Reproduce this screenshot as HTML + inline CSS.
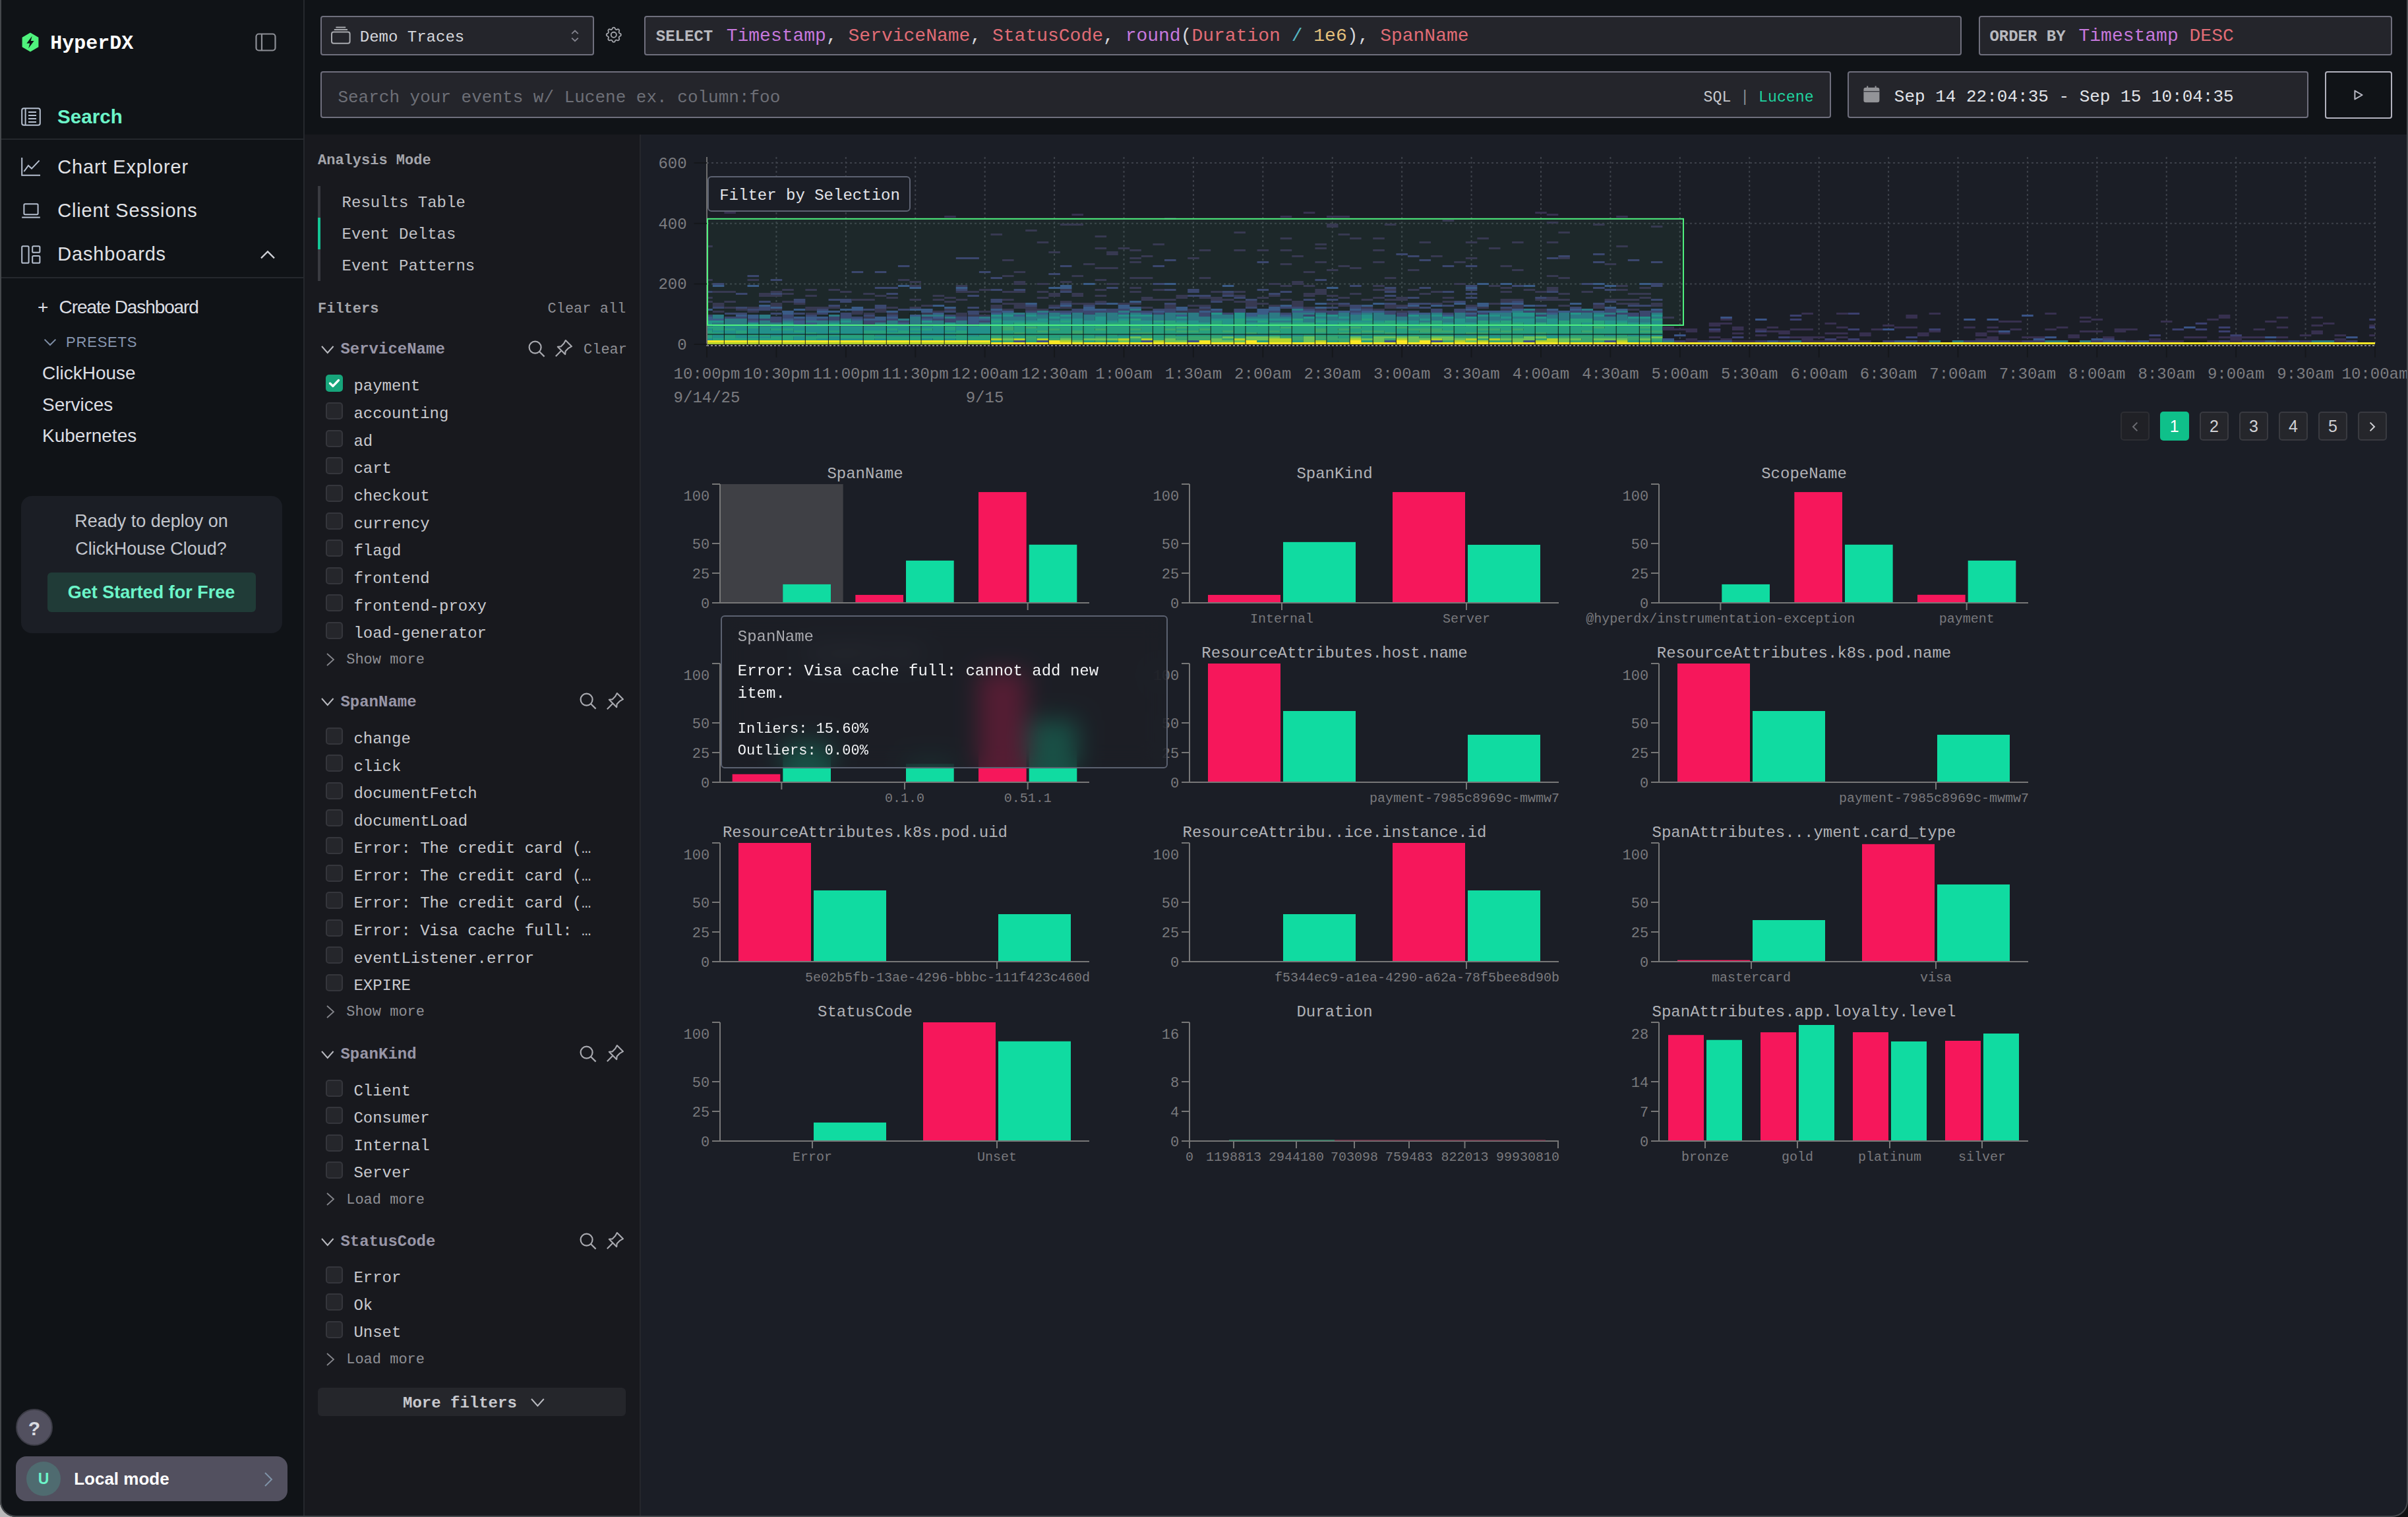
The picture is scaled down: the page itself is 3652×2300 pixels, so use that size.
<!DOCTYPE html><html><head><meta charset="utf-8"><style>
html{background:#2b2c2f}
@media (min-width:2400px){html{zoom:2}}
html,body{margin:0;padding:0;overflow:hidden}
body{width:1826px;height:1150px;position:relative;background:#101317;font-family:"Liberation Sans",sans-serif}
.t{position:absolute;white-space:pre}
.b{position:absolute;box-sizing:border-box}
svg{position:absolute;overflow:visible}
</style></head><body>

<div class="b" style="left:231.00px;top:102.00px;width:254.00px;height:1048.00px;background:#18191e"></div>
<div class="b" style="left:485.00px;top:102.00px;width:1.00px;height:1048.00px;background:#25262c"></div>
<div class="b" style="left:486.00px;top:102.00px;width:1340.00px;height:1048.00px;background:#1b1e26"></div>
<div class="b" style="left:230.00px;top:0.00px;width:1.00px;height:1150.00px;background:#25282d"></div>
<svg style="left:16px;top:24.5px" width="14" height="15" viewBox="0 0 14 15">
<path d="M7 0.3 L13.2 3.9 L13.2 11.1 L7 14.7 L0.8 11.1 L0.8 3.9 Z" fill="#4ff27d"/>
<path d="M8.3 2.9 L4.2 8.4 L6.6 8.4 L5.6 12.1 L9.8 6.5 L7.4 6.5 Z" fill="#0f1216"/>
</svg>
<div class="t" style="top:22.51px;font-size:15px;line-height:21.00px;color:#ffffff;font-family:'Liberation Mono', monospace;font-weight:700;left:38.10px;">HyperDX</div>
<svg style="left:193.5px;top:25px" width="16" height="14" viewBox="0 0 16 14">
<rect x="0.75" y="0.75" width="14.5" height="12.5" rx="2" fill="none" stroke="#8d8f96" stroke-width="1.1"/>
<line x1="5" y1="0.8" x2="5" y2="13.2" stroke="#8d8f96" stroke-width="1.1"/>
</svg>
<div class="b" style="left:1.00px;top:105.00px;width:229.00px;height:1.00px;background:#25282d"></div>
<div class="b" style="left:1.00px;top:210.00px;width:229.00px;height:1.00px;background:#25282d"></div>
<svg style="left:16px;top:81.5px" width="15" height="14" viewBox="0 0 15 14" fill="none" stroke="#b5bfcf" stroke-width="1">
<rect x="0.6" y="0.6" width="13.8" height="12.8" rx="1.5"/>
<line x1="3.3" y1="0.6" x2="3.3" y2="13.4"/>
<line x1="5.5" y1="3.5" x2="11.5" y2="3.5"/><line x1="5.5" y1="6" x2="11.5" y2="6"/><line x1="5.5" y1="8.5" x2="11.5" y2="8.5"/><line x1="5.5" y1="11" x2="11.5" y2="11"/>
</svg>
<div class="t" style="top:77.92px;font-size:14.8px;line-height:21.00px;color:#6cf5c9;font-family:'Liberation Sans', sans-serif;font-weight:700;left:43.50px;">Search</div>
<svg style="left:16px;top:119.5px" width="15" height="14" viewBox="0 0 15 14" fill="none" stroke="#b5bfcf" stroke-width="1">
<path d="M0.6 0 V13.4 H14.5"/><path d="M2.2 10.5 L5.5 6 L8 8.3 L13.8 2.2"/>
</svg>
<div class="t" style="top:116.32px;font-size:14.5px;line-height:20.00px;color:#e1e2e6;font-family:'Liberation Sans', sans-serif;font-weight:400;letter-spacing:0.42px;left:43.60px;">Chart Explorer</div>
<svg style="left:16px;top:154px" width="15" height="12" viewBox="0 0 15 12" fill="none" stroke="#b5bfcf" stroke-width="1">
<rect x="2.2" y="0.6" width="10.6" height="8" rx="0.8"/><path d="M0.6 10.8 H14.4"/>
</svg>
<div class="t" style="top:149.47px;font-size:14.5px;line-height:20.00px;color:#e1e2e6;font-family:'Liberation Sans', sans-serif;font-weight:400;letter-spacing:0.42px;left:43.60px;">Client Sessions</div>
<svg style="left:16px;top:186px" width="15" height="14" viewBox="0 0 15 14" fill="none" stroke="#b5bfcf" stroke-width="1">
<rect x="0.6" y="0.6" width="5.2" height="12.8" rx="0.8"/><rect x="8.6" y="0.6" width="5.6" height="4.8" rx="0.8"/><rect x="8.6" y="8" width="5.6" height="5.4" rx="0.8"/>
</svg>
<div class="t" style="top:182.62px;font-size:14.5px;line-height:20.00px;color:#e1e2e6;font-family:'Liberation Sans', sans-serif;font-weight:400;letter-spacing:0.42px;left:43.60px;">Dashboards</div>
<svg style="left:197px;top:189.5px" width="12" height="7" viewBox="0 0 12 7" fill="none" stroke="#d0d2d8" stroke-width="1.1">
<path d="M1 6.2 L6 1.2 L11 6.2"/></svg>
<div class="t" style="top:223.15px;font-size:14px;line-height:20.00px;color:#dcdee3;font-family:'Liberation Sans', sans-serif;font-weight:400;left:28.50px;">+</div>
<div class="t" style="top:223.15px;font-size:14px;line-height:20.00px;color:#dcdee3;font-family:'Liberation Sans', sans-serif;font-weight:400;letter-spacing:-0.55px;left:44.80px;">Create Dashboard</div>
<svg style="left:33px;top:256.5px" width="10" height="6" viewBox="0 0 10 6" fill="none" stroke="#7f8ea6" stroke-width="1">
<path d="M0.8 0.8 L5 5 L9.2 0.8"/></svg>
<div class="t" style="top:251.99px;font-size:11px;line-height:15.00px;color:#8796b0;font-family:'Liberation Sans', sans-serif;font-weight:400;letter-spacing:0.4px;left:50.00px;">PRESETS</div>
<div class="t" style="top:273.15px;font-size:14px;line-height:20.00px;color:#dcdee3;font-family:'Liberation Sans', sans-serif;font-weight:400;left:32.00px;">ClickHouse</div>
<div class="t" style="top:296.95px;font-size:14px;line-height:20.00px;color:#dcdee3;font-family:'Liberation Sans', sans-serif;font-weight:400;left:32.00px;">Services</div>
<div class="t" style="top:320.65px;font-size:14px;line-height:20.00px;color:#dcdee3;font-family:'Liberation Sans', sans-serif;font-weight:400;left:32.00px;">Kubernetes</div>
<div class="b" style="left:16.00px;top:376.00px;width:198.00px;height:104.00px;background:#1b1e25;border-radius:8px"></div>
<div class="t" style="top:385.62px;font-size:13.5px;line-height:19.00px;color:#c3c6cd;font-family:'Liberation Sans', sans-serif;font-weight:400;left:-285.25px;width:800px;text-align:center;">Ready to deploy on</div>
<div class="t" style="top:406.42px;font-size:13.5px;line-height:19.00px;color:#c3c6cd;font-family:'Liberation Sans', sans-serif;font-weight:400;left:-285.50px;width:800px;text-align:center;">ClickHouse Cloud?</div>
<div class="b" style="left:36.00px;top:434.00px;width:158.00px;height:30.00px;background:#203b37;border-radius:3px"></div>
<div class="t" style="top:439.52px;font-size:13.5px;line-height:19.00px;color:#6cf5c9;font-family:'Liberation Sans', sans-serif;font-weight:700;left:-285.25px;width:800px;text-align:center;">Get Started for Free</div>
<div class="b" style="left:12.00px;top:1068.00px;width:28.00px;height:28.00px;background:#52505f;border-radius:50%;border:1px solid #3c3c46"></div>
<div class="t" style="top:1072.70px;font-size:15px;line-height:21.00px;color:#d9dbe0;font-family:'Liberation Sans', sans-serif;font-weight:700;left:-374.00px;width:800px;text-align:center;">?</div>
<div class="b" style="left:12.00px;top:1104.00px;width:206.00px;height:34.00px;background:#52505f;border-radius:8px"></div>
<div class="b" style="left:20.00px;top:1108.00px;width:26.00px;height:26.00px;background:#4f6b70;border-radius:50%"></div>
<div class="t" style="top:1112.81px;font-size:11.5px;line-height:16.00px;color:#6cf5c9;font-family:'Liberation Sans', sans-serif;font-weight:700;left:-367.00px;width:800px;text-align:center;">U</div>
<div class="t" style="top:1111.99px;font-size:13px;line-height:18.00px;color:#ffffff;font-family:'Liberation Sans', sans-serif;font-weight:700;left:56.10px;">Local mode</div>
<svg style="left:200px;top:1115.5px" width="7" height="12" viewBox="0 0 7 12" fill="none" stroke="#7f93a8" stroke-width="1">
<path d="M1 1 L6 6 L1 11"/></svg>
<div class="b" style="left:243.00px;top:12.00px;width:207.30px;height:30.00px;background:#24252b;border:1px solid #6f6f7d;border-radius:2px"></div>
<svg style="left:250.5px;top:20px" width="16" height="14" viewBox="0 0 16 14" fill="none" stroke="#a7a9ae" stroke-width="1">
<rect x="1" y="4.3" width="13.8" height="8.6" rx="1.5"/><path d="M2.9 2.5 H13 M4.2 0.8 H11.6"/></svg>
<div class="t" style="top:19.86px;font-size:12px;line-height:17.00px;color:#d5d7dc;font-family:'Liberation Mono', monospace;font-weight:400;left:272.90px;">Demo Traces</div>
<svg style="left:432.5px;top:22.3px" width="7" height="10" viewBox="0 0 7 10" fill="none" stroke="#85858f" stroke-width="0.9">
<path d="M1.1 3.1 L3.5 0.8 L5.9 3.1 M1.1 6.3 L3.5 8.6 L5.9 6.3"/></svg>
<svg style="left:458.1px;top:19.1px" width="14.8" height="14.8" viewBox="0 0 24 24" fill="none" stroke="#a2a4aa" stroke-width="1.5" stroke-linecap="round" stroke-linejoin="round">
<path d="M10.325 4.317c.426 -1.756 2.924 -1.756 3.35 0a1.724 1.724 0 0 0 2.573 1.066c1.543 -.94 3.31 .826 2.37 2.37a1.724 1.724 0 0 0 1.065 2.572c1.756 .426 1.756 2.924 0 3.35a1.724 1.724 0 0 0 -1.066 2.573c.94 1.543 -.826 3.31 -2.37 2.37a1.724 1.724 0 0 0 -2.572 1.065c-.426 1.756 -2.924 1.756 -3.35 0a1.724 1.724 0 0 0 -2.573 -1.066c-1.543 .94 -3.31 -.826 -2.37 -2.37a1.724 1.724 0 0 0 -1.065 -2.572c-1.756 -.426 -1.756 -2.924 0 -3.35a1.724 1.724 0 0 0 1.066 -2.573c-.94 -1.543 .826 -3.31 2.37 -2.37c1 .608 2.296 .07 2.572 -1.065z"/><circle cx="12" cy="12" r="3.3"/></svg>
<div class="b" style="left:488.60px;top:12.00px;width:999.00px;height:30.00px;background:#24252b;border:1px solid #6f6f7d;border-radius:2px"></div>
<div class="t" style="top:19.71px;font-size:12px;line-height:17.00px;color:#b8b9bf;font-family:'Liberation Mono', monospace;font-weight:700;left:497.40px;">SELECT</div>
<div class="t" style="top:17.67px;font-size:14px;line-height:20.00px;color:#d5d7dc;font-family:'Liberation Mono', monospace;font-weight:400;left:550.85px;"><span style="color:#c678dd">Timestamp</span><span style="color:#d5d7dc">, </span><span style="color:#e06c75">ServiceName</span><span style="color:#d5d7dc">, </span><span style="color:#e06c75">StatusCode</span><span style="color:#d5d7dc">, </span><span style="color:#c678dd">round</span><span style="color:#d5d7dc">(</span><span style="color:#e06c75">Duration</span><span style="color:#d5d7dc"> </span><span style="color:#56b6c2">/</span><span style="color:#d5d7dc"> </span><span style="color:#e5c07b">1e6</span><span style="color:#d5d7dc">), </span><span style="color:#e06c75">SpanName</span></div>
<div class="b" style="left:1500.25px;top:12.00px;width:313.90px;height:30.00px;background:#24252b;border:1px solid #6f6f7d;border-radius:2px"></div>
<div class="t" style="top:19.71px;font-size:12px;line-height:17.00px;color:#b8b9bf;font-family:'Liberation Mono', monospace;font-weight:700;left:1508.70px;">ORDER BY</div>
<div class="t" style="top:17.67px;font-size:14px;line-height:20.00px;color:#d5d7dc;font-family:'Liberation Mono', monospace;font-weight:400;left:1576.25px;"><span style="color:#c678dd">Timestamp</span> <span style="color:#e06c75">DESC</span></div>
<div class="b" style="left:243.20px;top:54.20px;width:1145.50px;height:35.50px;background:#24252b;border:1px solid #6f6f7d;border-radius:2px"></div>
<div class="t" style="top:64.84px;font-size:13px;line-height:18.00px;color:#6d6f77;font-family:'Liberation Mono', monospace;font-weight:400;left:256.20px;">Search your events w/ Lucene ex. column:foo</div>
<div class="t" style="top:65.81px;font-size:11.6px;line-height:16.00px;color:#c6c8cd;font-family:'Liberation Mono', monospace;font-weight:400;left:1291.80px;">SQL <span style="color:#8c8e96">|</span> <span style="color:#20d39f">Lucene</span></div>
<div class="b" style="left:1401.00px;top:54.20px;width:349.50px;height:35.50px;background:#24252b;border:1px solid #6f6f7d;border-radius:2px"></div>
<svg style="left:1413px;top:65px" width="12.5" height="13" viewBox="0 0 12.5 13">
<rect x="0.2" y="1.4" width="12" height="11.2" rx="1.6" fill="#939498"/><rect x="0.2" y="4.1" width="12" height="0.55" fill="#24252b"/><rect x="2.6" y="0.2" width="1" height="2" fill="#939498"/><rect x="8.8" y="0.2" width="1" height="2" fill="#939498"/></svg>
<div class="t" style="top:64.64px;font-size:13px;line-height:18.00px;color:#e2e4e9;font-family:'Liberation Mono', monospace;font-weight:400;left:1436.40px;">Sep 14 22:04:35 - Sep 15 10:04:35</div>
<div class="b" style="left:1763.00px;top:54.00px;width:50.90px;height:36.00px;background:#101317;border:1px solid #b2b2be;border-radius:2px"></div>
<svg style="left:1784.6px;top:67.6px" width="8" height="9" viewBox="0 0 8 9" fill="none" stroke="#b9b9c4" stroke-width="1" stroke-linejoin="round">
<path d="M1.2 1.3 L6.8 4.5 L1.2 7.7 Z"/></svg>
<div class="t" style="top:114.27px;font-size:11px;line-height:15.00px;color:#a4a5ab;font-family:'Liberation Mono', monospace;font-weight:700;left:241.00px;">Analysis Mode</div>
<div class="b" style="left:241.00px;top:140.85px;width:2.00px;height:72.15px;background:#3a3b41"></div>
<div class="b" style="left:241.00px;top:164.75px;width:2.00px;height:24.20px;background:#14c595"></div>
<div class="t" style="top:145.51px;font-size:12px;line-height:17.00px;color:#c1c2c7;font-family:'Liberation Mono', monospace;font-weight:400;left:259.30px;">Results Table</div>
<div class="t" style="top:169.51px;font-size:12px;line-height:17.00px;color:#c1c2c7;font-family:'Liberation Mono', monospace;font-weight:400;left:259.30px;">Event Deltas</div>
<div class="t" style="top:193.41px;font-size:12px;line-height:17.00px;color:#c1c2c7;font-family:'Liberation Mono', monospace;font-weight:400;left:259.30px;">Event Patterns</div>
<div class="t" style="top:227.17px;font-size:11px;line-height:15.00px;color:#a4a5ab;font-family:'Liberation Mono', monospace;font-weight:700;left:241.00px;">Filters</div>
<div class="t" style="top:227.17px;font-size:11px;line-height:15.00px;color:#8e8f95;font-family:'Liberation Mono', monospace;font-weight:400;left:-325.35px;width:800px;text-align:right;">Clear all</div>
<svg style="left:243.20px;top:261.40px" width="10.80" height="7.00" viewBox="0 0 10.80 7.00" fill="none" stroke="#b9bac0" stroke-width="1.0"><path d="M1 1 L5.40 6.00 L9.80 1"/></svg>
<div class="t" style="top:256.71px;font-size:12px;line-height:17.00px;color:#9896a7;font-family:'Liberation Mono', monospace;font-weight:700;left:258.20px;">ServiceName</div>
<svg style="left:400.60px;top:258.00px" width="13" height="13" viewBox="0 0 13 13" fill="none" stroke="#a9aab0" stroke-width="1.1"><circle cx="5.3" cy="5.3" r="4.5"/><path d="M8.6 8.6 L12.3 12.3"/></svg>
<svg style="left:420.60px;top:257.10px" width="14" height="14" viewBox="0 0 14 14" fill="none" stroke="#a9aab0" stroke-width="1.05" stroke-linejoin="round"><path d="M8.4 1 L13 5.6 L10.6 6.9 L8.3 9.2 L8.1 11.6 L2.4 5.9 L4.8 5.7 L7.1 3.4 Z"/><path d="M5.2 8.8 L0.9 13.1"/></svg>
<div class="t" style="top:257.97px;font-size:11px;line-height:15.00px;color:#8e8f95;font-family:'Liberation Mono', monospace;font-weight:400;left:442.50px;">Clear</div>
<div class="b" style="left:247.20px;top:284.10px;width:13.00px;height:13.00px;background:#17a57b;border-radius:2.5px"></div>
<svg style="left:247.20px;top:284.10px" width="13" height="13" viewBox="0 0 13 13" fill="none" stroke="#ffffff" stroke-width="1.7" stroke-linecap="round" stroke-linejoin="round"><path d="M3.3 6.6 L5.5 8.7 L9.7 4.3"/></svg>
<div class="t" style="top:284.71px;font-size:12px;line-height:17.00px;color:#c8c9ce;font-family:'Liberation Mono', monospace;font-weight:400;left:268.20px;">payment</div>
<div class="b" style="left:247.20px;top:304.93px;width:13.00px;height:13.00px;background:#25262b;border:1px solid #35363c;border-radius:2.5px"></div>
<div class="t" style="top:305.54px;font-size:12px;line-height:17.00px;color:#c8c9ce;font-family:'Liberation Mono', monospace;font-weight:400;left:268.20px;">accounting</div>
<div class="b" style="left:247.20px;top:325.76px;width:13.00px;height:13.00px;background:#25262b;border:1px solid #35363c;border-radius:2.5px"></div>
<div class="t" style="top:326.37px;font-size:12px;line-height:17.00px;color:#c8c9ce;font-family:'Liberation Mono', monospace;font-weight:400;left:268.20px;">ad</div>
<div class="b" style="left:247.20px;top:346.59px;width:13.00px;height:13.00px;background:#25262b;border:1px solid #35363c;border-radius:2.5px"></div>
<div class="t" style="top:347.20px;font-size:12px;line-height:17.00px;color:#c8c9ce;font-family:'Liberation Mono', monospace;font-weight:400;left:268.20px;">cart</div>
<div class="b" style="left:247.20px;top:367.42px;width:13.00px;height:13.00px;background:#25262b;border:1px solid #35363c;border-radius:2.5px"></div>
<div class="t" style="top:368.03px;font-size:12px;line-height:17.00px;color:#c8c9ce;font-family:'Liberation Mono', monospace;font-weight:400;left:268.20px;">checkout</div>
<div class="b" style="left:247.20px;top:388.25px;width:13.00px;height:13.00px;background:#25262b;border:1px solid #35363c;border-radius:2.5px"></div>
<div class="t" style="top:388.86px;font-size:12px;line-height:17.00px;color:#c8c9ce;font-family:'Liberation Mono', monospace;font-weight:400;left:268.20px;">currency</div>
<div class="b" style="left:247.20px;top:409.08px;width:13.00px;height:13.00px;background:#25262b;border:1px solid #35363c;border-radius:2.5px"></div>
<div class="t" style="top:409.69px;font-size:12px;line-height:17.00px;color:#c8c9ce;font-family:'Liberation Mono', monospace;font-weight:400;left:268.20px;">flagd</div>
<div class="b" style="left:247.20px;top:429.91px;width:13.00px;height:13.00px;background:#25262b;border:1px solid #35363c;border-radius:2.5px"></div>
<div class="t" style="top:430.52px;font-size:12px;line-height:17.00px;color:#c8c9ce;font-family:'Liberation Mono', monospace;font-weight:400;left:268.20px;">frontend</div>
<div class="b" style="left:247.20px;top:450.74px;width:13.00px;height:13.00px;background:#25262b;border:1px solid #35363c;border-radius:2.5px"></div>
<div class="t" style="top:451.35px;font-size:12px;line-height:17.00px;color:#c8c9ce;font-family:'Liberation Mono', monospace;font-weight:400;left:268.20px;">frontend-proxy</div>
<div class="b" style="left:247.20px;top:471.57px;width:13.00px;height:13.00px;background:#25262b;border:1px solid #35363c;border-radius:2.5px"></div>
<div class="t" style="top:472.18px;font-size:12px;line-height:17.00px;color:#c8c9ce;font-family:'Liberation Mono', monospace;font-weight:400;left:268.20px;">load-generator</div>
<svg style="left:246.80px;top:494.40px" width="7.00" height="11.00" viewBox="0 0 7.00 11.00" fill="none" stroke="#85868c" stroke-width="0.9"><path d="M1 1 L6.00 5.50 L1 10.00"/></svg>
<div class="t" style="top:493.17px;font-size:11px;line-height:15.00px;color:#8e8f95;font-family:'Liberation Mono', monospace;font-weight:400;left:262.60px;">Show more</div>
<svg style="left:243.20px;top:528.60px" width="10.80" height="7.00" viewBox="0 0 10.80 7.00" fill="none" stroke="#b9bac0" stroke-width="1.0"><path d="M1 1 L5.40 6.00 L9.80 1"/></svg>
<div class="t" style="top:523.91px;font-size:12px;line-height:17.00px;color:#9896a7;font-family:'Liberation Mono', monospace;font-weight:700;left:258.20px;">SpanName</div>
<svg style="left:439.60px;top:525.20px" width="13" height="13" viewBox="0 0 13 13" fill="none" stroke="#a9aab0" stroke-width="1.1"><circle cx="5.3" cy="5.3" r="4.5"/><path d="M8.6 8.6 L12.3 12.3"/></svg>
<svg style="left:459.60px;top:524.30px" width="14" height="14" viewBox="0 0 14 14" fill="none" stroke="#a9aab0" stroke-width="1.05" stroke-linejoin="round"><path d="M8.4 1 L13 5.6 L10.6 6.9 L8.3 9.2 L8.1 11.6 L2.4 5.9 L4.8 5.7 L7.1 3.4 Z"/><path d="M5.2 8.8 L0.9 13.1"/></svg>
<div class="b" style="left:247.20px;top:551.40px;width:13.00px;height:13.00px;background:#25262b;border:1px solid #35363c;border-radius:2.5px"></div>
<div class="t" style="top:552.01px;font-size:12px;line-height:17.00px;color:#c8c9ce;font-family:'Liberation Mono', monospace;font-weight:400;left:268.20px;">change</div>
<div class="b" style="left:247.20px;top:572.18px;width:13.00px;height:13.00px;background:#25262b;border:1px solid #35363c;border-radius:2.5px"></div>
<div class="t" style="top:572.79px;font-size:12px;line-height:17.00px;color:#c8c9ce;font-family:'Liberation Mono', monospace;font-weight:400;left:268.20px;">click</div>
<div class="b" style="left:247.20px;top:592.96px;width:13.00px;height:13.00px;background:#25262b;border:1px solid #35363c;border-radius:2.5px"></div>
<div class="t" style="top:593.57px;font-size:12px;line-height:17.00px;color:#c8c9ce;font-family:'Liberation Mono', monospace;font-weight:400;left:268.20px;">documentFetch</div>
<div class="b" style="left:247.20px;top:613.74px;width:13.00px;height:13.00px;background:#25262b;border:1px solid #35363c;border-radius:2.5px"></div>
<div class="t" style="top:614.35px;font-size:12px;line-height:17.00px;color:#c8c9ce;font-family:'Liberation Mono', monospace;font-weight:400;left:268.20px;">documentLoad</div>
<div class="b" style="left:247.20px;top:634.52px;width:13.00px;height:13.00px;background:#25262b;border:1px solid #35363c;border-radius:2.5px"></div>
<div class="t" style="top:635.13px;font-size:12px;line-height:17.00px;color:#c8c9ce;font-family:'Liberation Mono', monospace;font-weight:400;left:268.20px;">Error: The credit card (…</div>
<div class="b" style="left:247.20px;top:655.30px;width:13.00px;height:13.00px;background:#25262b;border:1px solid #35363c;border-radius:2.5px"></div>
<div class="t" style="top:655.91px;font-size:12px;line-height:17.00px;color:#c8c9ce;font-family:'Liberation Mono', monospace;font-weight:400;left:268.20px;">Error: The credit card (…</div>
<div class="b" style="left:247.20px;top:676.08px;width:13.00px;height:13.00px;background:#25262b;border:1px solid #35363c;border-radius:2.5px"></div>
<div class="t" style="top:676.69px;font-size:12px;line-height:17.00px;color:#c8c9ce;font-family:'Liberation Mono', monospace;font-weight:400;left:268.20px;">Error: The credit card (…</div>
<div class="b" style="left:247.20px;top:696.86px;width:13.00px;height:13.00px;background:#25262b;border:1px solid #35363c;border-radius:2.5px"></div>
<div class="t" style="top:697.47px;font-size:12px;line-height:17.00px;color:#c8c9ce;font-family:'Liberation Mono', monospace;font-weight:400;left:268.20px;">Error: Visa cache full: …</div>
<div class="b" style="left:247.20px;top:717.64px;width:13.00px;height:13.00px;background:#25262b;border:1px solid #35363c;border-radius:2.5px"></div>
<div class="t" style="top:718.25px;font-size:12px;line-height:17.00px;color:#c8c9ce;font-family:'Liberation Mono', monospace;font-weight:400;left:268.20px;">eventListener.error</div>
<div class="b" style="left:247.20px;top:738.42px;width:13.00px;height:13.00px;background:#25262b;border:1px solid #35363c;border-radius:2.5px"></div>
<div class="t" style="top:739.03px;font-size:12px;line-height:17.00px;color:#c8c9ce;font-family:'Liberation Mono', monospace;font-weight:400;left:268.20px;">EXPIRE</div>
<svg style="left:246.80px;top:761.30px" width="7.00" height="11.00" viewBox="0 0 7.00 11.00" fill="none" stroke="#85868c" stroke-width="0.9"><path d="M1 1 L6.00 5.50 L1 10.00"/></svg>
<div class="t" style="top:760.07px;font-size:11px;line-height:15.00px;color:#8e8f95;font-family:'Liberation Mono', monospace;font-weight:400;left:262.60px;">Show more</div>
<svg style="left:243.20px;top:795.80px" width="10.80" height="7.00" viewBox="0 0 10.80 7.00" fill="none" stroke="#b9bac0" stroke-width="1.0"><path d="M1 1 L5.40 6.00 L9.80 1"/></svg>
<div class="t" style="top:791.11px;font-size:12px;line-height:17.00px;color:#9896a7;font-family:'Liberation Mono', monospace;font-weight:700;left:258.20px;">SpanKind</div>
<svg style="left:439.60px;top:792.40px" width="13" height="13" viewBox="0 0 13 13" fill="none" stroke="#a9aab0" stroke-width="1.1"><circle cx="5.3" cy="5.3" r="4.5"/><path d="M8.6 8.6 L12.3 12.3"/></svg>
<svg style="left:459.60px;top:791.50px" width="14" height="14" viewBox="0 0 14 14" fill="none" stroke="#a9aab0" stroke-width="1.05" stroke-linejoin="round"><path d="M8.4 1 L13 5.6 L10.6 6.9 L8.3 9.2 L8.1 11.6 L2.4 5.9 L4.8 5.7 L7.1 3.4 Z"/><path d="M5.2 8.8 L0.9 13.1"/></svg>
<div class="b" style="left:247.20px;top:818.30px;width:13.00px;height:13.00px;background:#25262b;border:1px solid #35363c;border-radius:2.5px"></div>
<div class="t" style="top:818.91px;font-size:12px;line-height:17.00px;color:#c8c9ce;font-family:'Liberation Mono', monospace;font-weight:400;left:268.20px;">Client</div>
<div class="b" style="left:247.20px;top:839.03px;width:13.00px;height:13.00px;background:#25262b;border:1px solid #35363c;border-radius:2.5px"></div>
<div class="t" style="top:839.64px;font-size:12px;line-height:17.00px;color:#c8c9ce;font-family:'Liberation Mono', monospace;font-weight:400;left:268.20px;">Consumer</div>
<div class="b" style="left:247.20px;top:859.76px;width:13.00px;height:13.00px;background:#25262b;border:1px solid #35363c;border-radius:2.5px"></div>
<div class="t" style="top:860.37px;font-size:12px;line-height:17.00px;color:#c8c9ce;font-family:'Liberation Mono', monospace;font-weight:400;left:268.20px;">Internal</div>
<div class="b" style="left:247.20px;top:880.49px;width:13.00px;height:13.00px;background:#25262b;border:1px solid #35363c;border-radius:2.5px"></div>
<div class="t" style="top:881.10px;font-size:12px;line-height:17.00px;color:#c8c9ce;font-family:'Liberation Mono', monospace;font-weight:400;left:268.20px;">Server</div>
<svg style="left:246.80px;top:903.70px" width="7.00" height="11.00" viewBox="0 0 7.00 11.00" fill="none" stroke="#85868c" stroke-width="0.9"><path d="M1 1 L6.00 5.50 L1 10.00"/></svg>
<div class="t" style="top:902.47px;font-size:11px;line-height:15.00px;color:#8e8f95;font-family:'Liberation Mono', monospace;font-weight:400;left:262.60px;">Load more</div>
<svg style="left:243.20px;top:937.90px" width="10.80" height="7.00" viewBox="0 0 10.80 7.00" fill="none" stroke="#b9bac0" stroke-width="1.0"><path d="M1 1 L5.40 6.00 L9.80 1"/></svg>
<div class="t" style="top:933.21px;font-size:12px;line-height:17.00px;color:#9896a7;font-family:'Liberation Mono', monospace;font-weight:700;left:258.20px;">StatusCode</div>
<svg style="left:439.60px;top:934.50px" width="13" height="13" viewBox="0 0 13 13" fill="none" stroke="#a9aab0" stroke-width="1.1"><circle cx="5.3" cy="5.3" r="4.5"/><path d="M8.6 8.6 L12.3 12.3"/></svg>
<svg style="left:459.60px;top:933.60px" width="14" height="14" viewBox="0 0 14 14" fill="none" stroke="#a9aab0" stroke-width="1.05" stroke-linejoin="round"><path d="M8.4 1 L13 5.6 L10.6 6.9 L8.3 9.2 L8.1 11.6 L2.4 5.9 L4.8 5.7 L7.1 3.4 Z"/><path d="M5.2 8.8 L0.9 13.1"/></svg>
<div class="b" style="left:247.20px;top:960.00px;width:13.00px;height:13.00px;background:#25262b;border:1px solid #35363c;border-radius:2.5px"></div>
<div class="t" style="top:960.61px;font-size:12px;line-height:17.00px;color:#c8c9ce;font-family:'Liberation Mono', monospace;font-weight:400;left:268.20px;">Error</div>
<div class="b" style="left:247.20px;top:980.70px;width:13.00px;height:13.00px;background:#25262b;border:1px solid #35363c;border-radius:2.5px"></div>
<div class="t" style="top:981.31px;font-size:12px;line-height:17.00px;color:#c8c9ce;font-family:'Liberation Mono', monospace;font-weight:400;left:268.20px;">Ok</div>
<div class="b" style="left:247.20px;top:1001.40px;width:13.00px;height:13.00px;background:#25262b;border:1px solid #35363c;border-radius:2.5px"></div>
<div class="t" style="top:1002.01px;font-size:12px;line-height:17.00px;color:#c8c9ce;font-family:'Liberation Mono', monospace;font-weight:400;left:268.20px;">Unset</div>
<svg style="left:246.80px;top:1024.90px" width="7.00" height="11.00" viewBox="0 0 7.00 11.00" fill="none" stroke="#85868c" stroke-width="0.9"><path d="M1 1 L6.00 5.50 L1 10.00"/></svg>
<div class="t" style="top:1023.67px;font-size:11px;line-height:15.00px;color:#8e8f95;font-family:'Liberation Mono', monospace;font-weight:400;left:262.60px;">Load more</div>
<div class="b" style="left:241.00px;top:1052.00px;width:233.60px;height:21.60px;background:#25262b;border-radius:3px"></div>
<div class="t" style="top:1055.51px;font-size:12px;line-height:17.00px;color:#c8c9ce;font-family:'Liberation Mono', monospace;font-weight:700;left:305.50px;">More filters</div>
<svg style="left:402.00px;top:1059.50px" width="11.40" height="7.20" viewBox="0 0 11.40 7.20" fill="none" stroke="#b9bac0" stroke-width="1.0"><path d="M1 1 L5.70 6.20 L10.40 1"/></svg>
<svg style="left:0;top:0" width="1826" height="400" viewBox="0 0 1826 400">
<line x1="536.0" y1="123.5" x2="1801.0" y2="123.5" stroke="#3d414a" stroke-width="1" stroke-dasharray="1.5 2"/>
<line x1="536.0" y1="169.4" x2="1801.0" y2="169.4" stroke="#3d414a" stroke-width="1" stroke-dasharray="1.5 2"/>
<line x1="536.0" y1="215.25" x2="1801.0" y2="215.25" stroke="#3d414a" stroke-width="1" stroke-dasharray="1.5 2"/>
<line x1="588.71" y1="119.0" x2="588.71" y2="261.0" stroke="#3d414a" stroke-width="1" stroke-dasharray="1.5 2"/>
<line x1="641.42" y1="119.0" x2="641.42" y2="261.0" stroke="#3d414a" stroke-width="1" stroke-dasharray="1.5 2"/>
<line x1="694.12" y1="119.0" x2="694.12" y2="261.0" stroke="#3d414a" stroke-width="1" stroke-dasharray="1.5 2"/>
<line x1="746.83" y1="119.0" x2="746.83" y2="261.0" stroke="#3d414a" stroke-width="1" stroke-dasharray="1.5 2"/>
<line x1="799.54" y1="119.0" x2="799.54" y2="261.0" stroke="#3d414a" stroke-width="1" stroke-dasharray="1.5 2"/>
<line x1="852.25" y1="119.0" x2="852.25" y2="261.0" stroke="#3d414a" stroke-width="1" stroke-dasharray="1.5 2"/>
<line x1="904.96" y1="119.0" x2="904.96" y2="261.0" stroke="#3d414a" stroke-width="1" stroke-dasharray="1.5 2"/>
<line x1="957.66" y1="119.0" x2="957.66" y2="261.0" stroke="#3d414a" stroke-width="1" stroke-dasharray="1.5 2"/>
<line x1="1010.37" y1="119.0" x2="1010.37" y2="261.0" stroke="#3d414a" stroke-width="1" stroke-dasharray="1.5 2"/>
<line x1="1063.08" y1="119.0" x2="1063.08" y2="261.0" stroke="#3d414a" stroke-width="1" stroke-dasharray="1.5 2"/>
<line x1="1115.79" y1="119.0" x2="1115.79" y2="261.0" stroke="#3d414a" stroke-width="1" stroke-dasharray="1.5 2"/>
<line x1="1168.50" y1="119.0" x2="1168.50" y2="261.0" stroke="#3d414a" stroke-width="1" stroke-dasharray="1.5 2"/>
<line x1="1221.20" y1="119.0" x2="1221.20" y2="261.0" stroke="#3d414a" stroke-width="1" stroke-dasharray="1.5 2"/>
<line x1="1273.91" y1="119.0" x2="1273.91" y2="261.0" stroke="#3d414a" stroke-width="1" stroke-dasharray="1.5 2"/>
<line x1="1326.62" y1="119.0" x2="1326.62" y2="261.0" stroke="#3d414a" stroke-width="1" stroke-dasharray="1.5 2"/>
<line x1="1379.33" y1="119.0" x2="1379.33" y2="261.0" stroke="#3d414a" stroke-width="1" stroke-dasharray="1.5 2"/>
<line x1="1432.04" y1="119.0" x2="1432.04" y2="261.0" stroke="#3d414a" stroke-width="1" stroke-dasharray="1.5 2"/>
<line x1="1484.74" y1="119.0" x2="1484.74" y2="261.0" stroke="#3d414a" stroke-width="1" stroke-dasharray="1.5 2"/>
<line x1="1537.45" y1="119.0" x2="1537.45" y2="261.0" stroke="#3d414a" stroke-width="1" stroke-dasharray="1.5 2"/>
<line x1="1590.16" y1="119.0" x2="1590.16" y2="261.0" stroke="#3d414a" stroke-width="1" stroke-dasharray="1.5 2"/>
<line x1="1642.87" y1="119.0" x2="1642.87" y2="261.0" stroke="#3d414a" stroke-width="1" stroke-dasharray="1.5 2"/>
<line x1="1695.58" y1="119.0" x2="1695.58" y2="261.0" stroke="#3d414a" stroke-width="1" stroke-dasharray="1.5 2"/>
<line x1="1748.28" y1="119.0" x2="1748.28" y2="261.0" stroke="#3d414a" stroke-width="1" stroke-dasharray="1.5 2"/>
<line x1="1800.99" y1="119.0" x2="1800.99" y2="261.0" stroke="#3d414a" stroke-width="1" stroke-dasharray="1.5 2"/>
<rect x="536.00" y="259.50" width="215.23" height="1.5" fill="#b4d22c"/>
<rect x="751.23" y="259.50" width="1049.77" height="1.5" fill="#fde725"/>
<rect x="536.00" y="258.00" width="215.23" height="1.5" fill="#fde725"/>
<rect x="751.23" y="258.00" width="8.78" height="1.5" fill="#279f7d"/>
<rect x="760.01" y="258.00" width="8.78" height="1.5" fill="#3aa76e"/>
<rect x="768.80" y="258.00" width="8.78" height="1.5" fill="#3a5487"/>
<rect x="777.58" y="258.00" width="8.78" height="1.5" fill="#279f7d"/>
<rect x="786.36" y="258.00" width="8.78" height="1.5" fill="#3a5487"/>
<rect x="795.15" y="258.00" width="8.78" height="1.5" fill="#fde725"/>
<rect x="803.93" y="258.00" width="8.78" height="1.5" fill="#b4d22c"/>
<rect x="812.72" y="258.00" width="8.78" height="1.5" fill="#6cc35a"/>
<rect x="821.50" y="258.00" width="8.78" height="1.5" fill="#279f7d"/>
<rect x="830.29" y="258.00" width="8.78" height="1.5" fill="#3aa76e"/>
<rect x="839.07" y="258.00" width="8.78" height="1.5" fill="#279f7d"/>
<rect x="847.86" y="258.00" width="8.78" height="1.5" fill="#6cc35a"/>
<rect x="856.64" y="258.00" width="8.78" height="1.5" fill="#279f7d"/>
<rect x="865.43" y="258.00" width="8.78" height="1.5" fill="#3a5487"/>
<rect x="874.21" y="258.00" width="8.78" height="1.5" fill="#b4d22c"/>
<rect x="883.00" y="258.00" width="17.57" height="1.5" fill="#6cc35a"/>
<rect x="900.57" y="258.00" width="8.78" height="1.5" fill="#3a5487"/>
<rect x="909.35" y="258.00" width="8.78" height="1.5" fill="#fde725"/>
<rect x="918.14" y="258.00" width="26.35" height="1.5" fill="#6cc35a"/>
<rect x="944.49" y="258.00" width="8.78" height="1.5" fill="#fde725"/>
<rect x="953.27" y="258.00" width="8.78" height="1.5" fill="#279f7d"/>
<rect x="962.06" y="258.00" width="17.57" height="1.5" fill="#b4d22c"/>
<rect x="979.63" y="258.00" width="8.78" height="1.5" fill="#279f7d"/>
<rect x="988.41" y="258.00" width="8.78" height="1.5" fill="#6cc35a"/>
<rect x="997.20" y="258.00" width="8.78" height="1.5" fill="#b4d22c"/>
<rect x="1005.98" y="258.00" width="8.78" height="1.5" fill="#279f7d"/>
<rect x="1014.77" y="258.00" width="8.78" height="1.5" fill="#3aa76e"/>
<rect x="1023.55" y="258.00" width="8.78" height="1.5" fill="#fde725"/>
<rect x="1032.34" y="258.00" width="8.78" height="1.5" fill="#279f7d"/>
<rect x="1041.12" y="258.00" width="8.78" height="1.5" fill="#6cc35a"/>
<rect x="1049.91" y="258.00" width="8.78" height="1.5" fill="#3a5487"/>
<rect x="1058.69" y="258.00" width="8.78" height="1.5" fill="#fde725"/>
<rect x="1067.48" y="258.00" width="8.78" height="1.5" fill="#6cc35a"/>
<rect x="1076.26" y="258.00" width="8.78" height="1.5" fill="#fde725"/>
<rect x="1085.05" y="258.00" width="8.78" height="1.5" fill="#3a5487"/>
<rect x="1093.83" y="258.00" width="8.78" height="1.5" fill="#3aa76e"/>
<rect x="1102.61" y="258.00" width="8.78" height="1.5" fill="#b4d22c"/>
<rect x="1111.40" y="258.00" width="8.78" height="1.5" fill="#6cc35a"/>
<rect x="1120.18" y="258.00" width="8.78" height="1.5" fill="#b4d22c"/>
<rect x="1128.97" y="258.00" width="17.57" height="1.5" fill="#3aa76e"/>
<rect x="1146.54" y="258.00" width="8.78" height="1.5" fill="#6cc35a"/>
<rect x="1155.32" y="258.00" width="8.78" height="1.5" fill="#3a5487"/>
<rect x="1164.11" y="258.00" width="17.57" height="1.5" fill="#b4d22c"/>
<rect x="1181.68" y="258.00" width="8.78" height="1.5" fill="#6cc35a"/>
<rect x="1190.46" y="258.00" width="26.35" height="1.5" fill="#3aa76e"/>
<rect x="1216.82" y="258.00" width="8.78" height="1.5" fill="#3a5487"/>
<rect x="1225.60" y="258.00" width="8.78" height="1.5" fill="#b4d22c"/>
<rect x="1234.39" y="258.00" width="8.78" height="1.5" fill="#279f7d"/>
<rect x="1243.17" y="258.00" width="8.78" height="1.5" fill="#3aa76e"/>
<rect x="1251.95" y="258.00" width="8.78" height="1.5" fill="#279f7d"/>
<rect x="1260.74" y="258.00" width="8.78" height="1.5" fill="#2b7585"/>
<rect x="1269.52" y="258.00" width="8.78" height="1.5" fill="#3b3f6e"/>
<rect x="1278.31" y="258.00" width="8.78" height="1.5" fill="#37304f"/>
<rect x="1287.09" y="258.00" width="8.78" height="1.5" fill="#3b3f6e"/>
<rect x="1295.88" y="258.00" width="17.57" height="1.5" fill="#3a5487"/>
<rect x="1313.45" y="258.00" width="17.57" height="1.5" fill="#37304f"/>
<rect x="1331.02" y="258.00" width="8.78" height="1.5" fill="#3b3f6e"/>
<rect x="1339.80" y="258.00" width="8.78" height="1.5" fill="#3a5487"/>
<rect x="1348.59" y="258.00" width="8.78" height="1.5" fill="#3b3f6e"/>
<rect x="1357.37" y="258.00" width="8.78" height="1.5" fill="#2b7585"/>
<rect x="1366.16" y="258.00" width="52.71" height="1.5" fill="#37304f"/>
<rect x="1427.65" y="258.00" width="8.78" height="1.5" fill="#3b3f6e"/>
<rect x="1436.43" y="258.00" width="17.57" height="1.5" fill="#3a5487"/>
<rect x="1454.00" y="258.00" width="8.78" height="1.5" fill="#37304f"/>
<rect x="1462.79" y="258.00" width="8.78" height="1.5" fill="#2b7585"/>
<rect x="1480.36" y="258.00" width="8.78" height="1.5" fill="#2b7585"/>
<rect x="1489.14" y="258.00" width="35.14" height="1.5" fill="#3b3f6e"/>
<rect x="1524.28" y="258.00" width="8.78" height="1.5" fill="#37304f"/>
<rect x="1533.07" y="258.00" width="17.57" height="1.5" fill="#3b3f6e"/>
<rect x="1550.64" y="258.00" width="17.57" height="1.5" fill="#2b7585"/>
<rect x="1576.99" y="258.00" width="8.78" height="1.5" fill="#2b7585"/>
<rect x="1585.77" y="258.00" width="8.78" height="1.5" fill="#3b3f6e"/>
<rect x="1594.56" y="258.00" width="17.57" height="1.5" fill="#3a5487"/>
<rect x="1612.13" y="258.00" width="8.78" height="1.5" fill="#3b3f6e"/>
<rect x="1620.91" y="258.00" width="8.78" height="1.5" fill="#3a5487"/>
<rect x="1629.70" y="258.00" width="26.35" height="1.5" fill="#37304f"/>
<rect x="1673.62" y="258.00" width="8.78" height="1.5" fill="#37304f"/>
<rect x="1682.41" y="258.00" width="8.78" height="1.5" fill="#3b3f6e"/>
<rect x="1691.19" y="258.00" width="8.78" height="1.5" fill="#37304f"/>
<rect x="1699.98" y="258.00" width="17.57" height="1.5" fill="#3b3f6e"/>
<rect x="1717.55" y="258.00" width="8.78" height="1.5" fill="#3a5487"/>
<rect x="1726.33" y="258.00" width="8.78" height="1.5" fill="#3b3f6e"/>
<rect x="1735.11" y="258.00" width="8.78" height="1.5" fill="#3a5487"/>
<rect x="1743.90" y="258.00" width="8.78" height="1.5" fill="#3b3f6e"/>
<rect x="1752.68" y="258.00" width="17.57" height="1.5" fill="#2b7585"/>
<rect x="1770.25" y="258.00" width="8.78" height="1.5" fill="#37304f"/>
<rect x="1779.04" y="258.00" width="8.78" height="1.5" fill="#3b3f6e"/>
<rect x="536.00" y="256.50" width="4.39" height="1.5" fill="#22908a"/>
<rect x="540.39" y="256.50" width="61.49" height="1.5" fill="#279f7d"/>
<rect x="601.89" y="256.50" width="8.78" height="1.5" fill="#22908a"/>
<rect x="610.67" y="256.50" width="8.78" height="1.5" fill="#279f7d"/>
<rect x="619.45" y="256.50" width="35.14" height="1.5" fill="#22908a"/>
<rect x="654.59" y="256.50" width="8.78" height="1.5" fill="#279f7d"/>
<rect x="663.38" y="256.50" width="8.78" height="1.5" fill="#22908a"/>
<rect x="672.16" y="256.50" width="26.35" height="1.5" fill="#279f7d"/>
<rect x="698.52" y="256.50" width="8.78" height="1.5" fill="#22908a"/>
<rect x="707.30" y="256.50" width="8.78" height="1.5" fill="#279f7d"/>
<rect x="716.09" y="256.50" width="8.78" height="1.5" fill="#22908a"/>
<rect x="724.87" y="256.50" width="26.35" height="1.5" fill="#279f7d"/>
<rect x="751.23" y="256.50" width="8.78" height="1.5" fill="#b4d22c"/>
<rect x="760.01" y="256.50" width="8.78" height="1.5" fill="#6cc35a"/>
<rect x="768.80" y="256.50" width="8.78" height="1.5" fill="#b4d22c"/>
<rect x="777.58" y="256.50" width="8.78" height="1.5" fill="#3aa76e"/>
<rect x="786.36" y="256.50" width="8.78" height="1.5" fill="#b4d22c"/>
<rect x="795.15" y="256.50" width="8.78" height="1.5" fill="#3aa76e"/>
<rect x="803.93" y="256.50" width="8.78" height="1.5" fill="#6cc35a"/>
<rect x="812.72" y="256.50" width="8.78" height="1.5" fill="#3aa76e"/>
<rect x="821.50" y="256.50" width="26.35" height="1.5" fill="#6cc35a"/>
<rect x="847.86" y="256.50" width="8.78" height="1.5" fill="#b4d22c"/>
<rect x="856.64" y="256.50" width="8.78" height="1.5" fill="#3aa76e"/>
<rect x="865.43" y="256.50" width="8.78" height="1.5" fill="#b4d22c"/>
<rect x="874.21" y="256.50" width="8.78" height="1.5" fill="#3aa76e"/>
<rect x="883.00" y="256.50" width="8.78" height="1.5" fill="#6cc35a"/>
<rect x="891.78" y="256.50" width="26.35" height="1.5" fill="#3aa76e"/>
<rect x="918.14" y="256.50" width="8.78" height="1.5" fill="#6cc35a"/>
<rect x="926.92" y="256.50" width="8.78" height="1.5" fill="#3aa76e"/>
<rect x="935.70" y="256.50" width="8.78" height="1.5" fill="#b4d22c"/>
<rect x="944.49" y="256.50" width="17.57" height="1.5" fill="#6cc35a"/>
<rect x="962.06" y="256.50" width="17.57" height="1.5" fill="#b4d22c"/>
<rect x="979.63" y="256.50" width="8.78" height="1.5" fill="#3aa76e"/>
<rect x="988.41" y="256.50" width="8.78" height="1.5" fill="#6cc35a"/>
<rect x="997.20" y="256.50" width="26.35" height="1.5" fill="#3aa76e"/>
<rect x="1023.55" y="256.50" width="8.78" height="1.5" fill="#b4d22c"/>
<rect x="1032.34" y="256.50" width="17.57" height="1.5" fill="#6cc35a"/>
<rect x="1049.91" y="256.50" width="8.78" height="1.5" fill="#3aa76e"/>
<rect x="1058.69" y="256.50" width="8.78" height="1.5" fill="#b4d22c"/>
<rect x="1067.48" y="256.50" width="17.57" height="1.5" fill="#6cc35a"/>
<rect x="1085.05" y="256.50" width="8.78" height="1.5" fill="#b4d22c"/>
<rect x="1093.83" y="256.50" width="17.57" height="1.5" fill="#6cc35a"/>
<rect x="1111.40" y="256.50" width="8.78" height="1.5" fill="#b4d22c"/>
<rect x="1120.18" y="256.50" width="8.78" height="1.5" fill="#3aa76e"/>
<rect x="1128.97" y="256.50" width="8.78" height="1.5" fill="#b4d22c"/>
<rect x="1137.75" y="256.50" width="26.35" height="1.5" fill="#6cc35a"/>
<rect x="1164.11" y="256.50" width="8.78" height="1.5" fill="#3aa76e"/>
<rect x="1172.89" y="256.50" width="8.78" height="1.5" fill="#b4d22c"/>
<rect x="1181.68" y="256.50" width="17.57" height="1.5" fill="#6cc35a"/>
<rect x="1199.25" y="256.50" width="8.78" height="1.5" fill="#3aa76e"/>
<rect x="1208.03" y="256.50" width="26.35" height="1.5" fill="#6cc35a"/>
<rect x="1234.39" y="256.50" width="8.78" height="1.5" fill="#3aa76e"/>
<rect x="1243.17" y="256.50" width="8.78" height="1.5" fill="#6cc35a"/>
<rect x="1251.95" y="256.50" width="8.78" height="1.5" fill="#3aa76e"/>
<rect x="1260.74" y="256.50" width="8.78" height="1.5" fill="#3a5487"/>
<rect x="1278.31" y="256.50" width="8.78" height="1.5" fill="#37304f"/>
<rect x="1304.66" y="256.50" width="8.78" height="1.5" fill="#37304f"/>
<rect x="1366.16" y="256.50" width="8.78" height="1.5" fill="#37304f"/>
<rect x="1383.73" y="256.50" width="8.78" height="1.5" fill="#3b3f6e"/>
<rect x="1401.30" y="256.50" width="8.78" height="1.5" fill="#3b3f6e"/>
<rect x="1497.93" y="256.50" width="17.57" height="1.5" fill="#37304f"/>
<rect x="1541.85" y="256.50" width="8.78" height="1.5" fill="#3a5487"/>
<rect x="1585.77" y="256.50" width="8.78" height="1.5" fill="#3a5487"/>
<rect x="1594.56" y="256.50" width="8.78" height="1.5" fill="#3b3f6e"/>
<rect x="1629.70" y="256.50" width="8.78" height="1.5" fill="#37304f"/>
<rect x="1691.19" y="256.50" width="8.78" height="1.5" fill="#37304f"/>
<rect x="1770.25" y="256.50" width="8.78" height="1.5" fill="#37304f"/>
<rect x="536.00" y="255.00" width="4.39" height="1.5" fill="#279f7d"/>
<rect x="540.39" y="255.00" width="8.78" height="1.5" fill="#22908a"/>
<rect x="549.18" y="255.00" width="8.78" height="1.5" fill="#279f7d"/>
<rect x="557.96" y="255.00" width="26.35" height="1.5" fill="#22908a"/>
<rect x="584.32" y="255.00" width="17.57" height="1.5" fill="#279f7d"/>
<rect x="601.89" y="255.00" width="8.78" height="1.5" fill="#22908a"/>
<rect x="610.67" y="255.00" width="17.57" height="1.5" fill="#279f7d"/>
<rect x="628.24" y="255.00" width="8.78" height="1.5" fill="#22908a"/>
<rect x="637.02" y="255.00" width="114.20" height="1.5" fill="#279f7d"/>
<rect x="751.23" y="255.00" width="17.57" height="1.5" fill="#3aa76e"/>
<rect x="768.80" y="255.00" width="8.78" height="1.5" fill="#279f7d"/>
<rect x="777.58" y="255.00" width="8.78" height="1.5" fill="#3aa76e"/>
<rect x="786.36" y="255.00" width="17.57" height="1.5" fill="#279f7d"/>
<rect x="803.93" y="255.00" width="8.78" height="1.5" fill="#3aa76e"/>
<rect x="812.72" y="255.00" width="17.57" height="1.5" fill="#279f7d"/>
<rect x="830.29" y="255.00" width="8.78" height="1.5" fill="#3aa76e"/>
<rect x="839.07" y="255.00" width="17.57" height="1.5" fill="#279f7d"/>
<rect x="856.64" y="255.00" width="8.78" height="1.5" fill="#6cc35a"/>
<rect x="865.43" y="255.00" width="8.78" height="1.5" fill="#3aa76e"/>
<rect x="874.21" y="255.00" width="8.78" height="1.5" fill="#279f7d"/>
<rect x="883.00" y="255.00" width="43.92" height="1.5" fill="#3aa76e"/>
<rect x="926.92" y="255.00" width="8.78" height="1.5" fill="#6cc35a"/>
<rect x="935.70" y="255.00" width="8.78" height="1.5" fill="#3aa76e"/>
<rect x="944.49" y="255.00" width="26.35" height="1.5" fill="#6cc35a"/>
<rect x="970.84" y="255.00" width="17.57" height="1.5" fill="#3aa76e"/>
<rect x="988.41" y="255.00" width="8.78" height="1.5" fill="#6cc35a"/>
<rect x="997.20" y="255.00" width="17.57" height="1.5" fill="#3aa76e"/>
<rect x="1014.77" y="255.00" width="8.78" height="1.5" fill="#279f7d"/>
<rect x="1023.55" y="255.00" width="8.78" height="1.5" fill="#6cc35a"/>
<rect x="1032.34" y="255.00" width="8.78" height="1.5" fill="#279f7d"/>
<rect x="1041.12" y="255.00" width="35.14" height="1.5" fill="#6cc35a"/>
<rect x="1076.26" y="255.00" width="8.78" height="1.5" fill="#3aa76e"/>
<rect x="1085.05" y="255.00" width="17.57" height="1.5" fill="#6cc35a"/>
<rect x="1102.61" y="255.00" width="17.57" height="1.5" fill="#3aa76e"/>
<rect x="1120.18" y="255.00" width="8.78" height="1.5" fill="#6cc35a"/>
<rect x="1128.97" y="255.00" width="8.78" height="1.5" fill="#279f7d"/>
<rect x="1137.75" y="255.00" width="17.57" height="1.5" fill="#3aa76e"/>
<rect x="1155.32" y="255.00" width="17.57" height="1.5" fill="#6cc35a"/>
<rect x="1172.89" y="255.00" width="8.78" height="1.5" fill="#279f7d"/>
<rect x="1181.68" y="255.00" width="70.28" height="1.5" fill="#3aa76e"/>
<rect x="1251.95" y="255.00" width="8.78" height="1.5" fill="#6cc35a"/>
<rect x="1295.88" y="255.00" width="8.78" height="1.5" fill="#37304f"/>
<rect x="1313.45" y="255.00" width="8.78" height="1.5" fill="#3b3f6e"/>
<rect x="1348.59" y="255.00" width="8.78" height="1.5" fill="#3b3f6e"/>
<rect x="1357.37" y="255.00" width="26.35" height="1.5" fill="#37304f"/>
<rect x="1392.51" y="255.00" width="8.78" height="1.5" fill="#37304f"/>
<rect x="1445.22" y="255.00" width="8.78" height="1.5" fill="#3b3f6e"/>
<rect x="1506.71" y="255.00" width="8.78" height="1.5" fill="#37304f"/>
<rect x="1533.07" y="255.00" width="17.57" height="1.5" fill="#37304f"/>
<rect x="1550.64" y="255.00" width="8.78" height="1.5" fill="#3a5487"/>
<rect x="1568.20" y="255.00" width="8.78" height="1.5" fill="#37304f"/>
<rect x="1594.56" y="255.00" width="8.78" height="1.5" fill="#37304f"/>
<rect x="1656.05" y="255.00" width="17.57" height="1.5" fill="#37304f"/>
<rect x="1682.41" y="255.00" width="35.14" height="1.5" fill="#37304f"/>
<rect x="1717.55" y="255.00" width="8.78" height="1.5" fill="#3a5487"/>
<rect x="1726.33" y="255.00" width="8.78" height="1.5" fill="#37304f"/>
<rect x="1779.04" y="255.00" width="8.78" height="1.5" fill="#3a5487"/>
<rect x="536.00" y="253.50" width="4.39" height="1.5" fill="#279f7d"/>
<rect x="540.39" y="253.50" width="8.78" height="1.5" fill="#22908a"/>
<rect x="549.18" y="253.50" width="8.78" height="1.5" fill="#279f7d"/>
<rect x="557.96" y="253.50" width="8.78" height="1.5" fill="#22908a"/>
<rect x="566.75" y="253.50" width="17.57" height="1.5" fill="#279f7d"/>
<rect x="584.32" y="253.50" width="8.78" height="1.5" fill="#22908a"/>
<rect x="593.10" y="253.50" width="17.57" height="1.5" fill="#279f7d"/>
<rect x="610.67" y="253.50" width="8.78" height="1.5" fill="#22908a"/>
<rect x="619.45" y="253.50" width="43.92" height="1.5" fill="#279f7d"/>
<rect x="663.38" y="253.50" width="61.49" height="1.5" fill="#22908a"/>
<rect x="724.87" y="253.50" width="8.78" height="1.5" fill="#279f7d"/>
<rect x="733.66" y="253.50" width="8.78" height="1.5" fill="#22908a"/>
<rect x="742.44" y="253.50" width="87.85" height="1.5" fill="#279f7d"/>
<rect x="830.29" y="253.50" width="8.78" height="1.5" fill="#22908a"/>
<rect x="839.07" y="253.50" width="8.78" height="1.5" fill="#279f7d"/>
<rect x="847.86" y="253.50" width="17.57" height="1.5" fill="#22908a"/>
<rect x="865.43" y="253.50" width="26.35" height="1.5" fill="#279f7d"/>
<rect x="891.78" y="253.50" width="8.78" height="1.5" fill="#22908a"/>
<rect x="900.57" y="253.50" width="26.35" height="1.5" fill="#279f7d"/>
<rect x="926.92" y="253.50" width="35.14" height="1.5" fill="#22908a"/>
<rect x="962.06" y="253.50" width="8.78" height="1.5" fill="#279f7d"/>
<rect x="970.84" y="253.50" width="17.57" height="1.5" fill="#22908a"/>
<rect x="988.41" y="253.50" width="35.14" height="1.5" fill="#279f7d"/>
<rect x="1023.55" y="253.50" width="8.78" height="1.5" fill="#22908a"/>
<rect x="1032.34" y="253.50" width="26.35" height="1.5" fill="#279f7d"/>
<rect x="1058.69" y="253.50" width="8.78" height="1.5" fill="#22908a"/>
<rect x="1067.48" y="253.50" width="35.14" height="1.5" fill="#279f7d"/>
<rect x="1102.61" y="253.50" width="17.57" height="1.5" fill="#22908a"/>
<rect x="1120.18" y="253.50" width="8.78" height="1.5" fill="#279f7d"/>
<rect x="1128.97" y="253.50" width="8.78" height="1.5" fill="#22908a"/>
<rect x="1137.75" y="253.50" width="17.57" height="1.5" fill="#279f7d"/>
<rect x="1155.32" y="253.50" width="8.78" height="1.5" fill="#22908a"/>
<rect x="1164.11" y="253.50" width="8.78" height="1.5" fill="#279f7d"/>
<rect x="1172.89" y="253.50" width="17.57" height="1.5" fill="#22908a"/>
<rect x="1190.46" y="253.50" width="26.35" height="1.5" fill="#279f7d"/>
<rect x="1216.82" y="253.50" width="8.78" height="1.5" fill="#22908a"/>
<rect x="1225.60" y="253.50" width="8.78" height="1.5" fill="#279f7d"/>
<rect x="1234.39" y="253.50" width="26.35" height="1.5" fill="#22908a"/>
<rect x="1269.52" y="253.50" width="8.78" height="1.5" fill="#3a5487"/>
<rect x="1331.02" y="253.50" width="8.78" height="1.5" fill="#37304f"/>
<rect x="1410.08" y="253.50" width="8.78" height="1.5" fill="#37304f"/>
<rect x="1454.00" y="253.50" width="8.78" height="1.5" fill="#37304f"/>
<rect x="1497.93" y="253.50" width="8.78" height="1.5" fill="#37304f"/>
<rect x="1568.20" y="253.50" width="8.78" height="1.5" fill="#37304f"/>
<rect x="1629.70" y="253.50" width="8.78" height="1.5" fill="#3b3f6e"/>
<rect x="1691.19" y="253.50" width="8.78" height="1.5" fill="#3b3f6e"/>
<rect x="1743.90" y="253.50" width="8.78" height="1.5" fill="#37304f"/>
<rect x="1770.25" y="253.50" width="8.78" height="1.5" fill="#37304f"/>
<rect x="1796.61" y="253.50" width="4.39" height="1.5" fill="#37304f"/>
<rect x="536.00" y="252.00" width="13.18" height="1.5" fill="#279f7d"/>
<rect x="549.18" y="252.00" width="8.78" height="1.5" fill="#22908a"/>
<rect x="557.96" y="252.00" width="8.78" height="1.5" fill="#279f7d"/>
<rect x="566.75" y="252.00" width="43.92" height="1.5" fill="#22908a"/>
<rect x="610.67" y="252.00" width="8.78" height="1.5" fill="#279f7d"/>
<rect x="619.45" y="252.00" width="35.14" height="1.5" fill="#22908a"/>
<rect x="654.59" y="252.00" width="43.92" height="1.5" fill="#279f7d"/>
<rect x="698.52" y="252.00" width="17.57" height="1.5" fill="#22908a"/>
<rect x="716.09" y="252.00" width="17.57" height="1.5" fill="#279f7d"/>
<rect x="733.66" y="252.00" width="17.57" height="1.5" fill="#22908a"/>
<rect x="751.23" y="252.00" width="17.57" height="1.5" fill="#279f7d"/>
<rect x="768.80" y="252.00" width="8.78" height="1.5" fill="#3aa76e"/>
<rect x="777.58" y="252.00" width="35.14" height="1.5" fill="#279f7d"/>
<rect x="812.72" y="252.00" width="8.78" height="1.5" fill="#3aa76e"/>
<rect x="821.50" y="252.00" width="35.14" height="1.5" fill="#279f7d"/>
<rect x="856.64" y="252.00" width="17.57" height="1.5" fill="#3aa76e"/>
<rect x="874.21" y="252.00" width="70.28" height="1.5" fill="#279f7d"/>
<rect x="944.49" y="252.00" width="8.78" height="1.5" fill="#3aa76e"/>
<rect x="953.27" y="252.00" width="61.49" height="1.5" fill="#279f7d"/>
<rect x="1014.77" y="252.00" width="17.57" height="1.5" fill="#3aa76e"/>
<rect x="1032.34" y="252.00" width="17.57" height="1.5" fill="#279f7d"/>
<rect x="1049.91" y="252.00" width="8.78" height="1.5" fill="#3aa76e"/>
<rect x="1058.69" y="252.00" width="52.71" height="1.5" fill="#279f7d"/>
<rect x="1111.40" y="252.00" width="17.57" height="1.5" fill="#3aa76e"/>
<rect x="1128.97" y="252.00" width="35.14" height="1.5" fill="#279f7d"/>
<rect x="1164.11" y="252.00" width="8.78" height="1.5" fill="#3aa76e"/>
<rect x="1172.89" y="252.00" width="87.85" height="1.5" fill="#279f7d"/>
<rect x="1313.45" y="252.00" width="8.78" height="1.5" fill="#37304f"/>
<rect x="1348.59" y="252.00" width="8.78" height="1.5" fill="#37304f"/>
<rect x="1383.73" y="252.00" width="17.57" height="1.5" fill="#37304f"/>
<rect x="1410.08" y="252.00" width="8.78" height="1.5" fill="#37304f"/>
<rect x="1454.00" y="252.00" width="8.78" height="1.5" fill="#37304f"/>
<rect x="1497.93" y="252.00" width="8.78" height="1.5" fill="#37304f"/>
<rect x="1515.50" y="252.00" width="8.78" height="1.5" fill="#37304f"/>
<rect x="1752.68" y="252.00" width="8.78" height="1.5" fill="#37304f"/>
<rect x="536.00" y="250.50" width="4.39" height="1.5" fill="#279f7d"/>
<rect x="540.39" y="250.50" width="17.57" height="1.5" fill="#22908a"/>
<rect x="557.96" y="250.50" width="8.78" height="1.5" fill="#279f7d"/>
<rect x="566.75" y="250.50" width="35.14" height="1.5" fill="#22908a"/>
<rect x="601.89" y="250.50" width="8.78" height="1.5" fill="#279f7d"/>
<rect x="610.67" y="250.50" width="17.57" height="1.5" fill="#22908a"/>
<rect x="628.24" y="250.50" width="8.78" height="1.5" fill="#279f7d"/>
<rect x="637.02" y="250.50" width="17.57" height="1.5" fill="#22908a"/>
<rect x="654.59" y="250.50" width="17.57" height="1.5" fill="#279f7d"/>
<rect x="672.16" y="250.50" width="8.78" height="1.5" fill="#22908a"/>
<rect x="680.95" y="250.50" width="8.78" height="1.5" fill="#279f7d"/>
<rect x="689.73" y="250.50" width="35.14" height="1.5" fill="#22908a"/>
<rect x="724.87" y="250.50" width="8.78" height="1.5" fill="#279f7d"/>
<rect x="733.66" y="250.50" width="17.57" height="1.5" fill="#22908a"/>
<rect x="751.23" y="250.50" width="35.14" height="1.5" fill="#279f7d"/>
<rect x="786.36" y="250.50" width="8.78" height="1.5" fill="#3aa76e"/>
<rect x="795.15" y="250.50" width="17.57" height="1.5" fill="#279f7d"/>
<rect x="812.72" y="250.50" width="8.78" height="1.5" fill="#3aa76e"/>
<rect x="821.50" y="250.50" width="70.28" height="1.5" fill="#279f7d"/>
<rect x="891.78" y="250.50" width="17.57" height="1.5" fill="#3aa76e"/>
<rect x="909.35" y="250.50" width="17.57" height="1.5" fill="#279f7d"/>
<rect x="926.92" y="250.50" width="8.78" height="1.5" fill="#3aa76e"/>
<rect x="935.70" y="250.50" width="26.35" height="1.5" fill="#279f7d"/>
<rect x="962.06" y="250.50" width="8.78" height="1.5" fill="#3aa76e"/>
<rect x="970.84" y="250.50" width="26.35" height="1.5" fill="#279f7d"/>
<rect x="997.20" y="250.50" width="8.78" height="1.5" fill="#3aa76e"/>
<rect x="1005.98" y="250.50" width="26.35" height="1.5" fill="#279f7d"/>
<rect x="1032.34" y="250.50" width="17.57" height="1.5" fill="#3aa76e"/>
<rect x="1049.91" y="250.50" width="26.35" height="1.5" fill="#279f7d"/>
<rect x="1076.26" y="250.50" width="26.35" height="1.5" fill="#3aa76e"/>
<rect x="1102.61" y="250.50" width="35.14" height="1.5" fill="#279f7d"/>
<rect x="1137.75" y="250.50" width="8.78" height="1.5" fill="#3aa76e"/>
<rect x="1146.54" y="250.50" width="52.71" height="1.5" fill="#279f7d"/>
<rect x="1199.25" y="250.50" width="8.78" height="1.5" fill="#3aa76e"/>
<rect x="1208.03" y="250.50" width="35.14" height="1.5" fill="#279f7d"/>
<rect x="1243.17" y="250.50" width="17.57" height="1.5" fill="#3aa76e"/>
<rect x="1278.31" y="250.50" width="8.78" height="1.5" fill="#37304f"/>
<rect x="1295.88" y="250.50" width="8.78" height="1.5" fill="#37304f"/>
<rect x="1331.02" y="250.50" width="8.78" height="1.5" fill="#3b3f6e"/>
<rect x="1339.80" y="250.50" width="17.57" height="1.5" fill="#37304f"/>
<rect x="1462.79" y="250.50" width="8.78" height="1.5" fill="#37304f"/>
<rect x="1506.71" y="250.50" width="8.78" height="1.5" fill="#37304f"/>
<rect x="1515.50" y="250.50" width="8.78" height="1.5" fill="#3a5487"/>
<rect x="1576.99" y="250.50" width="17.57" height="1.5" fill="#37304f"/>
<rect x="1603.34" y="250.50" width="8.78" height="1.5" fill="#37304f"/>
<rect x="1682.41" y="250.50" width="8.78" height="1.5" fill="#3b3f6e"/>
<rect x="1752.68" y="250.50" width="8.78" height="1.5" fill="#37304f"/>
<rect x="536.00" y="249.00" width="4.39" height="1.5" fill="#22908a"/>
<rect x="540.39" y="249.00" width="17.57" height="1.5" fill="#279f7d"/>
<rect x="557.96" y="249.00" width="26.35" height="1.5" fill="#22908a"/>
<rect x="584.32" y="249.00" width="17.57" height="1.5" fill="#279f7d"/>
<rect x="601.89" y="249.00" width="70.28" height="1.5" fill="#22908a"/>
<rect x="672.16" y="249.00" width="8.78" height="1.5" fill="#279f7d"/>
<rect x="680.95" y="249.00" width="8.78" height="1.5" fill="#22908a"/>
<rect x="689.73" y="249.00" width="17.57" height="1.5" fill="#279f7d"/>
<rect x="707.30" y="249.00" width="8.78" height="1.5" fill="#22908a"/>
<rect x="716.09" y="249.00" width="8.78" height="1.5" fill="#279f7d"/>
<rect x="724.87" y="249.00" width="26.35" height="1.5" fill="#22908a"/>
<rect x="751.23" y="249.00" width="8.78" height="1.5" fill="#279f7d"/>
<rect x="760.01" y="249.00" width="8.78" height="1.5" fill="#3aa76e"/>
<rect x="768.80" y="249.00" width="26.35" height="1.5" fill="#279f7d"/>
<rect x="795.15" y="249.00" width="8.78" height="1.5" fill="#3aa76e"/>
<rect x="803.93" y="249.00" width="26.35" height="1.5" fill="#279f7d"/>
<rect x="830.29" y="249.00" width="8.78" height="1.5" fill="#3aa76e"/>
<rect x="839.07" y="249.00" width="17.57" height="1.5" fill="#279f7d"/>
<rect x="856.64" y="249.00" width="8.78" height="1.5" fill="#3aa76e"/>
<rect x="865.43" y="249.00" width="17.57" height="1.5" fill="#279f7d"/>
<rect x="883.00" y="249.00" width="8.78" height="1.5" fill="#3aa76e"/>
<rect x="891.78" y="249.00" width="17.57" height="1.5" fill="#279f7d"/>
<rect x="909.35" y="249.00" width="8.78" height="1.5" fill="#3aa76e"/>
<rect x="918.14" y="249.00" width="79.06" height="1.5" fill="#279f7d"/>
<rect x="997.20" y="249.00" width="8.78" height="1.5" fill="#3aa76e"/>
<rect x="1005.98" y="249.00" width="8.78" height="1.5" fill="#279f7d"/>
<rect x="1014.77" y="249.00" width="8.78" height="1.5" fill="#3aa76e"/>
<rect x="1023.55" y="249.00" width="43.92" height="1.5" fill="#279f7d"/>
<rect x="1067.48" y="249.00" width="26.35" height="1.5" fill="#3aa76e"/>
<rect x="1093.83" y="249.00" width="26.35" height="1.5" fill="#279f7d"/>
<rect x="1120.18" y="249.00" width="17.57" height="1.5" fill="#3aa76e"/>
<rect x="1137.75" y="249.00" width="8.78" height="1.5" fill="#279f7d"/>
<rect x="1146.54" y="249.00" width="8.78" height="1.5" fill="#3aa76e"/>
<rect x="1155.32" y="249.00" width="105.42" height="1.5" fill="#279f7d"/>
<rect x="1260.74" y="249.00" width="26.35" height="1.5" fill="#37304f"/>
<rect x="1295.88" y="249.00" width="8.78" height="1.5" fill="#3b3f6e"/>
<rect x="1313.45" y="249.00" width="8.78" height="1.5" fill="#37304f"/>
<rect x="1331.02" y="249.00" width="8.78" height="1.5" fill="#37304f"/>
<rect x="1357.37" y="249.00" width="17.57" height="1.5" fill="#37304f"/>
<rect x="1401.30" y="249.00" width="8.78" height="1.5" fill="#3b3f6e"/>
<rect x="1418.86" y="249.00" width="8.78" height="1.5" fill="#37304f"/>
<rect x="1427.65" y="249.00" width="8.78" height="1.5" fill="#3a5487"/>
<rect x="1462.79" y="249.00" width="8.78" height="1.5" fill="#3b3f6e"/>
<rect x="1524.28" y="249.00" width="8.78" height="1.5" fill="#37304f"/>
<rect x="1550.64" y="249.00" width="8.78" height="1.5" fill="#37304f"/>
<rect x="1603.34" y="249.00" width="17.57" height="1.5" fill="#37304f"/>
<rect x="1647.27" y="249.00" width="8.78" height="1.5" fill="#3b3f6e"/>
<rect x="1664.84" y="249.00" width="8.78" height="1.5" fill="#3b3f6e"/>
<rect x="1708.76" y="249.00" width="8.78" height="1.5" fill="#37304f"/>
<rect x="536.00" y="247.50" width="13.18" height="1.5" fill="#279f7d"/>
<rect x="549.18" y="247.50" width="17.57" height="1.5" fill="#22908a"/>
<rect x="566.75" y="247.50" width="8.78" height="1.5" fill="#279f7d"/>
<rect x="575.53" y="247.50" width="140.56" height="1.5" fill="#22908a"/>
<rect x="716.09" y="247.50" width="8.78" height="1.5" fill="#279f7d"/>
<rect x="724.87" y="247.50" width="26.35" height="1.5" fill="#22908a"/>
<rect x="751.23" y="247.50" width="8.78" height="1.5" fill="#279f7d"/>
<rect x="760.01" y="247.50" width="8.78" height="1.5" fill="#3aa76e"/>
<rect x="768.80" y="247.50" width="8.78" height="1.5" fill="#279f7d"/>
<rect x="777.58" y="247.50" width="8.78" height="1.5" fill="#3aa76e"/>
<rect x="786.36" y="247.50" width="105.42" height="1.5" fill="#279f7d"/>
<rect x="891.78" y="247.50" width="8.78" height="1.5" fill="#3aa76e"/>
<rect x="900.57" y="247.50" width="70.28" height="1.5" fill="#279f7d"/>
<rect x="970.84" y="247.50" width="8.78" height="1.5" fill="#3aa76e"/>
<rect x="979.63" y="247.50" width="43.92" height="1.5" fill="#279f7d"/>
<rect x="1023.55" y="247.50" width="8.78" height="1.5" fill="#3aa76e"/>
<rect x="1032.34" y="247.50" width="26.35" height="1.5" fill="#279f7d"/>
<rect x="1058.69" y="247.50" width="8.78" height="1.5" fill="#3aa76e"/>
<rect x="1067.48" y="247.50" width="140.56" height="1.5" fill="#279f7d"/>
<rect x="1208.03" y="247.50" width="8.78" height="1.5" fill="#3aa76e"/>
<rect x="1216.82" y="247.50" width="26.35" height="1.5" fill="#279f7d"/>
<rect x="1243.17" y="247.50" width="8.78" height="1.5" fill="#3aa76e"/>
<rect x="1251.95" y="247.50" width="8.78" height="1.5" fill="#279f7d"/>
<rect x="1260.74" y="247.50" width="8.78" height="1.5" fill="#37304f"/>
<rect x="1313.45" y="247.50" width="8.78" height="1.5" fill="#37304f"/>
<rect x="1339.80" y="247.50" width="8.78" height="1.5" fill="#37304f"/>
<rect x="1392.51" y="247.50" width="8.78" height="1.5" fill="#37304f"/>
<rect x="1436.43" y="247.50" width="17.57" height="1.5" fill="#37304f"/>
<rect x="1489.14" y="247.50" width="8.78" height="1.5" fill="#37304f"/>
<rect x="1506.71" y="247.50" width="8.78" height="1.5" fill="#37304f"/>
<rect x="1559.42" y="247.50" width="8.78" height="1.5" fill="#37304f"/>
<rect x="1656.05" y="247.50" width="8.78" height="1.5" fill="#3a5487"/>
<rect x="1682.41" y="247.50" width="8.78" height="1.5" fill="#3b3f6e"/>
<rect x="1726.33" y="247.50" width="8.78" height="1.5" fill="#37304f"/>
<rect x="1796.61" y="247.50" width="4.39" height="1.5" fill="#3b3f6e"/>
<rect x="536.00" y="246.00" width="4.39" height="1.5" fill="#2b7585"/>
<rect x="540.39" y="246.00" width="35.14" height="1.5" fill="#22908a"/>
<rect x="575.53" y="246.00" width="8.78" height="1.5" fill="#2b7585"/>
<rect x="584.32" y="246.00" width="8.78" height="1.5" fill="#22908a"/>
<rect x="593.10" y="246.00" width="8.78" height="1.5" fill="#2b7585"/>
<rect x="601.89" y="246.00" width="26.35" height="1.5" fill="#22908a"/>
<rect x="628.24" y="246.00" width="43.92" height="1.5" fill="#2b7585"/>
<rect x="672.16" y="246.00" width="17.57" height="1.5" fill="#22908a"/>
<rect x="689.73" y="246.00" width="17.57" height="1.5" fill="#2b7585"/>
<rect x="707.30" y="246.00" width="8.78" height="1.5" fill="#22908a"/>
<rect x="716.09" y="246.00" width="26.35" height="1.5" fill="#2b7585"/>
<rect x="742.44" y="246.00" width="8.78" height="1.5" fill="#22908a"/>
<rect x="751.23" y="246.00" width="17.57" height="1.5" fill="#279f7d"/>
<rect x="768.80" y="246.00" width="17.57" height="1.5" fill="#22908a"/>
<rect x="786.36" y="246.00" width="17.57" height="1.5" fill="#279f7d"/>
<rect x="803.93" y="246.00" width="26.35" height="1.5" fill="#22908a"/>
<rect x="830.29" y="246.00" width="8.78" height="1.5" fill="#279f7d"/>
<rect x="839.07" y="246.00" width="17.57" height="1.5" fill="#22908a"/>
<rect x="856.64" y="246.00" width="8.78" height="1.5" fill="#279f7d"/>
<rect x="865.43" y="246.00" width="17.57" height="1.5" fill="#22908a"/>
<rect x="883.00" y="246.00" width="8.78" height="1.5" fill="#279f7d"/>
<rect x="891.78" y="246.00" width="8.78" height="1.5" fill="#22908a"/>
<rect x="900.57" y="246.00" width="8.78" height="1.5" fill="#279f7d"/>
<rect x="909.35" y="246.00" width="17.57" height="1.5" fill="#22908a"/>
<rect x="926.92" y="246.00" width="17.57" height="1.5" fill="#279f7d"/>
<rect x="944.49" y="246.00" width="8.78" height="1.5" fill="#22908a"/>
<rect x="953.27" y="246.00" width="17.57" height="1.5" fill="#279f7d"/>
<rect x="970.84" y="246.00" width="8.78" height="1.5" fill="#22908a"/>
<rect x="979.63" y="246.00" width="17.57" height="1.5" fill="#279f7d"/>
<rect x="997.20" y="246.00" width="96.63" height="1.5" fill="#22908a"/>
<rect x="1093.83" y="246.00" width="8.78" height="1.5" fill="#279f7d"/>
<rect x="1102.61" y="246.00" width="8.78" height="1.5" fill="#22908a"/>
<rect x="1111.40" y="246.00" width="17.57" height="1.5" fill="#279f7d"/>
<rect x="1128.97" y="246.00" width="26.35" height="1.5" fill="#22908a"/>
<rect x="1155.32" y="246.00" width="8.78" height="1.5" fill="#279f7d"/>
<rect x="1164.11" y="246.00" width="17.57" height="1.5" fill="#22908a"/>
<rect x="1181.68" y="246.00" width="8.78" height="1.5" fill="#279f7d"/>
<rect x="1190.46" y="246.00" width="8.78" height="1.5" fill="#22908a"/>
<rect x="1199.25" y="246.00" width="26.35" height="1.5" fill="#279f7d"/>
<rect x="1225.60" y="246.00" width="17.57" height="1.5" fill="#22908a"/>
<rect x="1243.17" y="246.00" width="17.57" height="1.5" fill="#279f7d"/>
<rect x="1295.88" y="246.00" width="8.78" height="1.5" fill="#37304f"/>
<rect x="1427.65" y="246.00" width="8.78" height="1.5" fill="#37304f"/>
<rect x="1752.68" y="246.00" width="8.78" height="1.5" fill="#37304f"/>
<rect x="1796.61" y="246.00" width="4.39" height="1.5" fill="#37304f"/>
<rect x="536.00" y="244.50" width="4.39" height="1.5" fill="#22908a"/>
<rect x="540.39" y="244.50" width="26.35" height="1.5" fill="#2b7585"/>
<rect x="566.75" y="244.50" width="8.78" height="1.5" fill="#22908a"/>
<rect x="575.53" y="244.50" width="17.57" height="1.5" fill="#2b7585"/>
<rect x="593.10" y="244.50" width="8.78" height="1.5" fill="#22908a"/>
<rect x="601.89" y="244.50" width="17.57" height="1.5" fill="#3a5487"/>
<rect x="619.45" y="244.50" width="8.78" height="1.5" fill="#2b7585"/>
<rect x="628.24" y="244.50" width="8.78" height="1.5" fill="#22908a"/>
<rect x="637.02" y="244.50" width="17.57" height="1.5" fill="#2b7585"/>
<rect x="654.59" y="244.50" width="8.78" height="1.5" fill="#3b3f6e"/>
<rect x="663.38" y="244.50" width="17.57" height="1.5" fill="#2b7585"/>
<rect x="680.95" y="244.50" width="8.78" height="1.5" fill="#3a5487"/>
<rect x="689.73" y="244.50" width="26.35" height="1.5" fill="#2b7585"/>
<rect x="716.09" y="244.50" width="8.78" height="1.5" fill="#22908a"/>
<rect x="724.87" y="244.50" width="8.78" height="1.5" fill="#2b7585"/>
<rect x="733.66" y="244.50" width="8.78" height="1.5" fill="#3a5487"/>
<rect x="742.44" y="244.50" width="8.78" height="1.5" fill="#2b7585"/>
<rect x="751.23" y="244.50" width="17.57" height="1.5" fill="#22908a"/>
<rect x="768.80" y="244.50" width="26.35" height="1.5" fill="#279f7d"/>
<rect x="795.15" y="244.50" width="43.92" height="1.5" fill="#22908a"/>
<rect x="839.07" y="244.50" width="17.57" height="1.5" fill="#279f7d"/>
<rect x="856.64" y="244.50" width="26.35" height="1.5" fill="#22908a"/>
<rect x="883.00" y="244.50" width="17.57" height="1.5" fill="#279f7d"/>
<rect x="900.57" y="244.50" width="17.57" height="1.5" fill="#22908a"/>
<rect x="918.14" y="244.50" width="8.78" height="1.5" fill="#279f7d"/>
<rect x="926.92" y="244.50" width="8.78" height="1.5" fill="#22908a"/>
<rect x="935.70" y="244.50" width="8.78" height="1.5" fill="#279f7d"/>
<rect x="944.49" y="244.50" width="17.57" height="1.5" fill="#22908a"/>
<rect x="962.06" y="244.50" width="35.14" height="1.5" fill="#279f7d"/>
<rect x="997.20" y="244.50" width="17.57" height="1.5" fill="#22908a"/>
<rect x="1014.77" y="244.50" width="52.71" height="1.5" fill="#279f7d"/>
<rect x="1067.48" y="244.50" width="8.78" height="1.5" fill="#22908a"/>
<rect x="1076.26" y="244.50" width="17.57" height="1.5" fill="#279f7d"/>
<rect x="1093.83" y="244.50" width="26.35" height="1.5" fill="#22908a"/>
<rect x="1120.18" y="244.50" width="35.14" height="1.5" fill="#279f7d"/>
<rect x="1155.32" y="244.50" width="8.78" height="1.5" fill="#22908a"/>
<rect x="1164.11" y="244.50" width="8.78" height="1.5" fill="#279f7d"/>
<rect x="1172.89" y="244.50" width="8.78" height="1.5" fill="#22908a"/>
<rect x="1181.68" y="244.50" width="17.57" height="1.5" fill="#279f7d"/>
<rect x="1199.25" y="244.50" width="8.78" height="1.5" fill="#22908a"/>
<rect x="1208.03" y="244.50" width="8.78" height="1.5" fill="#279f7d"/>
<rect x="1216.82" y="244.50" width="8.78" height="1.5" fill="#22908a"/>
<rect x="1225.60" y="244.50" width="8.78" height="1.5" fill="#279f7d"/>
<rect x="1234.39" y="244.50" width="26.35" height="1.5" fill="#22908a"/>
<rect x="1295.88" y="244.50" width="17.57" height="1.5" fill="#37304f"/>
<rect x="1383.73" y="244.50" width="8.78" height="1.5" fill="#37304f"/>
<rect x="1664.84" y="244.50" width="8.78" height="1.5" fill="#3b3f6e"/>
<rect x="1761.47" y="244.50" width="8.78" height="1.5" fill="#37304f"/>
<rect x="536.00" y="243.00" width="13.18" height="1.5" fill="#22908a"/>
<rect x="549.18" y="243.00" width="17.57" height="1.5" fill="#2b7585"/>
<rect x="566.75" y="243.00" width="8.78" height="1.5" fill="#3a5487"/>
<rect x="575.53" y="243.00" width="8.78" height="1.5" fill="#2b7585"/>
<rect x="584.32" y="243.00" width="8.78" height="1.5" fill="#3b3f6e"/>
<rect x="593.10" y="243.00" width="8.78" height="1.5" fill="#2b7585"/>
<rect x="601.89" y="243.00" width="8.78" height="1.5" fill="#3a5487"/>
<rect x="610.67" y="243.00" width="26.35" height="1.5" fill="#2b7585"/>
<rect x="637.02" y="243.00" width="8.78" height="1.5" fill="#22908a"/>
<rect x="645.81" y="243.00" width="8.78" height="1.5" fill="#2b7585"/>
<rect x="654.59" y="243.00" width="17.57" height="1.5" fill="#3b3f6e"/>
<rect x="672.16" y="243.00" width="8.78" height="1.5" fill="#2b7585"/>
<rect x="680.95" y="243.00" width="8.78" height="1.5" fill="#3b3f6e"/>
<rect x="689.73" y="243.00" width="8.78" height="1.5" fill="#2b7585"/>
<rect x="698.52" y="243.00" width="8.78" height="1.5" fill="#22908a"/>
<rect x="707.30" y="243.00" width="8.78" height="1.5" fill="#2b7585"/>
<rect x="716.09" y="243.00" width="8.78" height="1.5" fill="#3b3f6e"/>
<rect x="724.87" y="243.00" width="8.78" height="1.5" fill="#2b7585"/>
<rect x="733.66" y="243.00" width="8.78" height="1.5" fill="#3a5487"/>
<rect x="742.44" y="243.00" width="8.78" height="1.5" fill="#3b3f6e"/>
<rect x="751.23" y="243.00" width="8.78" height="1.5" fill="#279f7d"/>
<rect x="760.01" y="243.00" width="43.92" height="1.5" fill="#22908a"/>
<rect x="803.93" y="243.00" width="8.78" height="1.5" fill="#279f7d"/>
<rect x="812.72" y="243.00" width="35.14" height="1.5" fill="#22908a"/>
<rect x="847.86" y="243.00" width="8.78" height="1.5" fill="#279f7d"/>
<rect x="856.64" y="243.00" width="17.57" height="1.5" fill="#22908a"/>
<rect x="874.21" y="243.00" width="17.57" height="1.5" fill="#279f7d"/>
<rect x="891.78" y="243.00" width="17.57" height="1.5" fill="#22908a"/>
<rect x="909.35" y="243.00" width="8.78" height="1.5" fill="#2b7585"/>
<rect x="918.14" y="243.00" width="8.78" height="1.5" fill="#279f7d"/>
<rect x="926.92" y="243.00" width="8.78" height="1.5" fill="#22908a"/>
<rect x="935.70" y="243.00" width="8.78" height="1.5" fill="#279f7d"/>
<rect x="944.49" y="243.00" width="8.78" height="1.5" fill="#2b7585"/>
<rect x="953.27" y="243.00" width="8.78" height="1.5" fill="#279f7d"/>
<rect x="962.06" y="243.00" width="17.57" height="1.5" fill="#2b7585"/>
<rect x="979.63" y="243.00" width="8.78" height="1.5" fill="#22908a"/>
<rect x="988.41" y="243.00" width="8.78" height="1.5" fill="#2b7585"/>
<rect x="997.20" y="243.00" width="8.78" height="1.5" fill="#279f7d"/>
<rect x="1005.98" y="243.00" width="43.92" height="1.5" fill="#22908a"/>
<rect x="1049.91" y="243.00" width="8.78" height="1.5" fill="#279f7d"/>
<rect x="1058.69" y="243.00" width="17.57" height="1.5" fill="#22908a"/>
<rect x="1076.26" y="243.00" width="8.78" height="1.5" fill="#2b7585"/>
<rect x="1085.05" y="243.00" width="8.78" height="1.5" fill="#279f7d"/>
<rect x="1093.83" y="243.00" width="8.78" height="1.5" fill="#2b7585"/>
<rect x="1102.61" y="243.00" width="8.78" height="1.5" fill="#22908a"/>
<rect x="1111.40" y="243.00" width="8.78" height="1.5" fill="#2b7585"/>
<rect x="1120.18" y="243.00" width="8.78" height="1.5" fill="#279f7d"/>
<rect x="1128.97" y="243.00" width="8.78" height="1.5" fill="#22908a"/>
<rect x="1137.75" y="243.00" width="8.78" height="1.5" fill="#279f7d"/>
<rect x="1146.54" y="243.00" width="17.57" height="1.5" fill="#22908a"/>
<rect x="1164.11" y="243.00" width="8.78" height="1.5" fill="#2b7585"/>
<rect x="1172.89" y="243.00" width="8.78" height="1.5" fill="#22908a"/>
<rect x="1181.68" y="243.00" width="35.14" height="1.5" fill="#279f7d"/>
<rect x="1216.82" y="243.00" width="17.57" height="1.5" fill="#22908a"/>
<rect x="1234.39" y="243.00" width="17.57" height="1.5" fill="#2b7585"/>
<rect x="1251.95" y="243.00" width="8.78" height="1.5" fill="#22908a"/>
<rect x="1515.50" y="243.00" width="17.57" height="1.5" fill="#37304f"/>
<rect x="1576.99" y="243.00" width="8.78" height="1.5" fill="#37304f"/>
<rect x="1638.48" y="243.00" width="8.78" height="1.5" fill="#37304f"/>
<rect x="1717.55" y="243.00" width="8.78" height="1.5" fill="#37304f"/>
<rect x="536.00" y="241.50" width="13.18" height="1.5" fill="#3a5487"/>
<rect x="549.18" y="241.50" width="17.57" height="1.5" fill="#2b7585"/>
<rect x="566.75" y="241.50" width="26.35" height="1.5" fill="#3b3f6e"/>
<rect x="593.10" y="241.50" width="8.78" height="1.5" fill="#3a5487"/>
<rect x="601.89" y="241.50" width="8.78" height="1.5" fill="#3b3f6e"/>
<rect x="610.67" y="241.50" width="8.78" height="1.5" fill="#3a5487"/>
<rect x="619.45" y="241.50" width="17.57" height="1.5" fill="#3b3f6e"/>
<rect x="637.02" y="241.50" width="8.78" height="1.5" fill="#2b7585"/>
<rect x="645.81" y="241.50" width="26.35" height="1.5" fill="#3a5487"/>
<rect x="672.16" y="241.50" width="8.78" height="1.5" fill="#3b3f6e"/>
<rect x="680.95" y="241.50" width="17.57" height="1.5" fill="#2b7585"/>
<rect x="698.52" y="241.50" width="8.78" height="1.5" fill="#3a5487"/>
<rect x="707.30" y="241.50" width="26.35" height="1.5" fill="#3b3f6e"/>
<rect x="733.66" y="241.50" width="17.57" height="1.5" fill="#3a5487"/>
<rect x="751.23" y="241.50" width="8.78" height="1.5" fill="#22908a"/>
<rect x="760.01" y="241.50" width="26.35" height="1.5" fill="#2b7585"/>
<rect x="786.36" y="241.50" width="8.78" height="1.5" fill="#22908a"/>
<rect x="795.15" y="241.50" width="8.78" height="1.5" fill="#2b7585"/>
<rect x="803.93" y="241.50" width="17.57" height="1.5" fill="#22908a"/>
<rect x="821.50" y="241.50" width="8.78" height="1.5" fill="#2b7585"/>
<rect x="830.29" y="241.50" width="8.78" height="1.5" fill="#22908a"/>
<rect x="839.07" y="241.50" width="8.78" height="1.5" fill="#2b7585"/>
<rect x="847.86" y="241.50" width="8.78" height="1.5" fill="#22908a"/>
<rect x="856.64" y="241.50" width="8.78" height="1.5" fill="#279f7d"/>
<rect x="865.43" y="241.50" width="52.71" height="1.5" fill="#2b7585"/>
<rect x="918.14" y="241.50" width="17.57" height="1.5" fill="#22908a"/>
<rect x="935.70" y="241.50" width="8.78" height="1.5" fill="#279f7d"/>
<rect x="944.49" y="241.50" width="35.14" height="1.5" fill="#22908a"/>
<rect x="979.63" y="241.50" width="8.78" height="1.5" fill="#279f7d"/>
<rect x="988.41" y="241.50" width="8.78" height="1.5" fill="#2b7585"/>
<rect x="997.20" y="241.50" width="8.78" height="1.5" fill="#22908a"/>
<rect x="1005.98" y="241.50" width="26.35" height="1.5" fill="#2b7585"/>
<rect x="1032.34" y="241.50" width="8.78" height="1.5" fill="#279f7d"/>
<rect x="1041.12" y="241.50" width="35.14" height="1.5" fill="#2b7585"/>
<rect x="1076.26" y="241.50" width="8.78" height="1.5" fill="#22908a"/>
<rect x="1085.05" y="241.50" width="17.57" height="1.5" fill="#2b7585"/>
<rect x="1102.61" y="241.50" width="8.78" height="1.5" fill="#22908a"/>
<rect x="1111.40" y="241.50" width="35.14" height="1.5" fill="#2b7585"/>
<rect x="1146.54" y="241.50" width="17.57" height="1.5" fill="#22908a"/>
<rect x="1164.11" y="241.50" width="8.78" height="1.5" fill="#2b7585"/>
<rect x="1172.89" y="241.50" width="8.78" height="1.5" fill="#22908a"/>
<rect x="1181.68" y="241.50" width="8.78" height="1.5" fill="#2b7585"/>
<rect x="1190.46" y="241.50" width="17.57" height="1.5" fill="#279f7d"/>
<rect x="1208.03" y="241.50" width="43.92" height="1.5" fill="#2b7585"/>
<rect x="1251.95" y="241.50" width="8.78" height="1.5" fill="#279f7d"/>
<rect x="1304.66" y="241.50" width="8.78" height="1.5" fill="#37304f"/>
<rect x="1331.02" y="241.50" width="8.78" height="1.5" fill="#3a5487"/>
<rect x="1357.37" y="241.50" width="8.78" height="1.5" fill="#3b3f6e"/>
<rect x="1489.14" y="241.50" width="8.78" height="1.5" fill="#3a5487"/>
<rect x="1506.71" y="241.50" width="8.78" height="1.5" fill="#3a5487"/>
<rect x="1585.77" y="241.50" width="8.78" height="1.5" fill="#37304f"/>
<rect x="1673.62" y="241.50" width="8.78" height="1.5" fill="#37304f"/>
<rect x="1796.61" y="241.50" width="4.39" height="1.5" fill="#3b3f6e"/>
<rect x="536.00" y="240.00" width="4.39" height="1.5" fill="#3a5487"/>
<rect x="540.39" y="240.00" width="8.78" height="1.5" fill="#2b7585"/>
<rect x="549.18" y="240.00" width="17.57" height="1.5" fill="#3b3f6e"/>
<rect x="566.75" y="240.00" width="8.78" height="1.5" fill="#3a5487"/>
<rect x="575.53" y="240.00" width="8.78" height="1.5" fill="#2b7585"/>
<rect x="584.32" y="240.00" width="17.57" height="1.5" fill="#3b3f6e"/>
<rect x="601.89" y="240.00" width="26.35" height="1.5" fill="#3a5487"/>
<rect x="628.24" y="240.00" width="26.35" height="1.5" fill="#3b3f6e"/>
<rect x="654.59" y="240.00" width="8.78" height="1.5" fill="#37304f"/>
<rect x="663.38" y="240.00" width="17.57" height="1.5" fill="#3a5487"/>
<rect x="689.73" y="240.00" width="8.78" height="1.5" fill="#2b7585"/>
<rect x="698.52" y="240.00" width="8.78" height="1.5" fill="#3b3f6e"/>
<rect x="707.30" y="240.00" width="8.78" height="1.5" fill="#3a5487"/>
<rect x="716.09" y="240.00" width="8.78" height="1.5" fill="#2b7585"/>
<rect x="724.87" y="240.00" width="8.78" height="1.5" fill="#3b3f6e"/>
<rect x="733.66" y="240.00" width="8.78" height="1.5" fill="#3a5487"/>
<rect x="742.44" y="240.00" width="52.71" height="1.5" fill="#2b7585"/>
<rect x="795.15" y="240.00" width="8.78" height="1.5" fill="#22908a"/>
<rect x="803.93" y="240.00" width="26.35" height="1.5" fill="#2b7585"/>
<rect x="830.29" y="240.00" width="8.78" height="1.5" fill="#22908a"/>
<rect x="839.07" y="240.00" width="52.71" height="1.5" fill="#2b7585"/>
<rect x="891.78" y="240.00" width="8.78" height="1.5" fill="#22908a"/>
<rect x="900.57" y="240.00" width="35.14" height="1.5" fill="#2b7585"/>
<rect x="935.70" y="240.00" width="8.78" height="1.5" fill="#22908a"/>
<rect x="944.49" y="240.00" width="43.92" height="1.5" fill="#2b7585"/>
<rect x="988.41" y="240.00" width="8.78" height="1.5" fill="#22908a"/>
<rect x="997.20" y="240.00" width="17.57" height="1.5" fill="#2b7585"/>
<rect x="1014.77" y="240.00" width="8.78" height="1.5" fill="#22908a"/>
<rect x="1023.55" y="240.00" width="8.78" height="1.5" fill="#2b7585"/>
<rect x="1032.34" y="240.00" width="8.78" height="1.5" fill="#22908a"/>
<rect x="1041.12" y="240.00" width="52.71" height="1.5" fill="#2b7585"/>
<rect x="1093.83" y="240.00" width="8.78" height="1.5" fill="#22908a"/>
<rect x="1102.61" y="240.00" width="8.78" height="1.5" fill="#2b7585"/>
<rect x="1111.40" y="240.00" width="8.78" height="1.5" fill="#22908a"/>
<rect x="1120.18" y="240.00" width="17.57" height="1.5" fill="#2b7585"/>
<rect x="1137.75" y="240.00" width="8.78" height="1.5" fill="#22908a"/>
<rect x="1146.54" y="240.00" width="17.57" height="1.5" fill="#2b7585"/>
<rect x="1164.11" y="240.00" width="8.78" height="1.5" fill="#22908a"/>
<rect x="1172.89" y="240.00" width="61.49" height="1.5" fill="#2b7585"/>
<rect x="1234.39" y="240.00" width="17.57" height="1.5" fill="#22908a"/>
<rect x="1251.95" y="240.00" width="8.78" height="1.5" fill="#2b7585"/>
<rect x="1260.74" y="240.00" width="8.78" height="1.5" fill="#37304f"/>
<rect x="1304.66" y="240.00" width="8.78" height="1.5" fill="#3a5487"/>
<rect x="1445.22" y="240.00" width="8.78" height="1.5" fill="#37304f"/>
<rect x="1576.99" y="240.00" width="8.78" height="1.5" fill="#37304f"/>
<rect x="1682.41" y="240.00" width="8.78" height="1.5" fill="#37304f"/>
<rect x="1726.33" y="240.00" width="8.78" height="1.5" fill="#37304f"/>
<rect x="1752.68" y="240.00" width="8.78" height="1.5" fill="#37304f"/>
<rect x="536.00" y="238.50" width="4.39" height="1.5" fill="#3b3f6e"/>
<rect x="540.39" y="238.50" width="8.78" height="1.5" fill="#2b7585"/>
<rect x="557.96" y="238.50" width="17.57" height="1.5" fill="#3a5487"/>
<rect x="575.53" y="238.50" width="8.78" height="1.5" fill="#2b7585"/>
<rect x="593.10" y="238.50" width="8.78" height="1.5" fill="#3b3f6e"/>
<rect x="610.67" y="238.50" width="8.78" height="1.5" fill="#3b3f6e"/>
<rect x="628.24" y="238.50" width="8.78" height="1.5" fill="#2b7585"/>
<rect x="637.02" y="238.50" width="8.78" height="1.5" fill="#3b3f6e"/>
<rect x="654.59" y="238.50" width="8.78" height="1.5" fill="#3b3f6e"/>
<rect x="672.16" y="238.50" width="8.78" height="1.5" fill="#3b3f6e"/>
<rect x="689.73" y="238.50" width="8.78" height="1.5" fill="#3a5487"/>
<rect x="698.52" y="238.50" width="17.57" height="1.5" fill="#2b7585"/>
<rect x="716.09" y="238.50" width="8.78" height="1.5" fill="#3b3f6e"/>
<rect x="724.87" y="238.50" width="26.35" height="1.5" fill="#37304f"/>
<rect x="751.23" y="238.50" width="17.57" height="1.5" fill="#22908a"/>
<rect x="768.80" y="238.50" width="8.78" height="1.5" fill="#3a5487"/>
<rect x="777.58" y="238.50" width="8.78" height="1.5" fill="#22908a"/>
<rect x="786.36" y="238.50" width="17.57" height="1.5" fill="#2b7585"/>
<rect x="803.93" y="238.50" width="8.78" height="1.5" fill="#22908a"/>
<rect x="812.72" y="238.50" width="35.14" height="1.5" fill="#2b7585"/>
<rect x="847.86" y="238.50" width="26.35" height="1.5" fill="#22908a"/>
<rect x="874.21" y="238.50" width="17.57" height="1.5" fill="#2b7585"/>
<rect x="891.78" y="238.50" width="8.78" height="1.5" fill="#3a5487"/>
<rect x="900.57" y="238.50" width="8.78" height="1.5" fill="#2b7585"/>
<rect x="909.35" y="238.50" width="8.78" height="1.5" fill="#3b3f6e"/>
<rect x="918.14" y="238.50" width="17.57" height="1.5" fill="#2b7585"/>
<rect x="935.70" y="238.50" width="8.78" height="1.5" fill="#22908a"/>
<rect x="944.49" y="238.50" width="8.78" height="1.5" fill="#3a5487"/>
<rect x="953.27" y="238.50" width="17.57" height="1.5" fill="#2b7585"/>
<rect x="970.84" y="238.50" width="8.78" height="1.5" fill="#3a5487"/>
<rect x="979.63" y="238.50" width="8.78" height="1.5" fill="#2b7585"/>
<rect x="988.41" y="238.50" width="8.78" height="1.5" fill="#3b3f6e"/>
<rect x="997.20" y="238.50" width="17.57" height="1.5" fill="#22908a"/>
<rect x="1014.77" y="238.50" width="17.57" height="1.5" fill="#2b7585"/>
<rect x="1032.34" y="238.50" width="8.78" height="1.5" fill="#22908a"/>
<rect x="1041.12" y="238.50" width="17.57" height="1.5" fill="#2b7585"/>
<rect x="1058.69" y="238.50" width="8.78" height="1.5" fill="#3b3f6e"/>
<rect x="1067.48" y="238.50" width="8.78" height="1.5" fill="#22908a"/>
<rect x="1076.26" y="238.50" width="8.78" height="1.5" fill="#2b7585"/>
<rect x="1085.05" y="238.50" width="8.78" height="1.5" fill="#22908a"/>
<rect x="1093.83" y="238.50" width="8.78" height="1.5" fill="#3a5487"/>
<rect x="1102.61" y="238.50" width="8.78" height="1.5" fill="#2b7585"/>
<rect x="1111.40" y="238.50" width="8.78" height="1.5" fill="#3b3f6e"/>
<rect x="1120.18" y="238.50" width="17.57" height="1.5" fill="#22908a"/>
<rect x="1137.75" y="238.50" width="8.78" height="1.5" fill="#2b7585"/>
<rect x="1146.54" y="238.50" width="17.57" height="1.5" fill="#22908a"/>
<rect x="1164.11" y="238.50" width="8.78" height="1.5" fill="#3b3f6e"/>
<rect x="1172.89" y="238.50" width="35.14" height="1.5" fill="#2b7585"/>
<rect x="1208.03" y="238.50" width="8.78" height="1.5" fill="#22908a"/>
<rect x="1216.82" y="238.50" width="8.78" height="1.5" fill="#3b3f6e"/>
<rect x="1225.60" y="238.50" width="8.78" height="1.5" fill="#2b7585"/>
<rect x="1234.39" y="238.50" width="17.57" height="1.5" fill="#3b3f6e"/>
<rect x="1251.95" y="238.50" width="8.78" height="1.5" fill="#22908a"/>
<rect x="1357.37" y="238.50" width="8.78" height="1.5" fill="#3b3f6e"/>
<rect x="1445.22" y="238.50" width="8.78" height="1.5" fill="#37304f"/>
<rect x="1533.07" y="238.50" width="8.78" height="1.5" fill="#3a5487"/>
<rect x="1682.41" y="238.50" width="8.78" height="1.5" fill="#37304f"/>
<rect x="549.18" y="237.00" width="17.57" height="1.5" fill="#3b3f6e"/>
<rect x="584.32" y="237.00" width="8.78" height="1.5" fill="#3b3f6e"/>
<rect x="593.10" y="237.00" width="8.78" height="1.5" fill="#3a5487"/>
<rect x="601.89" y="237.00" width="8.78" height="1.5" fill="#3b3f6e"/>
<rect x="610.67" y="237.00" width="8.78" height="1.5" fill="#37304f"/>
<rect x="619.45" y="237.00" width="8.78" height="1.5" fill="#3b3f6e"/>
<rect x="637.02" y="237.00" width="8.78" height="1.5" fill="#3b3f6e"/>
<rect x="645.81" y="237.00" width="17.57" height="1.5" fill="#37304f"/>
<rect x="672.16" y="237.00" width="8.78" height="1.5" fill="#37304f"/>
<rect x="698.52" y="237.00" width="8.78" height="1.5" fill="#37304f"/>
<rect x="707.30" y="237.00" width="8.78" height="1.5" fill="#3a5487"/>
<rect x="724.87" y="237.00" width="8.78" height="1.5" fill="#37304f"/>
<rect x="733.66" y="237.00" width="8.78" height="1.5" fill="#3b3f6e"/>
<rect x="751.23" y="237.00" width="8.78" height="1.5" fill="#3a5487"/>
<rect x="760.01" y="237.00" width="26.35" height="1.5" fill="#2b7585"/>
<rect x="786.36" y="237.00" width="8.78" height="1.5" fill="#3a5487"/>
<rect x="795.15" y="237.00" width="8.78" height="1.5" fill="#2b7585"/>
<rect x="803.93" y="237.00" width="8.78" height="1.5" fill="#3a5487"/>
<rect x="812.72" y="237.00" width="8.78" height="1.5" fill="#2b7585"/>
<rect x="821.50" y="237.00" width="8.78" height="1.5" fill="#3b3f6e"/>
<rect x="830.29" y="237.00" width="17.57" height="1.5" fill="#2b7585"/>
<rect x="847.86" y="237.00" width="8.78" height="1.5" fill="#3a5487"/>
<rect x="856.64" y="237.00" width="8.78" height="1.5" fill="#2b7585"/>
<rect x="865.43" y="237.00" width="8.78" height="1.5" fill="#3a5487"/>
<rect x="874.21" y="237.00" width="8.78" height="1.5" fill="#3b3f6e"/>
<rect x="883.00" y="237.00" width="26.35" height="1.5" fill="#2b7585"/>
<rect x="909.35" y="237.00" width="8.78" height="1.5" fill="#3b3f6e"/>
<rect x="918.14" y="237.00" width="8.78" height="1.5" fill="#22908a"/>
<rect x="926.92" y="237.00" width="8.78" height="1.5" fill="#3b3f6e"/>
<rect x="935.70" y="237.00" width="8.78" height="1.5" fill="#22908a"/>
<rect x="944.49" y="237.00" width="17.57" height="1.5" fill="#3a5487"/>
<rect x="962.06" y="237.00" width="8.78" height="1.5" fill="#2b7585"/>
<rect x="970.84" y="237.00" width="8.78" height="1.5" fill="#3b3f6e"/>
<rect x="979.63" y="237.00" width="26.35" height="1.5" fill="#2b7585"/>
<rect x="1005.98" y="237.00" width="8.78" height="1.5" fill="#3b3f6e"/>
<rect x="1014.77" y="237.00" width="8.78" height="1.5" fill="#2b7585"/>
<rect x="1023.55" y="237.00" width="8.78" height="1.5" fill="#3a5487"/>
<rect x="1032.34" y="237.00" width="17.57" height="1.5" fill="#2b7585"/>
<rect x="1049.91" y="237.00" width="17.57" height="1.5" fill="#3b3f6e"/>
<rect x="1067.48" y="237.00" width="17.57" height="1.5" fill="#3a5487"/>
<rect x="1085.05" y="237.00" width="8.78" height="1.5" fill="#2b7585"/>
<rect x="1093.83" y="237.00" width="8.78" height="1.5" fill="#3b3f6e"/>
<rect x="1102.61" y="237.00" width="8.78" height="1.5" fill="#2b7585"/>
<rect x="1111.40" y="237.00" width="8.78" height="1.5" fill="#3a5487"/>
<rect x="1120.18" y="237.00" width="8.78" height="1.5" fill="#3b3f6e"/>
<rect x="1128.97" y="237.00" width="17.57" height="1.5" fill="#2b7585"/>
<rect x="1146.54" y="237.00" width="17.57" height="1.5" fill="#22908a"/>
<rect x="1164.11" y="237.00" width="8.78" height="1.5" fill="#2b7585"/>
<rect x="1172.89" y="237.00" width="8.78" height="1.5" fill="#3a5487"/>
<rect x="1181.68" y="237.00" width="8.78" height="1.5" fill="#2b7585"/>
<rect x="1190.46" y="237.00" width="8.78" height="1.5" fill="#22908a"/>
<rect x="1199.25" y="237.00" width="26.35" height="1.5" fill="#2b7585"/>
<rect x="1225.60" y="237.00" width="26.35" height="1.5" fill="#3b3f6e"/>
<rect x="1251.95" y="237.00" width="8.78" height="1.5" fill="#2b7585"/>
<rect x="1366.16" y="237.00" width="8.78" height="1.5" fill="#37304f"/>
<rect x="1392.51" y="237.00" width="8.78" height="1.5" fill="#37304f"/>
<rect x="1401.30" y="237.00" width="8.78" height="1.5" fill="#3b3f6e"/>
<rect x="1462.79" y="237.00" width="8.78" height="1.5" fill="#37304f"/>
<rect x="1550.64" y="237.00" width="8.78" height="1.5" fill="#37304f"/>
<rect x="540.39" y="235.50" width="8.78" height="1.5" fill="#37304f"/>
<rect x="566.75" y="235.50" width="8.78" height="1.5" fill="#37304f"/>
<rect x="593.10" y="235.50" width="8.78" height="1.5" fill="#3a5487"/>
<rect x="619.45" y="235.50" width="17.57" height="1.5" fill="#3a5487"/>
<rect x="645.81" y="235.50" width="8.78" height="1.5" fill="#37304f"/>
<rect x="663.38" y="235.50" width="8.78" height="1.5" fill="#37304f"/>
<rect x="672.16" y="235.50" width="8.78" height="1.5" fill="#3a5487"/>
<rect x="698.52" y="235.50" width="8.78" height="1.5" fill="#3a5487"/>
<rect x="707.30" y="235.50" width="8.78" height="1.5" fill="#37304f"/>
<rect x="716.09" y="235.50" width="8.78" height="1.5" fill="#3b3f6e"/>
<rect x="733.66" y="235.50" width="8.78" height="1.5" fill="#3b3f6e"/>
<rect x="742.44" y="235.50" width="8.78" height="1.5" fill="#37304f"/>
<rect x="751.23" y="235.50" width="8.78" height="1.5" fill="#3b3f6e"/>
<rect x="760.01" y="235.50" width="8.78" height="1.5" fill="#3a5487"/>
<rect x="777.58" y="235.50" width="8.78" height="1.5" fill="#3b3f6e"/>
<rect x="786.36" y="235.50" width="8.78" height="1.5" fill="#2b7585"/>
<rect x="795.15" y="235.50" width="52.71" height="1.5" fill="#3b3f6e"/>
<rect x="847.86" y="235.50" width="8.78" height="1.5" fill="#2b7585"/>
<rect x="856.64" y="235.50" width="17.57" height="1.5" fill="#3b3f6e"/>
<rect x="874.21" y="235.50" width="8.78" height="1.5" fill="#3a5487"/>
<rect x="883.00" y="235.50" width="8.78" height="1.5" fill="#3b3f6e"/>
<rect x="891.78" y="235.50" width="17.57" height="1.5" fill="#37304f"/>
<rect x="909.35" y="235.50" width="8.78" height="1.5" fill="#3a5487"/>
<rect x="918.14" y="235.50" width="8.78" height="1.5" fill="#3b3f6e"/>
<rect x="935.70" y="235.50" width="8.78" height="1.5" fill="#3b3f6e"/>
<rect x="953.27" y="235.50" width="8.78" height="1.5" fill="#3a5487"/>
<rect x="962.06" y="235.50" width="8.78" height="1.5" fill="#3b3f6e"/>
<rect x="979.63" y="235.50" width="17.57" height="1.5" fill="#3a5487"/>
<rect x="997.20" y="235.50" width="17.57" height="1.5" fill="#3b3f6e"/>
<rect x="1014.77" y="235.50" width="8.78" height="1.5" fill="#3a5487"/>
<rect x="1023.55" y="235.50" width="8.78" height="1.5" fill="#3b3f6e"/>
<rect x="1032.34" y="235.50" width="17.57" height="1.5" fill="#3a5487"/>
<rect x="1049.91" y="235.50" width="8.78" height="1.5" fill="#3b3f6e"/>
<rect x="1058.69" y="235.50" width="8.78" height="1.5" fill="#37304f"/>
<rect x="1067.48" y="235.50" width="8.78" height="1.5" fill="#3b3f6e"/>
<rect x="1085.05" y="235.50" width="8.78" height="1.5" fill="#3b3f6e"/>
<rect x="1102.61" y="235.50" width="8.78" height="1.5" fill="#3b3f6e"/>
<rect x="1111.40" y="235.50" width="8.78" height="1.5" fill="#37304f"/>
<rect x="1120.18" y="235.50" width="26.35" height="1.5" fill="#3a5487"/>
<rect x="1146.54" y="235.50" width="8.78" height="1.5" fill="#2b7585"/>
<rect x="1155.32" y="235.50" width="8.78" height="1.5" fill="#3b3f6e"/>
<rect x="1164.11" y="235.50" width="8.78" height="1.5" fill="#37304f"/>
<rect x="1172.89" y="235.50" width="8.78" height="1.5" fill="#3b3f6e"/>
<rect x="1181.68" y="235.50" width="8.78" height="1.5" fill="#3a5487"/>
<rect x="1190.46" y="235.50" width="17.57" height="1.5" fill="#3b3f6e"/>
<rect x="1208.03" y="235.50" width="8.78" height="1.5" fill="#3a5487"/>
<rect x="1216.82" y="235.50" width="8.78" height="1.5" fill="#3b3f6e"/>
<rect x="1225.60" y="235.50" width="8.78" height="1.5" fill="#2b7585"/>
<rect x="1243.17" y="235.50" width="17.57" height="1.5" fill="#3b3f6e"/>
<rect x="536.00" y="234.00" width="4.39" height="1.5" fill="#3a5487"/>
<rect x="557.96" y="234.00" width="8.78" height="1.5" fill="#37304f"/>
<rect x="566.75" y="234.00" width="17.57" height="1.5" fill="#3b3f6e"/>
<rect x="584.32" y="234.00" width="8.78" height="1.5" fill="#37304f"/>
<rect x="601.89" y="234.00" width="8.78" height="1.5" fill="#3a5487"/>
<rect x="610.67" y="234.00" width="8.78" height="1.5" fill="#37304f"/>
<rect x="619.45" y="234.00" width="8.78" height="1.5" fill="#3b3f6e"/>
<rect x="637.02" y="234.00" width="17.57" height="1.5" fill="#3a5487"/>
<rect x="654.59" y="234.00" width="8.78" height="1.5" fill="#3b3f6e"/>
<rect x="663.38" y="234.00" width="8.78" height="1.5" fill="#37304f"/>
<rect x="680.95" y="234.00" width="8.78" height="1.5" fill="#3b3f6e"/>
<rect x="689.73" y="234.00" width="17.57" height="1.5" fill="#3a5487"/>
<rect x="716.09" y="234.00" width="8.78" height="1.5" fill="#37304f"/>
<rect x="751.23" y="234.00" width="8.78" height="1.5" fill="#3a5487"/>
<rect x="760.01" y="234.00" width="8.78" height="1.5" fill="#37304f"/>
<rect x="777.58" y="234.00" width="17.57" height="1.5" fill="#37304f"/>
<rect x="812.72" y="234.00" width="8.78" height="1.5" fill="#3b3f6e"/>
<rect x="821.50" y="234.00" width="17.57" height="1.5" fill="#3a5487"/>
<rect x="839.07" y="234.00" width="17.57" height="1.5" fill="#3b3f6e"/>
<rect x="856.64" y="234.00" width="8.78" height="1.5" fill="#2b7585"/>
<rect x="874.21" y="234.00" width="17.57" height="1.5" fill="#3b3f6e"/>
<rect x="891.78" y="234.00" width="8.78" height="1.5" fill="#3a5487"/>
<rect x="900.57" y="234.00" width="17.57" height="1.5" fill="#37304f"/>
<rect x="918.14" y="234.00" width="8.78" height="1.5" fill="#3a5487"/>
<rect x="935.70" y="234.00" width="8.78" height="1.5" fill="#3b3f6e"/>
<rect x="953.27" y="234.00" width="17.57" height="1.5" fill="#3a5487"/>
<rect x="979.63" y="234.00" width="8.78" height="1.5" fill="#2b7585"/>
<rect x="988.41" y="234.00" width="8.78" height="1.5" fill="#3b3f6e"/>
<rect x="997.20" y="234.00" width="8.78" height="1.5" fill="#37304f"/>
<rect x="1023.55" y="234.00" width="8.78" height="1.5" fill="#3a5487"/>
<rect x="1032.34" y="234.00" width="8.78" height="1.5" fill="#3b3f6e"/>
<rect x="1041.12" y="234.00" width="8.78" height="1.5" fill="#37304f"/>
<rect x="1085.05" y="234.00" width="8.78" height="1.5" fill="#3b3f6e"/>
<rect x="1102.61" y="234.00" width="8.78" height="1.5" fill="#3b3f6e"/>
<rect x="1111.40" y="234.00" width="8.78" height="1.5" fill="#3a5487"/>
<rect x="1137.75" y="234.00" width="8.78" height="1.5" fill="#37304f"/>
<rect x="1146.54" y="234.00" width="8.78" height="1.5" fill="#3a5487"/>
<rect x="1155.32" y="234.00" width="8.78" height="1.5" fill="#2b7585"/>
<rect x="1164.11" y="234.00" width="8.78" height="1.5" fill="#37304f"/>
<rect x="1172.89" y="234.00" width="8.78" height="1.5" fill="#3a5487"/>
<rect x="1190.46" y="234.00" width="8.78" height="1.5" fill="#3a5487"/>
<rect x="1199.25" y="234.00" width="8.78" height="1.5" fill="#2b7585"/>
<rect x="1216.82" y="234.00" width="8.78" height="1.5" fill="#3b3f6e"/>
<rect x="1225.60" y="234.00" width="8.78" height="1.5" fill="#3a5487"/>
<rect x="1234.39" y="234.00" width="8.78" height="1.5" fill="#37304f"/>
<rect x="1251.95" y="234.00" width="8.78" height="1.5" fill="#3a5487"/>
<rect x="540.39" y="232.50" width="8.78" height="1.5" fill="#3b3f6e"/>
<rect x="549.18" y="232.50" width="8.78" height="1.5" fill="#37304f"/>
<rect x="557.96" y="232.50" width="8.78" height="1.5" fill="#3b3f6e"/>
<rect x="566.75" y="232.50" width="8.78" height="1.5" fill="#37304f"/>
<rect x="575.53" y="232.50" width="8.78" height="1.5" fill="#3b3f6e"/>
<rect x="584.32" y="232.50" width="8.78" height="1.5" fill="#3a5487"/>
<rect x="610.67" y="232.50" width="26.35" height="1.5" fill="#37304f"/>
<rect x="645.81" y="232.50" width="8.78" height="1.5" fill="#3a5487"/>
<rect x="663.38" y="232.50" width="8.78" height="1.5" fill="#3b3f6e"/>
<rect x="672.16" y="232.50" width="8.78" height="1.5" fill="#37304f"/>
<rect x="689.73" y="232.50" width="8.78" height="1.5" fill="#37304f"/>
<rect x="716.09" y="232.50" width="8.78" height="1.5" fill="#3a5487"/>
<rect x="733.66" y="232.50" width="8.78" height="1.5" fill="#3b3f6e"/>
<rect x="751.23" y="232.50" width="8.78" height="1.5" fill="#37304f"/>
<rect x="768.80" y="232.50" width="17.57" height="1.5" fill="#37304f"/>
<rect x="795.15" y="232.50" width="8.78" height="1.5" fill="#3b3f6e"/>
<rect x="803.93" y="232.50" width="8.78" height="1.5" fill="#37304f"/>
<rect x="821.50" y="232.50" width="8.78" height="1.5" fill="#3a5487"/>
<rect x="847.86" y="232.50" width="17.57" height="1.5" fill="#3a5487"/>
<rect x="865.43" y="232.50" width="8.78" height="1.5" fill="#37304f"/>
<rect x="883.00" y="232.50" width="8.78" height="1.5" fill="#37304f"/>
<rect x="891.78" y="232.50" width="8.78" height="1.5" fill="#3a5487"/>
<rect x="909.35" y="232.50" width="8.78" height="1.5" fill="#3b3f6e"/>
<rect x="944.49" y="232.50" width="8.78" height="1.5" fill="#3b3f6e"/>
<rect x="962.06" y="232.50" width="8.78" height="1.5" fill="#3a5487"/>
<rect x="970.84" y="232.50" width="17.57" height="1.5" fill="#3b3f6e"/>
<rect x="988.41" y="232.50" width="8.78" height="1.5" fill="#37304f"/>
<rect x="997.20" y="232.50" width="8.78" height="1.5" fill="#3a5487"/>
<rect x="1005.98" y="232.50" width="8.78" height="1.5" fill="#3b3f6e"/>
<rect x="1023.55" y="232.50" width="8.78" height="1.5" fill="#3b3f6e"/>
<rect x="1032.34" y="232.50" width="8.78" height="1.5" fill="#37304f"/>
<rect x="1049.91" y="232.50" width="8.78" height="1.5" fill="#37304f"/>
<rect x="1058.69" y="232.50" width="8.78" height="1.5" fill="#3b3f6e"/>
<rect x="1067.48" y="232.50" width="8.78" height="1.5" fill="#37304f"/>
<rect x="1076.26" y="232.50" width="8.78" height="1.5" fill="#3b3f6e"/>
<rect x="1111.40" y="232.50" width="8.78" height="1.5" fill="#3b3f6e"/>
<rect x="1120.18" y="232.50" width="8.78" height="1.5" fill="#37304f"/>
<rect x="1137.75" y="232.50" width="8.78" height="1.5" fill="#3b3f6e"/>
<rect x="1146.54" y="232.50" width="8.78" height="1.5" fill="#37304f"/>
<rect x="1190.46" y="232.50" width="8.78" height="1.5" fill="#3b3f6e"/>
<rect x="1208.03" y="232.50" width="8.78" height="1.5" fill="#37304f"/>
<rect x="1216.82" y="232.50" width="8.78" height="1.5" fill="#3a5487"/>
<rect x="540.39" y="231.00" width="8.78" height="1.5" fill="#37304f"/>
<rect x="575.53" y="231.00" width="8.78" height="1.5" fill="#3a5487"/>
<rect x="584.32" y="231.00" width="8.78" height="1.5" fill="#37304f"/>
<rect x="628.24" y="231.00" width="8.78" height="1.5" fill="#3b3f6e"/>
<rect x="663.38" y="231.00" width="8.78" height="1.5" fill="#3b3f6e"/>
<rect x="698.52" y="231.00" width="8.78" height="1.5" fill="#37304f"/>
<rect x="707.30" y="231.00" width="8.78" height="1.5" fill="#3a5487"/>
<rect x="751.23" y="231.00" width="8.78" height="1.5" fill="#37304f"/>
<rect x="768.80" y="231.00" width="8.78" height="1.5" fill="#37304f"/>
<rect x="777.58" y="231.00" width="8.78" height="1.5" fill="#3b3f6e"/>
<rect x="795.15" y="231.00" width="8.78" height="1.5" fill="#37304f"/>
<rect x="803.93" y="231.00" width="8.78" height="1.5" fill="#3a5487"/>
<rect x="821.50" y="231.00" width="8.78" height="1.5" fill="#3b3f6e"/>
<rect x="847.86" y="231.00" width="8.78" height="1.5" fill="#3a5487"/>
<rect x="883.00" y="231.00" width="8.78" height="1.5" fill="#37304f"/>
<rect x="900.57" y="231.00" width="17.57" height="1.5" fill="#37304f"/>
<rect x="944.49" y="231.00" width="8.78" height="1.5" fill="#37304f"/>
<rect x="962.06" y="231.00" width="8.78" height="1.5" fill="#37304f"/>
<rect x="970.84" y="231.00" width="8.78" height="1.5" fill="#3a5487"/>
<rect x="979.63" y="231.00" width="8.78" height="1.5" fill="#37304f"/>
<rect x="1014.77" y="231.00" width="8.78" height="1.5" fill="#37304f"/>
<rect x="1023.55" y="231.00" width="8.78" height="1.5" fill="#3b3f6e"/>
<rect x="1032.34" y="231.00" width="8.78" height="1.5" fill="#3a5487"/>
<rect x="1049.91" y="231.00" width="17.57" height="1.5" fill="#37304f"/>
<rect x="1067.48" y="231.00" width="8.78" height="1.5" fill="#3a5487"/>
<rect x="1085.05" y="231.00" width="8.78" height="1.5" fill="#3a5487"/>
<rect x="1093.83" y="231.00" width="8.78" height="1.5" fill="#3b3f6e"/>
<rect x="1111.40" y="231.00" width="8.78" height="1.5" fill="#37304f"/>
<rect x="1120.18" y="231.00" width="8.78" height="1.5" fill="#3a5487"/>
<rect x="1146.54" y="231.00" width="8.78" height="1.5" fill="#37304f"/>
<rect x="1155.32" y="231.00" width="8.78" height="1.5" fill="#3a5487"/>
<rect x="1164.11" y="231.00" width="8.78" height="1.5" fill="#3b3f6e"/>
<rect x="1181.68" y="231.00" width="8.78" height="1.5" fill="#37304f"/>
<rect x="1208.03" y="231.00" width="8.78" height="1.5" fill="#37304f"/>
<rect x="1234.39" y="231.00" width="17.57" height="1.5" fill="#3b3f6e"/>
<rect x="1251.95" y="231.00" width="8.78" height="1.5" fill="#37304f"/>
<rect x="540.39" y="229.50" width="8.78" height="1.5" fill="#37304f"/>
<rect x="584.32" y="229.50" width="8.78" height="1.5" fill="#37304f"/>
<rect x="601.89" y="229.50" width="8.78" height="1.5" fill="#37304f"/>
<rect x="760.01" y="229.50" width="17.57" height="1.5" fill="#37304f"/>
<rect x="777.58" y="229.50" width="8.78" height="1.5" fill="#3a5487"/>
<rect x="803.93" y="229.50" width="8.78" height="1.5" fill="#3b3f6e"/>
<rect x="812.72" y="229.50" width="17.57" height="1.5" fill="#37304f"/>
<rect x="830.29" y="229.50" width="8.78" height="1.5" fill="#3b3f6e"/>
<rect x="839.07" y="229.50" width="8.78" height="1.5" fill="#3a5487"/>
<rect x="847.86" y="229.50" width="17.57" height="1.5" fill="#37304f"/>
<rect x="883.00" y="229.50" width="8.78" height="1.5" fill="#3b3f6e"/>
<rect x="944.49" y="229.50" width="17.57" height="1.5" fill="#37304f"/>
<rect x="979.63" y="229.50" width="8.78" height="1.5" fill="#37304f"/>
<rect x="997.20" y="229.50" width="8.78" height="1.5" fill="#3a5487"/>
<rect x="1005.98" y="229.50" width="8.78" height="1.5" fill="#37304f"/>
<rect x="1014.77" y="229.50" width="8.78" height="1.5" fill="#3b3f6e"/>
<rect x="1041.12" y="229.50" width="8.78" height="1.5" fill="#3a5487"/>
<rect x="1049.91" y="229.50" width="8.78" height="1.5" fill="#3b3f6e"/>
<rect x="1067.48" y="229.50" width="17.57" height="1.5" fill="#3b3f6e"/>
<rect x="1085.05" y="229.50" width="8.78" height="1.5" fill="#37304f"/>
<rect x="1102.61" y="229.50" width="8.78" height="1.5" fill="#3a5487"/>
<rect x="1120.18" y="229.50" width="8.78" height="1.5" fill="#3a5487"/>
<rect x="1128.97" y="229.50" width="8.78" height="1.5" fill="#37304f"/>
<rect x="1137.75" y="229.50" width="17.57" height="1.5" fill="#3a5487"/>
<rect x="1190.46" y="229.50" width="8.78" height="1.5" fill="#3a5487"/>
<rect x="1208.03" y="229.50" width="8.78" height="1.5" fill="#3b3f6e"/>
<rect x="1225.60" y="229.50" width="17.57" height="1.5" fill="#37304f"/>
<rect x="1251.95" y="229.50" width="8.78" height="1.5" fill="#37304f"/>
<rect x="536.00" y="228.00" width="4.39" height="1.5" fill="#37304f"/>
<rect x="549.18" y="228.00" width="8.78" height="1.5" fill="#37304f"/>
<rect x="575.53" y="228.00" width="8.78" height="1.5" fill="#3b3f6e"/>
<rect x="593.10" y="228.00" width="8.78" height="1.5" fill="#37304f"/>
<rect x="601.89" y="228.00" width="8.78" height="1.5" fill="#3b3f6e"/>
<rect x="637.02" y="228.00" width="8.78" height="1.5" fill="#3b3f6e"/>
<rect x="716.09" y="228.00" width="8.78" height="1.5" fill="#37304f"/>
<rect x="751.23" y="228.00" width="8.78" height="1.5" fill="#3b3f6e"/>
<rect x="803.93" y="228.00" width="8.78" height="1.5" fill="#37304f"/>
<rect x="830.29" y="228.00" width="8.78" height="1.5" fill="#37304f"/>
<rect x="856.64" y="228.00" width="8.78" height="1.5" fill="#3a5487"/>
<rect x="918.14" y="228.00" width="8.78" height="1.5" fill="#3b3f6e"/>
<rect x="935.70" y="228.00" width="17.57" height="1.5" fill="#37304f"/>
<rect x="979.63" y="228.00" width="8.78" height="1.5" fill="#37304f"/>
<rect x="1093.83" y="228.00" width="8.78" height="1.5" fill="#37304f"/>
<rect x="1102.61" y="228.00" width="8.78" height="1.5" fill="#3b3f6e"/>
<rect x="1137.75" y="228.00" width="8.78" height="1.5" fill="#37304f"/>
<rect x="1146.54" y="228.00" width="8.78" height="1.5" fill="#3b3f6e"/>
<rect x="1216.82" y="228.00" width="8.78" height="1.5" fill="#3b3f6e"/>
<rect x="601.89" y="226.50" width="8.78" height="1.5" fill="#3b3f6e"/>
<rect x="628.24" y="226.50" width="17.57" height="1.5" fill="#3b3f6e"/>
<rect x="645.81" y="226.50" width="17.57" height="1.5" fill="#37304f"/>
<rect x="689.73" y="226.50" width="8.78" height="1.5" fill="#37304f"/>
<rect x="707.30" y="226.50" width="8.78" height="1.5" fill="#37304f"/>
<rect x="724.87" y="226.50" width="8.78" height="1.5" fill="#37304f"/>
<rect x="751.23" y="226.50" width="8.78" height="1.5" fill="#3b3f6e"/>
<rect x="760.01" y="226.50" width="8.78" height="1.5" fill="#37304f"/>
<rect x="865.43" y="226.50" width="26.35" height="1.5" fill="#37304f"/>
<rect x="918.14" y="226.50" width="17.57" height="1.5" fill="#37304f"/>
<rect x="944.49" y="226.50" width="8.78" height="1.5" fill="#3b3f6e"/>
<rect x="970.84" y="226.50" width="8.78" height="1.5" fill="#37304f"/>
<rect x="988.41" y="226.50" width="8.78" height="1.5" fill="#3b3f6e"/>
<rect x="1005.98" y="226.50" width="8.78" height="1.5" fill="#3b3f6e"/>
<rect x="1032.34" y="226.50" width="8.78" height="1.5" fill="#37304f"/>
<rect x="1049.91" y="226.50" width="17.57" height="1.5" fill="#37304f"/>
<rect x="1137.75" y="226.50" width="17.57" height="1.5" fill="#37304f"/>
<rect x="1164.11" y="226.50" width="26.35" height="1.5" fill="#37304f"/>
<rect x="1216.82" y="226.50" width="26.35" height="1.5" fill="#37304f"/>
<rect x="1251.95" y="226.50" width="8.78" height="1.5" fill="#3b3f6e"/>
<rect x="536.00" y="225.00" width="4.39" height="1.5" fill="#37304f"/>
<rect x="672.16" y="225.00" width="8.78" height="1.5" fill="#37304f"/>
<rect x="716.09" y="225.00" width="8.78" height="1.5" fill="#37304f"/>
<rect x="786.36" y="225.00" width="8.78" height="1.5" fill="#37304f"/>
<rect x="865.43" y="225.00" width="8.78" height="1.5" fill="#37304f"/>
<rect x="891.78" y="225.00" width="8.78" height="1.5" fill="#37304f"/>
<rect x="909.35" y="225.00" width="17.57" height="1.5" fill="#37304f"/>
<rect x="935.70" y="225.00" width="8.78" height="1.5" fill="#3b3f6e"/>
<rect x="953.27" y="225.00" width="8.78" height="1.5" fill="#37304f"/>
<rect x="1014.77" y="225.00" width="8.78" height="1.5" fill="#37304f"/>
<rect x="1041.12" y="225.00" width="8.78" height="1.5" fill="#37304f"/>
<rect x="1058.69" y="225.00" width="8.78" height="1.5" fill="#37304f"/>
<rect x="1067.48" y="225.00" width="8.78" height="1.5" fill="#3b3f6e"/>
<rect x="1093.83" y="225.00" width="8.78" height="1.5" fill="#37304f"/>
<rect x="1111.40" y="225.00" width="8.78" height="1.5" fill="#3b3f6e"/>
<rect x="1164.11" y="225.00" width="8.78" height="1.5" fill="#3b3f6e"/>
<rect x="1172.89" y="225.00" width="8.78" height="1.5" fill="#37304f"/>
<rect x="1243.17" y="225.00" width="8.78" height="1.5" fill="#37304f"/>
<rect x="575.53" y="223.50" width="17.57" height="1.5" fill="#37304f"/>
<rect x="610.67" y="223.50" width="8.78" height="1.5" fill="#37304f"/>
<rect x="663.38" y="223.50" width="8.78" height="1.5" fill="#37304f"/>
<rect x="707.30" y="223.50" width="8.78" height="1.5" fill="#37304f"/>
<rect x="733.66" y="223.50" width="8.78" height="1.5" fill="#3b3f6e"/>
<rect x="795.15" y="223.50" width="8.78" height="1.5" fill="#37304f"/>
<rect x="812.72" y="223.50" width="8.78" height="1.5" fill="#37304f"/>
<rect x="830.29" y="223.50" width="8.78" height="1.5" fill="#37304f"/>
<rect x="891.78" y="223.50" width="8.78" height="1.5" fill="#37304f"/>
<rect x="900.57" y="223.50" width="17.57" height="1.5" fill="#3b3f6e"/>
<rect x="926.92" y="223.50" width="8.78" height="1.5" fill="#3b3f6e"/>
<rect x="935.70" y="223.50" width="8.78" height="1.5" fill="#37304f"/>
<rect x="962.06" y="223.50" width="8.78" height="1.5" fill="#37304f"/>
<rect x="988.41" y="223.50" width="8.78" height="1.5" fill="#37304f"/>
<rect x="1005.98" y="223.50" width="8.78" height="1.5" fill="#37304f"/>
<rect x="1049.91" y="223.50" width="8.78" height="1.5" fill="#3b3f6e"/>
<rect x="557.96" y="222.00" width="8.78" height="1.5" fill="#3b3f6e"/>
<rect x="575.53" y="222.00" width="8.78" height="1.5" fill="#37304f"/>
<rect x="584.32" y="222.00" width="8.78" height="1.5" fill="#3b3f6e"/>
<rect x="593.10" y="222.00" width="8.78" height="1.5" fill="#37304f"/>
<rect x="654.59" y="222.00" width="8.78" height="1.5" fill="#37304f"/>
<rect x="672.16" y="222.00" width="8.78" height="1.5" fill="#3b3f6e"/>
<rect x="795.15" y="222.00" width="8.78" height="1.5" fill="#37304f"/>
<rect x="812.72" y="222.00" width="8.78" height="1.5" fill="#37304f"/>
<rect x="926.92" y="222.00" width="8.78" height="1.5" fill="#37304f"/>
<rect x="962.06" y="222.00" width="8.78" height="1.5" fill="#3b3f6e"/>
<rect x="988.41" y="222.00" width="17.57" height="1.5" fill="#37304f"/>
<rect x="1023.55" y="222.00" width="8.78" height="1.5" fill="#37304f"/>
<rect x="1076.26" y="222.00" width="8.78" height="1.5" fill="#37304f"/>
<rect x="1111.40" y="222.00" width="8.78" height="1.5" fill="#3b3f6e"/>
<rect x="1181.68" y="222.00" width="8.78" height="1.5" fill="#37304f"/>
<rect x="1234.39" y="222.00" width="17.57" height="1.5" fill="#37304f"/>
<rect x="536.00" y="220.50" width="4.39" height="1.5" fill="#3b3f6e"/>
<rect x="540.39" y="220.50" width="17.57" height="1.5" fill="#37304f"/>
<rect x="584.32" y="220.50" width="8.78" height="1.5" fill="#37304f"/>
<rect x="637.02" y="220.50" width="8.78" height="1.5" fill="#37304f"/>
<rect x="724.87" y="220.50" width="17.57" height="1.5" fill="#37304f"/>
<rect x="760.01" y="220.50" width="17.57" height="1.5" fill="#37304f"/>
<rect x="786.36" y="220.50" width="8.78" height="1.5" fill="#37304f"/>
<rect x="803.93" y="220.50" width="8.78" height="1.5" fill="#3b3f6e"/>
<rect x="856.64" y="220.50" width="8.78" height="1.5" fill="#37304f"/>
<rect x="900.57" y="220.50" width="8.78" height="1.5" fill="#3b3f6e"/>
<rect x="918.14" y="220.50" width="8.78" height="1.5" fill="#37304f"/>
<rect x="926.92" y="220.50" width="8.78" height="1.5" fill="#3b3f6e"/>
<rect x="935.70" y="220.50" width="8.78" height="1.5" fill="#37304f"/>
<rect x="970.84" y="220.50" width="8.78" height="1.5" fill="#3b3f6e"/>
<rect x="997.20" y="220.50" width="8.78" height="1.5" fill="#37304f"/>
<rect x="1049.91" y="220.50" width="8.78" height="1.5" fill="#3b3f6e"/>
<rect x="1085.05" y="220.50" width="8.78" height="1.5" fill="#37304f"/>
<rect x="1093.83" y="220.50" width="8.78" height="1.5" fill="#3b3f6e"/>
<rect x="1137.75" y="220.50" width="8.78" height="1.5" fill="#37304f"/>
<rect x="1164.11" y="220.50" width="8.78" height="1.5" fill="#37304f"/>
<rect x="1172.89" y="220.50" width="8.78" height="1.5" fill="#3b3f6e"/>
<rect x="1199.25" y="220.50" width="8.78" height="1.5" fill="#37304f"/>
<rect x="593.10" y="219.00" width="8.78" height="1.5" fill="#37304f"/>
<rect x="610.67" y="219.00" width="8.78" height="1.5" fill="#37304f"/>
<rect x="628.24" y="219.00" width="8.78" height="1.5" fill="#37304f"/>
<rect x="724.87" y="219.00" width="8.78" height="1.5" fill="#3b3f6e"/>
<rect x="742.44" y="219.00" width="8.78" height="1.5" fill="#37304f"/>
<rect x="751.23" y="219.00" width="8.78" height="1.5" fill="#3b3f6e"/>
<rect x="768.80" y="219.00" width="8.78" height="1.5" fill="#3b3f6e"/>
<rect x="803.93" y="219.00" width="8.78" height="1.5" fill="#37304f"/>
<rect x="830.29" y="219.00" width="8.78" height="1.5" fill="#37304f"/>
<rect x="874.21" y="219.00" width="8.78" height="1.5" fill="#37304f"/>
<rect x="883.00" y="219.00" width="8.78" height="1.5" fill="#3b3f6e"/>
<rect x="900.57" y="219.00" width="8.78" height="1.5" fill="#3b3f6e"/>
<rect x="953.27" y="219.00" width="8.78" height="1.5" fill="#3b3f6e"/>
<rect x="997.20" y="219.00" width="8.78" height="1.5" fill="#37304f"/>
<rect x="1041.12" y="219.00" width="17.57" height="1.5" fill="#37304f"/>
<rect x="1067.48" y="219.00" width="8.78" height="1.5" fill="#37304f"/>
<rect x="1111.40" y="219.00" width="8.78" height="1.5" fill="#3b3f6e"/>
<rect x="1155.32" y="219.00" width="8.78" height="1.5" fill="#37304f"/>
<rect x="1172.89" y="219.00" width="8.78" height="1.5" fill="#37304f"/>
<rect x="1216.82" y="219.00" width="8.78" height="1.5" fill="#3b3f6e"/>
<rect x="1225.60" y="219.00" width="8.78" height="1.5" fill="#37304f"/>
<rect x="663.38" y="217.50" width="17.57" height="1.5" fill="#3b3f6e"/>
<rect x="689.73" y="217.50" width="8.78" height="1.5" fill="#3a5487"/>
<rect x="724.87" y="217.50" width="8.78" height="1.5" fill="#3a5487"/>
<rect x="795.15" y="217.50" width="17.57" height="1.5" fill="#3a5487"/>
<rect x="839.07" y="217.50" width="8.78" height="1.5" fill="#3b3f6e"/>
<rect x="856.64" y="217.50" width="8.78" height="1.5" fill="#37304f"/>
<rect x="1005.98" y="217.50" width="8.78" height="1.5" fill="#3a5487"/>
<rect x="1049.91" y="217.50" width="8.78" height="1.5" fill="#3b3f6e"/>
<rect x="1076.26" y="217.50" width="8.78" height="1.5" fill="#3b3f6e"/>
<rect x="1111.40" y="217.50" width="8.78" height="1.5" fill="#3a5487"/>
<rect x="1137.75" y="217.50" width="8.78" height="1.5" fill="#37304f"/>
<rect x="1172.89" y="217.50" width="8.78" height="1.5" fill="#37304f"/>
<rect x="1208.03" y="217.50" width="8.78" height="1.5" fill="#3b3f6e"/>
<rect x="1243.17" y="217.50" width="8.78" height="1.5" fill="#37304f"/>
<rect x="540.39" y="216.00" width="8.78" height="1.5" fill="#3a5487"/>
<rect x="566.75" y="216.00" width="8.78" height="1.5" fill="#3a5487"/>
<rect x="680.95" y="216.00" width="8.78" height="1.5" fill="#3a5487"/>
<rect x="689.73" y="216.00" width="8.78" height="1.5" fill="#37304f"/>
<rect x="724.87" y="216.00" width="8.78" height="1.5" fill="#37304f"/>
<rect x="803.93" y="216.00" width="8.78" height="1.5" fill="#3a5487"/>
<rect x="926.92" y="216.00" width="8.78" height="1.5" fill="#3a5487"/>
<rect x="970.84" y="216.00" width="8.78" height="1.5" fill="#37304f"/>
<rect x="988.41" y="216.00" width="8.78" height="1.5" fill="#37304f"/>
<rect x="1023.55" y="216.00" width="8.78" height="1.5" fill="#3b3f6e"/>
<rect x="1041.12" y="216.00" width="8.78" height="1.5" fill="#37304f"/>
<rect x="1111.40" y="216.00" width="8.78" height="1.5" fill="#3b3f6e"/>
<rect x="1128.97" y="216.00" width="8.78" height="1.5" fill="#37304f"/>
<rect x="1146.54" y="216.00" width="8.78" height="1.5" fill="#3b3f6e"/>
<rect x="1155.32" y="216.00" width="8.78" height="1.5" fill="#3a5487"/>
<rect x="1216.82" y="216.00" width="8.78" height="1.5" fill="#3a5487"/>
<rect x="1225.60" y="216.00" width="8.78" height="1.5" fill="#37304f"/>
<rect x="1251.95" y="216.00" width="8.78" height="1.5" fill="#3b3f6e"/>
<rect x="540.39" y="214.50" width="8.78" height="1.5" fill="#3b3f6e"/>
<rect x="768.80" y="214.50" width="8.78" height="1.5" fill="#37304f"/>
<rect x="786.36" y="214.50" width="8.78" height="1.5" fill="#37304f"/>
<rect x="821.50" y="214.50" width="8.78" height="1.5" fill="#3a5487"/>
<rect x="839.07" y="214.50" width="8.78" height="1.5" fill="#37304f"/>
<rect x="874.21" y="214.50" width="8.78" height="1.5" fill="#3b3f6e"/>
<rect x="883.00" y="214.50" width="8.78" height="1.5" fill="#3a5487"/>
<rect x="962.06" y="214.50" width="8.78" height="1.5" fill="#37304f"/>
<rect x="979.63" y="214.50" width="8.78" height="1.5" fill="#37304f"/>
<rect x="1102.61" y="214.50" width="8.78" height="1.5" fill="#37304f"/>
<rect x="1120.18" y="214.50" width="8.78" height="1.5" fill="#3a5487"/>
<rect x="1137.75" y="214.50" width="8.78" height="1.5" fill="#3a5487"/>
<rect x="1199.25" y="214.50" width="8.78" height="1.5" fill="#3b3f6e"/>
<rect x="1208.03" y="214.50" width="8.78" height="1.5" fill="#3a5487"/>
<rect x="1243.17" y="214.50" width="8.78" height="1.5" fill="#3a5487"/>
<rect x="1251.95" y="214.50" width="8.78" height="1.5" fill="#3b3f6e"/>
<rect x="689.73" y="213.00" width="8.78" height="1.5" fill="#37304f"/>
<rect x="768.80" y="213.00" width="8.78" height="1.5" fill="#37304f"/>
<rect x="803.93" y="213.00" width="8.78" height="1.5" fill="#37304f"/>
<rect x="979.63" y="213.00" width="8.78" height="1.5" fill="#37304f"/>
<rect x="536.00" y="211.50" width="4.39" height="1.5" fill="#37304f"/>
<rect x="566.75" y="211.50" width="8.78" height="1.5" fill="#37304f"/>
<rect x="584.32" y="211.50" width="8.78" height="1.5" fill="#3b3f6e"/>
<rect x="680.95" y="211.50" width="8.78" height="1.5" fill="#37304f"/>
<rect x="830.29" y="211.50" width="8.78" height="1.5" fill="#37304f"/>
<rect x="997.20" y="211.50" width="8.78" height="1.5" fill="#3b3f6e"/>
<rect x="751.23" y="210.00" width="8.78" height="1.5" fill="#3b3f6e"/>
<rect x="856.64" y="210.00" width="17.57" height="1.5" fill="#37304f"/>
<rect x="909.35" y="210.00" width="8.78" height="1.5" fill="#37304f"/>
<rect x="1049.91" y="210.00" width="8.78" height="1.5" fill="#37304f"/>
<rect x="1181.68" y="210.00" width="8.78" height="1.5" fill="#37304f"/>
<rect x="566.75" y="208.50" width="8.78" height="1.5" fill="#3b3f6e"/>
<rect x="760.01" y="208.50" width="8.78" height="1.5" fill="#37304f"/>
<rect x="812.72" y="208.50" width="8.78" height="1.5" fill="#37304f"/>
<rect x="1172.89" y="208.50" width="8.78" height="1.5" fill="#37304f"/>
<rect x="795.15" y="207.00" width="8.78" height="1.5" fill="#3b3f6e"/>
<rect x="645.81" y="205.50" width="8.78" height="1.5" fill="#3b3f6e"/>
<rect x="663.38" y="205.50" width="8.78" height="1.5" fill="#3b3f6e"/>
<rect x="742.44" y="205.50" width="8.78" height="1.5" fill="#3b3f6e"/>
<rect x="768.80" y="205.50" width="8.78" height="1.5" fill="#37304f"/>
<rect x="988.41" y="205.50" width="8.78" height="1.5" fill="#37304f"/>
<rect x="1005.98" y="204.00" width="8.78" height="1.5" fill="#37304f"/>
<rect x="1067.48" y="204.00" width="8.78" height="1.5" fill="#37304f"/>
<rect x="1146.54" y="204.00" width="8.78" height="1.5" fill="#37304f"/>
<rect x="830.29" y="202.50" width="17.57" height="1.5" fill="#37304f"/>
<rect x="1023.55" y="202.50" width="8.78" height="1.5" fill="#37304f"/>
<rect x="680.95" y="201.00" width="8.78" height="1.5" fill="#3b3f6e"/>
<rect x="803.93" y="201.00" width="8.78" height="1.5" fill="#3b3f6e"/>
<rect x="874.21" y="201.00" width="8.78" height="1.5" fill="#3b3f6e"/>
<rect x="1014.77" y="201.00" width="8.78" height="1.5" fill="#37304f"/>
<rect x="1093.83" y="201.00" width="8.78" height="1.5" fill="#3b3f6e"/>
<rect x="1111.40" y="201.00" width="8.78" height="1.5" fill="#3b3f6e"/>
<rect x="1137.75" y="201.00" width="8.78" height="1.5" fill="#37304f"/>
<rect x="821.50" y="199.50" width="8.78" height="1.5" fill="#37304f"/>
<rect x="970.84" y="199.50" width="8.78" height="1.5" fill="#37304f"/>
<rect x="1216.82" y="199.50" width="8.78" height="1.5" fill="#37304f"/>
<rect x="856.64" y="198.00" width="8.78" height="1.5" fill="#37304f"/>
<rect x="953.27" y="198.00" width="8.78" height="1.5" fill="#3b3f6e"/>
<rect x="997.20" y="198.00" width="8.78" height="1.5" fill="#37304f"/>
<rect x="1041.12" y="198.00" width="8.78" height="1.5" fill="#37304f"/>
<rect x="1102.61" y="198.00" width="8.78" height="1.5" fill="#37304f"/>
<rect x="1208.03" y="198.00" width="8.78" height="1.5" fill="#3b3f6e"/>
<rect x="1251.95" y="198.00" width="8.78" height="1.5" fill="#3b3f6e"/>
<rect x="760.01" y="196.50" width="8.78" height="1.5" fill="#37304f"/>
<rect x="883.00" y="196.50" width="8.78" height="1.5" fill="#3b3f6e"/>
<rect x="1076.26" y="196.50" width="8.78" height="1.5" fill="#3b3f6e"/>
<rect x="1234.39" y="196.50" width="8.78" height="1.5" fill="#3b3f6e"/>
<rect x="724.87" y="195.00" width="17.57" height="1.5" fill="#3b3f6e"/>
<rect x="856.64" y="195.00" width="8.78" height="1.5" fill="#37304f"/>
<rect x="900.57" y="195.00" width="8.78" height="1.5" fill="#37304f"/>
<rect x="1111.40" y="195.00" width="8.78" height="1.5" fill="#37304f"/>
<rect x="1172.89" y="195.00" width="8.78" height="1.5" fill="#3b3f6e"/>
<rect x="1181.68" y="195.00" width="8.78" height="1.5" fill="#37304f"/>
<rect x="865.43" y="193.50" width="8.78" height="1.5" fill="#37304f"/>
<rect x="979.63" y="193.50" width="8.78" height="1.5" fill="#37304f"/>
<rect x="1067.48" y="193.50" width="8.78" height="1.5" fill="#3b3f6e"/>
<rect x="1085.05" y="193.50" width="8.78" height="1.5" fill="#37304f"/>
<rect x="1181.68" y="193.50" width="8.78" height="1.5" fill="#3b3f6e"/>
<rect x="839.07" y="192.00" width="8.78" height="1.5" fill="#37304f"/>
<rect x="1058.69" y="192.00" width="8.78" height="1.5" fill="#3b3f6e"/>
<rect x="1208.03" y="192.00" width="8.78" height="1.5" fill="#3b3f6e"/>
<rect x="795.15" y="190.50" width="8.78" height="1.5" fill="#37304f"/>
<rect x="839.07" y="190.50" width="8.78" height="1.5" fill="#37304f"/>
<rect x="856.64" y="189.00" width="8.78" height="1.5" fill="#37304f"/>
<rect x="909.35" y="189.00" width="8.78" height="1.5" fill="#37304f"/>
<rect x="935.70" y="189.00" width="8.78" height="1.5" fill="#37304f"/>
<rect x="953.27" y="189.00" width="8.78" height="1.5" fill="#37304f"/>
<rect x="970.84" y="189.00" width="8.78" height="1.5" fill="#37304f"/>
<rect x="1041.12" y="189.00" width="8.78" height="1.5" fill="#37304f"/>
<rect x="830.29" y="187.50" width="8.78" height="1.5" fill="#37304f"/>
<rect x="847.86" y="187.50" width="8.78" height="1.5" fill="#37304f"/>
<rect x="997.20" y="187.50" width="8.78" height="1.5" fill="#37304f"/>
<rect x="1128.97" y="187.50" width="8.78" height="1.5" fill="#37304f"/>
<rect x="536.00" y="186.00" width="4.39" height="1.5" fill="#37304f"/>
<rect x="1225.60" y="186.00" width="8.78" height="1.5" fill="#37304f"/>
<rect x="874.21" y="184.50" width="8.78" height="1.5" fill="#37304f"/>
<rect x="997.20" y="184.50" width="8.78" height="1.5" fill="#37304f"/>
<rect x="786.36" y="183.00" width="8.78" height="1.5" fill="#37304f"/>
<rect x="1076.26" y="183.00" width="8.78" height="1.5" fill="#37304f"/>
<rect x="1111.40" y="183.00" width="8.78" height="1.5" fill="#37304f"/>
<rect x="1146.54" y="183.00" width="8.78" height="1.5" fill="#37304f"/>
<rect x="1172.89" y="183.00" width="8.78" height="1.5" fill="#37304f"/>
<rect x="970.84" y="180.00" width="8.78" height="1.5" fill="#37304f"/>
<rect x="1023.55" y="180.00" width="8.78" height="1.5" fill="#37304f"/>
<rect x="1041.12" y="180.00" width="8.78" height="1.5" fill="#37304f"/>
<rect x="1120.18" y="180.00" width="8.78" height="1.5" fill="#37304f"/>
<rect x="830.29" y="178.50" width="8.78" height="1.5" fill="#37304f"/>
<rect x="751.23" y="177.00" width="8.78" height="1.5" fill="#37304f"/>
<rect x="1014.77" y="177.00" width="8.78" height="1.5" fill="#37304f"/>
<rect x="935.70" y="175.50" width="8.78" height="1.5" fill="#37304f"/>
<rect x="1181.68" y="175.50" width="8.78" height="1.5" fill="#37304f"/>
<rect x="777.58" y="174.00" width="8.78" height="1.5" fill="#37304f"/>
<rect x="1005.98" y="171.00" width="8.78" height="1.5" fill="#37304f"/>
<rect x="1251.95" y="171.00" width="8.78" height="1.5" fill="#37304f"/>
<rect x="803.93" y="169.50" width="17.57" height="1.5" fill="#37304f"/>
<rect x="1005.98" y="169.50" width="8.78" height="1.5" fill="#37304f"/>
<rect x="1049.91" y="169.50" width="8.78" height="1.5" fill="#37304f"/>
<rect x="1208.03" y="169.50" width="8.78" height="1.5" fill="#37304f"/>
<rect x="1172.89" y="168.00" width="8.78" height="1.5" fill="#37304f"/>
<rect x="1093.83" y="166.50" width="8.78" height="1.5" fill="#37304f"/>
<rect x="883.00" y="165.00" width="8.78" height="1.5" fill="#37304f"/>
<rect x="716.09" y="163.50" width="8.78" height="1.5" fill="#37304f"/>
<rect x="970.84" y="163.50" width="8.78" height="1.5" fill="#37304f"/>
<rect x="1005.98" y="163.50" width="17.57" height="1.5" fill="#37304f"/>
<rect x="1225.60" y="163.50" width="8.78" height="1.5" fill="#37304f"/>
<rect x="812.72" y="162.00" width="8.78" height="1.5" fill="#37304f"/>
<rect x="1172.89" y="162.00" width="8.78" height="1.5" fill="#37304f"/>
<rect x="549.18" y="160.50" width="8.78" height="1.5" fill="#37304f"/>
<rect x="988.41" y="160.50" width="8.78" height="1.5" fill="#37304f"/>
<rect x="1164.11" y="160.50" width="8.78" height="1.5" fill="#37304f"/>
<line x1="549.18" y1="237.00" x2="549.18" y2="261.0" stroke="#0e1012" stroke-width="0.55" stroke-opacity="0.8"/>
<line x1="566.75" y1="237.00" x2="566.75" y2="261.0" stroke="#0e1012" stroke-width="0.55" stroke-opacity="0.8"/>
<line x1="575.53" y1="237.00" x2="575.53" y2="261.0" stroke="#0e1012" stroke-width="0.55" stroke-opacity="0.8"/>
<line x1="593.10" y1="237.00" x2="593.10" y2="261.0" stroke="#0e1012" stroke-width="0.55" stroke-opacity="0.8"/>
<line x1="610.67" y1="237.00" x2="610.67" y2="261.0" stroke="#0e1012" stroke-width="0.55" stroke-opacity="0.8"/>
<line x1="628.24" y1="237.00" x2="628.24" y2="261.0" stroke="#0e1012" stroke-width="0.55" stroke-opacity="0.8"/>
<line x1="637.02" y1="237.00" x2="637.02" y2="261.0" stroke="#0e1012" stroke-width="0.55" stroke-opacity="0.8"/>
<line x1="654.59" y1="237.00" x2="654.59" y2="261.0" stroke="#0e1012" stroke-width="0.55" stroke-opacity="0.8"/>
<line x1="672.16" y1="237.00" x2="672.16" y2="261.0" stroke="#0e1012" stroke-width="0.55" stroke-opacity="0.8"/>
<line x1="689.73" y1="237.00" x2="689.73" y2="261.0" stroke="#0e1012" stroke-width="0.55" stroke-opacity="0.8"/>
<line x1="698.52" y1="237.00" x2="698.52" y2="261.0" stroke="#0e1012" stroke-width="0.55" stroke-opacity="0.8"/>
<line x1="716.09" y1="237.00" x2="716.09" y2="261.0" stroke="#0e1012" stroke-width="0.55" stroke-opacity="0.8"/>
<line x1="733.66" y1="237.00" x2="733.66" y2="261.0" stroke="#0e1012" stroke-width="0.55" stroke-opacity="0.8"/>
<line x1="751.23" y1="237.00" x2="751.23" y2="261.0" stroke="#0e1012" stroke-width="0.55" stroke-opacity="0.8"/>
<line x1="760.01" y1="237.00" x2="760.01" y2="261.0" stroke="#0e1012" stroke-width="0.55" stroke-opacity="0.8"/>
<line x1="777.58" y1="237.00" x2="777.58" y2="261.0" stroke="#0e1012" stroke-width="0.55" stroke-opacity="0.8"/>
<line x1="795.15" y1="237.00" x2="795.15" y2="261.0" stroke="#0e1012" stroke-width="0.55" stroke-opacity="0.8"/>
<line x1="812.72" y1="237.00" x2="812.72" y2="261.0" stroke="#0e1012" stroke-width="0.55" stroke-opacity="0.8"/>
<line x1="821.50" y1="237.00" x2="821.50" y2="261.0" stroke="#0e1012" stroke-width="0.55" stroke-opacity="0.8"/>
<line x1="839.07" y1="237.00" x2="839.07" y2="261.0" stroke="#0e1012" stroke-width="0.55" stroke-opacity="0.8"/>
<line x1="856.64" y1="237.00" x2="856.64" y2="261.0" stroke="#0e1012" stroke-width="0.55" stroke-opacity="0.8"/>
<line x1="874.21" y1="237.00" x2="874.21" y2="261.0" stroke="#0e1012" stroke-width="0.55" stroke-opacity="0.8"/>
<line x1="883.00" y1="237.00" x2="883.00" y2="261.0" stroke="#0e1012" stroke-width="0.55" stroke-opacity="0.8"/>
<line x1="900.57" y1="237.00" x2="900.57" y2="261.0" stroke="#0e1012" stroke-width="0.55" stroke-opacity="0.8"/>
<line x1="918.14" y1="237.00" x2="918.14" y2="261.0" stroke="#0e1012" stroke-width="0.55" stroke-opacity="0.8"/>
<line x1="935.70" y1="237.00" x2="935.70" y2="261.0" stroke="#0e1012" stroke-width="0.55" stroke-opacity="0.8"/>
<line x1="944.49" y1="237.00" x2="944.49" y2="261.0" stroke="#0e1012" stroke-width="0.55" stroke-opacity="0.8"/>
<line x1="962.06" y1="237.00" x2="962.06" y2="261.0" stroke="#0e1012" stroke-width="0.55" stroke-opacity="0.8"/>
<line x1="979.63" y1="237.00" x2="979.63" y2="261.0" stroke="#0e1012" stroke-width="0.55" stroke-opacity="0.8"/>
<line x1="997.20" y1="237.00" x2="997.20" y2="261.0" stroke="#0e1012" stroke-width="0.55" stroke-opacity="0.8"/>
<line x1="1005.98" y1="237.00" x2="1005.98" y2="261.0" stroke="#0e1012" stroke-width="0.55" stroke-opacity="0.8"/>
<line x1="1023.55" y1="237.00" x2="1023.55" y2="261.0" stroke="#0e1012" stroke-width="0.55" stroke-opacity="0.8"/>
<line x1="1041.12" y1="237.00" x2="1041.12" y2="261.0" stroke="#0e1012" stroke-width="0.55" stroke-opacity="0.8"/>
<line x1="1058.69" y1="237.00" x2="1058.69" y2="261.0" stroke="#0e1012" stroke-width="0.55" stroke-opacity="0.8"/>
<line x1="1067.48" y1="237.00" x2="1067.48" y2="261.0" stroke="#0e1012" stroke-width="0.55" stroke-opacity="0.8"/>
<line x1="1085.05" y1="237.00" x2="1085.05" y2="261.0" stroke="#0e1012" stroke-width="0.55" stroke-opacity="0.8"/>
<line x1="1102.61" y1="237.00" x2="1102.61" y2="261.0" stroke="#0e1012" stroke-width="0.55" stroke-opacity="0.8"/>
<line x1="1120.18" y1="237.00" x2="1120.18" y2="261.0" stroke="#0e1012" stroke-width="0.55" stroke-opacity="0.8"/>
<line x1="1128.97" y1="237.00" x2="1128.97" y2="261.0" stroke="#0e1012" stroke-width="0.55" stroke-opacity="0.8"/>
<line x1="1146.54" y1="237.00" x2="1146.54" y2="261.0" stroke="#0e1012" stroke-width="0.55" stroke-opacity="0.8"/>
<line x1="1164.11" y1="237.00" x2="1164.11" y2="261.0" stroke="#0e1012" stroke-width="0.55" stroke-opacity="0.8"/>
<line x1="1181.68" y1="237.00" x2="1181.68" y2="261.0" stroke="#0e1012" stroke-width="0.55" stroke-opacity="0.8"/>
<line x1="1190.46" y1="237.00" x2="1190.46" y2="261.0" stroke="#0e1012" stroke-width="0.55" stroke-opacity="0.8"/>
<line x1="1208.03" y1="237.00" x2="1208.03" y2="261.0" stroke="#0e1012" stroke-width="0.55" stroke-opacity="0.8"/>
<line x1="1225.60" y1="237.00" x2="1225.60" y2="261.0" stroke="#0e1012" stroke-width="0.55" stroke-opacity="0.8"/>
<line x1="1243.17" y1="237.00" x2="1243.17" y2="261.0" stroke="#0e1012" stroke-width="0.55" stroke-opacity="0.8"/>
<line x1="1251.95" y1="237.00" x2="1251.95" y2="261.0" stroke="#0e1012" stroke-width="0.55" stroke-opacity="0.8"/>
<line x1="536.0" y1="253.40" x2="1260.74" y2="253.40" stroke="#0e1012" stroke-width="0.6" stroke-opacity="0.85"/>
<line x1="536.0" y1="262.0" x2="1801.0" y2="262.0" stroke="#8a8a8a" stroke-width="1" stroke-dasharray="1.5 1.5"/>
<line x1="536.0" y1="119.0" x2="536.0" y2="262.5" stroke="#6e6e6e" stroke-width="1"/>
<line x1="526.3" y1="123.5" x2="536.0" y2="123.5" stroke="#15171b" stroke-width="1"/>
<text x="520.8" y="127.40" text-anchor="end" font-family="Liberation Mono" font-size="12" fill="#7b7c80">600</text>
<line x1="526.3" y1="169.4" x2="536.0" y2="169.4" stroke="#15171b" stroke-width="1"/>
<text x="520.8" y="173.30" text-anchor="end" font-family="Liberation Mono" font-size="12" fill="#7b7c80">400</text>
<line x1="526.3" y1="215.25" x2="536.0" y2="215.25" stroke="#15171b" stroke-width="1"/>
<text x="520.8" y="219.15" text-anchor="end" font-family="Liberation Mono" font-size="12" fill="#7b7c80">200</text>
<line x1="526.3" y1="261.0" x2="536.0" y2="261.0" stroke="#15171b" stroke-width="1"/>
<text x="520.8" y="264.90" text-anchor="end" font-family="Liberation Mono" font-size="12" fill="#7b7c80">0</text>
<line x1="536.00" y1="262.5" x2="536.00" y2="271.0" stroke="#15171b" stroke-width="1"/>
<text x="536.00" y="286.8" text-anchor="middle" font-family="Liberation Mono" font-size="12" fill="#7b7c80">10:00pm</text>
<line x1="588.71" y1="262.5" x2="588.71" y2="271.0" stroke="#15171b" stroke-width="1"/>
<text x="588.71" y="286.8" text-anchor="middle" font-family="Liberation Mono" font-size="12" fill="#7b7c80">10:30pm</text>
<line x1="641.42" y1="262.5" x2="641.42" y2="271.0" stroke="#15171b" stroke-width="1"/>
<text x="641.42" y="286.8" text-anchor="middle" font-family="Liberation Mono" font-size="12" fill="#7b7c80">11:00pm</text>
<line x1="694.12" y1="262.5" x2="694.12" y2="271.0" stroke="#15171b" stroke-width="1"/>
<text x="694.12" y="286.8" text-anchor="middle" font-family="Liberation Mono" font-size="12" fill="#7b7c80">11:30pm</text>
<line x1="746.83" y1="262.5" x2="746.83" y2="271.0" stroke="#15171b" stroke-width="1"/>
<text x="746.83" y="286.8" text-anchor="middle" font-family="Liberation Mono" font-size="12" fill="#7b7c80">12:00am</text>
<line x1="799.54" y1="262.5" x2="799.54" y2="271.0" stroke="#15171b" stroke-width="1"/>
<text x="799.54" y="286.8" text-anchor="middle" font-family="Liberation Mono" font-size="12" fill="#7b7c80">12:30am</text>
<line x1="852.25" y1="262.5" x2="852.25" y2="271.0" stroke="#15171b" stroke-width="1"/>
<text x="852.25" y="286.8" text-anchor="middle" font-family="Liberation Mono" font-size="12" fill="#7b7c80">1:00am</text>
<line x1="904.96" y1="262.5" x2="904.96" y2="271.0" stroke="#15171b" stroke-width="1"/>
<text x="904.96" y="286.8" text-anchor="middle" font-family="Liberation Mono" font-size="12" fill="#7b7c80">1:30am</text>
<line x1="957.66" y1="262.5" x2="957.66" y2="271.0" stroke="#15171b" stroke-width="1"/>
<text x="957.66" y="286.8" text-anchor="middle" font-family="Liberation Mono" font-size="12" fill="#7b7c80">2:00am</text>
<line x1="1010.37" y1="262.5" x2="1010.37" y2="271.0" stroke="#15171b" stroke-width="1"/>
<text x="1010.37" y="286.8" text-anchor="middle" font-family="Liberation Mono" font-size="12" fill="#7b7c80">2:30am</text>
<line x1="1063.08" y1="262.5" x2="1063.08" y2="271.0" stroke="#15171b" stroke-width="1"/>
<text x="1063.08" y="286.8" text-anchor="middle" font-family="Liberation Mono" font-size="12" fill="#7b7c80">3:00am</text>
<line x1="1115.79" y1="262.5" x2="1115.79" y2="271.0" stroke="#15171b" stroke-width="1"/>
<text x="1115.79" y="286.8" text-anchor="middle" font-family="Liberation Mono" font-size="12" fill="#7b7c80">3:30am</text>
<line x1="1168.50" y1="262.5" x2="1168.50" y2="271.0" stroke="#15171b" stroke-width="1"/>
<text x="1168.50" y="286.8" text-anchor="middle" font-family="Liberation Mono" font-size="12" fill="#7b7c80">4:00am</text>
<line x1="1221.20" y1="262.5" x2="1221.20" y2="271.0" stroke="#15171b" stroke-width="1"/>
<text x="1221.20" y="286.8" text-anchor="middle" font-family="Liberation Mono" font-size="12" fill="#7b7c80">4:30am</text>
<line x1="1273.91" y1="262.5" x2="1273.91" y2="271.0" stroke="#15171b" stroke-width="1"/>
<text x="1273.91" y="286.8" text-anchor="middle" font-family="Liberation Mono" font-size="12" fill="#7b7c80">5:00am</text>
<line x1="1326.62" y1="262.5" x2="1326.62" y2="271.0" stroke="#15171b" stroke-width="1"/>
<text x="1326.62" y="286.8" text-anchor="middle" font-family="Liberation Mono" font-size="12" fill="#7b7c80">5:30am</text>
<line x1="1379.33" y1="262.5" x2="1379.33" y2="271.0" stroke="#15171b" stroke-width="1"/>
<text x="1379.33" y="286.8" text-anchor="middle" font-family="Liberation Mono" font-size="12" fill="#7b7c80">6:00am</text>
<line x1="1432.04" y1="262.5" x2="1432.04" y2="271.0" stroke="#15171b" stroke-width="1"/>
<text x="1432.04" y="286.8" text-anchor="middle" font-family="Liberation Mono" font-size="12" fill="#7b7c80">6:30am</text>
<line x1="1484.74" y1="262.5" x2="1484.74" y2="271.0" stroke="#15171b" stroke-width="1"/>
<text x="1484.74" y="286.8" text-anchor="middle" font-family="Liberation Mono" font-size="12" fill="#7b7c80">7:00am</text>
<line x1="1537.45" y1="262.5" x2="1537.45" y2="271.0" stroke="#15171b" stroke-width="1"/>
<text x="1537.45" y="286.8" text-anchor="middle" font-family="Liberation Mono" font-size="12" fill="#7b7c80">7:30am</text>
<line x1="1590.16" y1="262.5" x2="1590.16" y2="271.0" stroke="#15171b" stroke-width="1"/>
<text x="1590.16" y="286.8" text-anchor="middle" font-family="Liberation Mono" font-size="12" fill="#7b7c80">8:00am</text>
<line x1="1642.87" y1="262.5" x2="1642.87" y2="271.0" stroke="#15171b" stroke-width="1"/>
<text x="1642.87" y="286.8" text-anchor="middle" font-family="Liberation Mono" font-size="12" fill="#7b7c80">8:30am</text>
<line x1="1695.58" y1="262.5" x2="1695.58" y2="271.0" stroke="#15171b" stroke-width="1"/>
<text x="1695.58" y="286.8" text-anchor="middle" font-family="Liberation Mono" font-size="12" fill="#7b7c80">9:00am</text>
<line x1="1748.28" y1="262.5" x2="1748.28" y2="271.0" stroke="#15171b" stroke-width="1"/>
<text x="1748.28" y="286.8" text-anchor="middle" font-family="Liberation Mono" font-size="12" fill="#7b7c80">9:30am</text>
<line x1="1800.99" y1="262.5" x2="1800.99" y2="271.0" stroke="#15171b" stroke-width="1"/>
<text x="1800.99" y="286.8" text-anchor="middle" font-family="Liberation Mono" font-size="12" fill="#7b7c80">10:00am</text>
<text x="536" y="304.75" text-anchor="middle" font-family="Liberation Mono" font-size="12" fill="#7b7c80">9/14/25</text>
<text x="746.75" y="304.75" text-anchor="middle" font-family="Liberation Mono" font-size="12" fill="#7b7c80">9/15</text>
<rect x="536.5" y="165.9" width="740" height="80.6" fill="#4ade80" fill-opacity="0.055" stroke="#4ff07e" stroke-width="1"/>
</svg>
<div class="b" style="left:536.50px;top:133.50px;width:154.00px;height:27.00px;background:#1b1e26;border:1px solid #5d6271;border-radius:3px"></div>
<div class="t" style="top:139.81px;font-size:12px;line-height:17.00px;color:#e2e4e9;font-family:'Liberation Mono', monospace;font-weight:400;left:545.60px;">Filter by Selection</div>
<div class="b" style="left:1608.00px;top:312.10px;width:21.90px;height:21.70px;background:#202126;border:1px solid #2d2e33;border-radius:2.5px"></div>
<svg style="left:1615.5px;top:318.5px" width="7" height="10" viewBox="0 0 7 10" fill="none" stroke="#6b6c72" stroke-width="1"><path d="M5.2 1.8 L2 5 L5.2 8.2"/></svg>
<div class="b" style="left:1637.90px;top:312.10px;width:21.90px;height:21.70px;background:#0fc08a;border-radius:2.5px"></div>
<div class="t" style="top:314.07px;font-size:12.5px;line-height:18.00px;color:#ffffff;font-family:'Liberation Sans', sans-serif;font-weight:400;left:1248.85px;width:800px;text-align:center;">1</div>
<div class="b" style="left:1668.00px;top:312.10px;width:21.90px;height:21.70px;background:#25262b;border:1px solid #393a40;border-radius:2.5px"></div>
<div class="t" style="top:314.07px;font-size:12.5px;line-height:18.00px;color:#d0d1d5;font-family:'Liberation Sans', sans-serif;font-weight:400;left:1278.95px;width:800px;text-align:center;">2</div>
<div class="b" style="left:1698.00px;top:312.10px;width:21.90px;height:21.70px;background:#25262b;border:1px solid #393a40;border-radius:2.5px"></div>
<div class="t" style="top:314.07px;font-size:12.5px;line-height:18.00px;color:#d0d1d5;font-family:'Liberation Sans', sans-serif;font-weight:400;left:1308.95px;width:800px;text-align:center;">3</div>
<div class="b" style="left:1728.00px;top:312.10px;width:21.90px;height:21.70px;background:#25262b;border:1px solid #393a40;border-radius:2.5px"></div>
<div class="t" style="top:314.07px;font-size:12.5px;line-height:18.00px;color:#d0d1d5;font-family:'Liberation Sans', sans-serif;font-weight:400;left:1338.95px;width:800px;text-align:center;">4</div>
<div class="b" style="left:1758.00px;top:312.10px;width:21.90px;height:21.70px;background:#25262b;border:1px solid #393a40;border-radius:2.5px"></div>
<div class="t" style="top:314.07px;font-size:12.5px;line-height:18.00px;color:#d0d1d5;font-family:'Liberation Sans', sans-serif;font-weight:400;left:1368.95px;width:800px;text-align:center;">5</div>
<div class="b" style="left:1788.00px;top:312.10px;width:21.90px;height:21.70px;background:#25262b;border:1px solid #393a40;border-radius:2.5px"></div>
<svg style="left:1795.5px;top:318.5px" width="7" height="10" viewBox="0 0 7 10" fill="none" stroke="#d0d1d5" stroke-width="1"><path d="M1.8 1.8 L5 5 L1.8 8.2"/></svg>
<svg style="left:0;top:0" width="1826" height="1150" viewBox="0 0 1826 1150">
<rect x="546.00" y="367" width="93.33" height="90" fill="#3f4045"/>
<rect x="593.67" y="442.96" width="36.33" height="14.04" fill="#10dba1"/>
<rect x="648.67" y="450.97" width="36.33" height="6.03" fill="#f6175b"/>
<rect x="687.00" y="424.96" width="36.33" height="32.04" fill="#10dba1"/>
<rect x="742.00" y="373.03" width="36.33" height="83.97" fill="#f6175b"/>
<rect x="780.33" y="412.90" width="36.33" height="44.10" fill="#10dba1"/>
<path d="M546 367 V457 M540 457 H826" stroke="#777777" stroke-width="1" fill="none"/>
<path d="M540 457.00 H546" stroke="#777777" stroke-width="1"/>
<text x="538.1" y="460.90" text-anchor="end" font-family="Liberation Mono" font-size="11" fill="#79797d">0</text>
<path d="M540 434.50 H546" stroke="#777777" stroke-width="1"/>
<text x="538.1" y="438.40" text-anchor="end" font-family="Liberation Mono" font-size="11" fill="#79797d">25</text>
<path d="M540 412.00 H546" stroke="#777777" stroke-width="1"/>
<text x="538.1" y="415.90" text-anchor="end" font-family="Liberation Mono" font-size="11" fill="#79797d">50</text>
<path d="M540 367.00 H546" stroke="#777777" stroke-width="1"/>
<text x="538.1" y="379.25" text-anchor="end" font-family="Liberation Mono" font-size="11" fill="#79797d">100</text>
<path d="M779.33 457 V462.5" stroke="#777777" stroke-width="1"/>
<text x="656" y="362.55" text-anchor="middle" font-family="Liberation Mono" font-size="12" fill="#b1b2b7">SpanName</text>
<rect x="916.00" y="450.97" width="55.00" height="6.03" fill="#f6175b"/>
<rect x="973.00" y="410.92" width="55.00" height="46.08" fill="#10dba1"/>
<rect x="1056.00" y="373.03" width="55.00" height="83.97" fill="#f6175b"/>
<rect x="1113.00" y="412.99" width="55.00" height="44.01" fill="#10dba1"/>
<path d="M902 367 V457 M896 457 H1182" stroke="#777777" stroke-width="1" fill="none"/>
<path d="M896 457.00 H902" stroke="#777777" stroke-width="1"/>
<text x="894.1" y="460.90" text-anchor="end" font-family="Liberation Mono" font-size="11" fill="#79797d">0</text>
<path d="M896 434.50 H902" stroke="#777777" stroke-width="1"/>
<text x="894.1" y="438.40" text-anchor="end" font-family="Liberation Mono" font-size="11" fill="#79797d">25</text>
<path d="M896 412.00 H902" stroke="#777777" stroke-width="1"/>
<text x="894.1" y="415.90" text-anchor="end" font-family="Liberation Mono" font-size="11" fill="#79797d">50</text>
<path d="M896 367.00 H902" stroke="#777777" stroke-width="1"/>
<text x="894.1" y="379.25" text-anchor="end" font-family="Liberation Mono" font-size="11" fill="#79797d">100</text>
<path d="M972.00 457 V462.5" stroke="#777777" stroke-width="1"/>
<path d="M1112.00 457 V462.5" stroke="#777777" stroke-width="1"/>
<text x="972.00" y="471.75" text-anchor="middle" font-family="Liberation Mono" font-size="10" fill="#79797d">Internal</text>
<text x="1112.00" y="471.75" text-anchor="middle" font-family="Liberation Mono" font-size="10" fill="#79797d">Server</text>
<text x="1012" y="362.55" text-anchor="middle" font-family="Liberation Mono" font-size="12" fill="#b1b2b7">SpanKind</text>
<rect x="1305.67" y="442.96" width="36.33" height="14.04" fill="#10dba1"/>
<rect x="1360.67" y="373.03" width="36.33" height="83.97" fill="#f6175b"/>
<rect x="1399.00" y="412.90" width="36.33" height="44.10" fill="#10dba1"/>
<rect x="1454.00" y="450.88" width="36.33" height="6.12" fill="#f6175b"/>
<rect x="1492.33" y="424.96" width="36.33" height="32.04" fill="#10dba1"/>
<path d="M1258 367 V457 M1252 457 H1538" stroke="#777777" stroke-width="1" fill="none"/>
<path d="M1252 457.00 H1258" stroke="#777777" stroke-width="1"/>
<text x="1250.1" y="460.90" text-anchor="end" font-family="Liberation Mono" font-size="11" fill="#79797d">0</text>
<path d="M1252 434.50 H1258" stroke="#777777" stroke-width="1"/>
<text x="1250.1" y="438.40" text-anchor="end" font-family="Liberation Mono" font-size="11" fill="#79797d">25</text>
<path d="M1252 412.00 H1258" stroke="#777777" stroke-width="1"/>
<text x="1250.1" y="415.90" text-anchor="end" font-family="Liberation Mono" font-size="11" fill="#79797d">50</text>
<path d="M1252 367.00 H1258" stroke="#777777" stroke-width="1"/>
<text x="1250.1" y="379.25" text-anchor="end" font-family="Liberation Mono" font-size="11" fill="#79797d">100</text>
<path d="M1304.67 457 V462.5" stroke="#777777" stroke-width="1"/>
<path d="M1491.33 457 V462.5" stroke="#777777" stroke-width="1"/>
<text x="1304.67" y="471.75" text-anchor="middle" font-family="Liberation Mono" font-size="10" fill="#79797d">@hyperdx/instrumentation-exception</text>
<text x="1491.33" y="471.75" text-anchor="middle" font-family="Liberation Mono" font-size="10" fill="#79797d">payment</text>
<text x="1368" y="362.55" text-anchor="middle" font-family="Liberation Mono" font-size="12" fill="#b1b2b7">ScopeName</text>
<rect x="555.33" y="586.88" width="36.33" height="6.12" fill="#f6175b"/>
<rect x="593.67" y="563.30" width="36.33" height="29.70" fill="#10dba1"/>
<rect x="687.00" y="578.96" width="36.33" height="14.04" fill="#10dba1"/>
<rect x="742.00" y="509.03" width="36.33" height="83.97" fill="#f6175b"/>
<rect x="780.33" y="546.20" width="36.33" height="46.80" fill="#10dba1"/>
<path d="M546 503 V593 M540 593 H826" stroke="#777777" stroke-width="1" fill="none"/>
<path d="M540 593.00 H546" stroke="#777777" stroke-width="1"/>
<text x="538.1" y="596.90" text-anchor="end" font-family="Liberation Mono" font-size="11" fill="#79797d">0</text>
<path d="M540 570.50 H546" stroke="#777777" stroke-width="1"/>
<text x="538.1" y="574.40" text-anchor="end" font-family="Liberation Mono" font-size="11" fill="#79797d">25</text>
<path d="M540 548.00 H546" stroke="#777777" stroke-width="1"/>
<text x="538.1" y="551.90" text-anchor="end" font-family="Liberation Mono" font-size="11" fill="#79797d">50</text>
<path d="M540 503.00 H546" stroke="#777777" stroke-width="1"/>
<text x="538.1" y="515.25" text-anchor="end" font-family="Liberation Mono" font-size="11" fill="#79797d">100</text>
<path d="M592.67 593 V598.5" stroke="#777777" stroke-width="1"/>
<path d="M686.00 593 V598.5" stroke="#777777" stroke-width="1"/>
<path d="M779.33 593 V598.5" stroke="#777777" stroke-width="1"/>
<text x="686.00" y="607.75" text-anchor="middle" font-family="Liberation Mono" font-size="10" fill="#79797d">0.1.0</text>
<text x="779.33" y="607.75" text-anchor="middle" font-family="Liberation Mono" font-size="10" fill="#79797d">0.51.1</text>
<text x="656" y="498.55" text-anchor="middle" font-family="Liberation Mono" font-size="12" fill="#b1b2b7">ScopeVersion</text>
<rect x="916.00" y="503.00" width="55.00" height="90.00" fill="#f6175b"/>
<rect x="973.00" y="539.00" width="55.00" height="54.00" fill="#10dba1"/>
<rect x="1113.00" y="557.00" width="55.00" height="36.00" fill="#10dba1"/>
<path d="M902 503 V593 M896 593 H1182" stroke="#777777" stroke-width="1" fill="none"/>
<path d="M896 593.00 H902" stroke="#777777" stroke-width="1"/>
<text x="894.1" y="596.90" text-anchor="end" font-family="Liberation Mono" font-size="11" fill="#79797d">0</text>
<path d="M896 570.50 H902" stroke="#777777" stroke-width="1"/>
<text x="894.1" y="574.40" text-anchor="end" font-family="Liberation Mono" font-size="11" fill="#79797d">25</text>
<path d="M896 548.00 H902" stroke="#777777" stroke-width="1"/>
<text x="894.1" y="551.90" text-anchor="end" font-family="Liberation Mono" font-size="11" fill="#79797d">50</text>
<path d="M896 503.00 H902" stroke="#777777" stroke-width="1"/>
<text x="894.1" y="515.25" text-anchor="end" font-family="Liberation Mono" font-size="11" fill="#79797d">100</text>
<path d="M1112.00 593 V598.5" stroke="#777777" stroke-width="1"/>
<text x="1182.5" y="607.75" text-anchor="end" font-family="Liberation Mono" font-size="10" fill="#79797d">payment-7985c8969c-mwmw7</text>
<text x="1012" y="498.55" text-anchor="middle" font-family="Liberation Mono" font-size="12" fill="#b1b2b7">ResourceAttributes.host.name</text>
<rect x="1272.00" y="503.00" width="55.00" height="90.00" fill="#f6175b"/>
<rect x="1329.00" y="539.00" width="55.00" height="54.00" fill="#10dba1"/>
<rect x="1469.00" y="557.00" width="55.00" height="36.00" fill="#10dba1"/>
<path d="M1258 503 V593 M1252 593 H1538" stroke="#777777" stroke-width="1" fill="none"/>
<path d="M1252 593.00 H1258" stroke="#777777" stroke-width="1"/>
<text x="1250.1" y="596.90" text-anchor="end" font-family="Liberation Mono" font-size="11" fill="#79797d">0</text>
<path d="M1252 570.50 H1258" stroke="#777777" stroke-width="1"/>
<text x="1250.1" y="574.40" text-anchor="end" font-family="Liberation Mono" font-size="11" fill="#79797d">25</text>
<path d="M1252 548.00 H1258" stroke="#777777" stroke-width="1"/>
<text x="1250.1" y="551.90" text-anchor="end" font-family="Liberation Mono" font-size="11" fill="#79797d">50</text>
<path d="M1252 503.00 H1258" stroke="#777777" stroke-width="1"/>
<text x="1250.1" y="515.25" text-anchor="end" font-family="Liberation Mono" font-size="11" fill="#79797d">100</text>
<path d="M1468.00 593 V598.5" stroke="#777777" stroke-width="1"/>
<text x="1538.5" y="607.75" text-anchor="end" font-family="Liberation Mono" font-size="10" fill="#79797d">payment-7985c8969c-mwmw7</text>
<text x="1368" y="498.55" text-anchor="middle" font-family="Liberation Mono" font-size="12" fill="#b1b2b7">ResourceAttributes.k8s.pod.name</text>
<rect x="560.00" y="639.00" width="55.00" height="90.00" fill="#f6175b"/>
<rect x="617.00" y="675.00" width="55.00" height="54.00" fill="#10dba1"/>
<rect x="757.00" y="693.00" width="55.00" height="36.00" fill="#10dba1"/>
<path d="M546 639 V729 M540 729 H826" stroke="#777777" stroke-width="1" fill="none"/>
<path d="M540 729.00 H546" stroke="#777777" stroke-width="1"/>
<text x="538.1" y="732.90" text-anchor="end" font-family="Liberation Mono" font-size="11" fill="#79797d">0</text>
<path d="M540 706.50 H546" stroke="#777777" stroke-width="1"/>
<text x="538.1" y="710.40" text-anchor="end" font-family="Liberation Mono" font-size="11" fill="#79797d">25</text>
<path d="M540 684.00 H546" stroke="#777777" stroke-width="1"/>
<text x="538.1" y="687.90" text-anchor="end" font-family="Liberation Mono" font-size="11" fill="#79797d">50</text>
<path d="M540 639.00 H546" stroke="#777777" stroke-width="1"/>
<text x="538.1" y="651.25" text-anchor="end" font-family="Liberation Mono" font-size="11" fill="#79797d">100</text>
<path d="M756.00 729 V734.5" stroke="#777777" stroke-width="1"/>
<text x="826.5" y="743.75" text-anchor="end" font-family="Liberation Mono" font-size="10" fill="#79797d">5e02b5fb-13ae-4296-bbbc-111f423c460d</text>
<text x="656" y="634.55" text-anchor="middle" font-family="Liberation Mono" font-size="12" fill="#b1b2b7">ResourceAttributes.k8s.pod.uid</text>
<rect x="973.00" y="693.00" width="55.00" height="36.00" fill="#10dba1"/>
<rect x="1056.00" y="639.00" width="55.00" height="90.00" fill="#f6175b"/>
<rect x="1113.00" y="675.00" width="55.00" height="54.00" fill="#10dba1"/>
<path d="M902 639 V729 M896 729 H1182" stroke="#777777" stroke-width="1" fill="none"/>
<path d="M896 729.00 H902" stroke="#777777" stroke-width="1"/>
<text x="894.1" y="732.90" text-anchor="end" font-family="Liberation Mono" font-size="11" fill="#79797d">0</text>
<path d="M896 706.50 H902" stroke="#777777" stroke-width="1"/>
<text x="894.1" y="710.40" text-anchor="end" font-family="Liberation Mono" font-size="11" fill="#79797d">25</text>
<path d="M896 684.00 H902" stroke="#777777" stroke-width="1"/>
<text x="894.1" y="687.90" text-anchor="end" font-family="Liberation Mono" font-size="11" fill="#79797d">50</text>
<path d="M896 639.00 H902" stroke="#777777" stroke-width="1"/>
<text x="894.1" y="651.25" text-anchor="end" font-family="Liberation Mono" font-size="11" fill="#79797d">100</text>
<path d="M1112.00 729 V734.5" stroke="#777777" stroke-width="1"/>
<text x="1182.5" y="743.75" text-anchor="end" font-family="Liberation Mono" font-size="10" fill="#79797d">f5344ec9-a1ea-4290-a62a-78f5bee8d90b</text>
<text x="1012" y="634.55" text-anchor="middle" font-family="Liberation Mono" font-size="12" fill="#b1b2b7">ResourceAttribu..ice.instance.id</text>
<rect x="1272.00" y="727.83" width="55.00" height="1.17" fill="#f6175b"/>
<rect x="1329.00" y="697.50" width="55.00" height="31.50" fill="#10dba1"/>
<rect x="1412.00" y="639.90" width="55.00" height="89.10" fill="#f6175b"/>
<rect x="1469.00" y="670.50" width="55.00" height="58.50" fill="#10dba1"/>
<path d="M1258 639 V729 M1252 729 H1538" stroke="#777777" stroke-width="1" fill="none"/>
<path d="M1252 729.00 H1258" stroke="#777777" stroke-width="1"/>
<text x="1250.1" y="732.90" text-anchor="end" font-family="Liberation Mono" font-size="11" fill="#79797d">0</text>
<path d="M1252 706.50 H1258" stroke="#777777" stroke-width="1"/>
<text x="1250.1" y="710.40" text-anchor="end" font-family="Liberation Mono" font-size="11" fill="#79797d">25</text>
<path d="M1252 684.00 H1258" stroke="#777777" stroke-width="1"/>
<text x="1250.1" y="687.90" text-anchor="end" font-family="Liberation Mono" font-size="11" fill="#79797d">50</text>
<path d="M1252 639.00 H1258" stroke="#777777" stroke-width="1"/>
<text x="1250.1" y="651.25" text-anchor="end" font-family="Liberation Mono" font-size="11" fill="#79797d">100</text>
<path d="M1328.00 729 V734.5" stroke="#777777" stroke-width="1"/>
<path d="M1468.00 729 V734.5" stroke="#777777" stroke-width="1"/>
<text x="1328.00" y="743.75" text-anchor="middle" font-family="Liberation Mono" font-size="10" fill="#79797d">mastercard</text>
<text x="1468.00" y="743.75" text-anchor="middle" font-family="Liberation Mono" font-size="10" fill="#79797d">visa</text>
<text x="1368" y="634.55" text-anchor="middle" font-family="Liberation Mono" font-size="12" fill="#b1b2b7">SpanAttributes...yment.card_type</text>
<rect x="617.00" y="850.96" width="55.00" height="14.04" fill="#10dba1"/>
<rect x="700.00" y="775.00" width="55.00" height="90.00" fill="#f6175b"/>
<rect x="757.00" y="789.40" width="55.00" height="75.60" fill="#10dba1"/>
<path d="M546 775 V865 M540 865 H826" stroke="#777777" stroke-width="1" fill="none"/>
<path d="M540 865.00 H546" stroke="#777777" stroke-width="1"/>
<text x="538.1" y="868.90" text-anchor="end" font-family="Liberation Mono" font-size="11" fill="#79797d">0</text>
<path d="M540 842.50 H546" stroke="#777777" stroke-width="1"/>
<text x="538.1" y="846.40" text-anchor="end" font-family="Liberation Mono" font-size="11" fill="#79797d">25</text>
<path d="M540 820.00 H546" stroke="#777777" stroke-width="1"/>
<text x="538.1" y="823.90" text-anchor="end" font-family="Liberation Mono" font-size="11" fill="#79797d">50</text>
<path d="M540 775.00 H546" stroke="#777777" stroke-width="1"/>
<text x="538.1" y="787.25" text-anchor="end" font-family="Liberation Mono" font-size="11" fill="#79797d">100</text>
<path d="M616.00 865 V870.5" stroke="#777777" stroke-width="1"/>
<path d="M756.00 865 V870.5" stroke="#777777" stroke-width="1"/>
<text x="616.00" y="879.75" text-anchor="middle" font-family="Liberation Mono" font-size="10" fill="#79797d">Error</text>
<text x="756.00" y="879.75" text-anchor="middle" font-family="Liberation Mono" font-size="10" fill="#79797d">Unset</text>
<text x="656" y="770.55" text-anchor="middle" font-family="Liberation Mono" font-size="12" fill="#b1b2b7">StatusCode</text>
<path d="M902 775 V865 M896 865 H1182" stroke="#777777" stroke-width="1" fill="none"/>
<path d="M896 865.00 H902" stroke="#777777" stroke-width="1"/>
<text x="894.1" y="868.90" text-anchor="end" font-family="Liberation Mono" font-size="11" fill="#79797d">0</text>
<path d="M896 842.50 H902" stroke="#777777" stroke-width="1"/>
<text x="894.1" y="846.40" text-anchor="end" font-family="Liberation Mono" font-size="11" fill="#79797d">4</text>
<path d="M896 820.00 H902" stroke="#777777" stroke-width="1"/>
<text x="894.1" y="823.90" text-anchor="end" font-family="Liberation Mono" font-size="11" fill="#79797d">8</text>
<path d="M896 775.00 H902" stroke="#777777" stroke-width="1"/>
<text x="894.1" y="787.25" text-anchor="end" font-family="Liberation Mono" font-size="11" fill="#79797d">16</text>
<path d="M902.00 865 V870.5" stroke="#777777" stroke-width="1"/>
<path d="M935.50 865 V870.5" stroke="#777777" stroke-width="1"/>
<path d="M983.00 865 V870.5" stroke="#777777" stroke-width="1"/>
<path d="M1027.00 865 V870.5" stroke="#777777" stroke-width="1"/>
<path d="M1068.50 865 V870.5" stroke="#777777" stroke-width="1"/>
<path d="M1110.75 865 V870.5" stroke="#777777" stroke-width="1"/>
<path d="M1181.50 865 V870.5" stroke="#777777" stroke-width="1"/>
<text x="902.00" y="879.75" text-anchor="middle" font-family="Liberation Mono" font-size="10" fill="#79797d">0</text>
<text x="935.50" y="879.75" text-anchor="middle" font-family="Liberation Mono" font-size="10" fill="#79797d">1198813</text>
<text x="983.00" y="879.75" text-anchor="middle" font-family="Liberation Mono" font-size="10" fill="#79797d">2944180</text>
<text x="1027.00" y="879.75" text-anchor="middle" font-family="Liberation Mono" font-size="10" fill="#79797d">703098</text>
<text x="1068.50" y="879.75" text-anchor="middle" font-family="Liberation Mono" font-size="10" fill="#79797d">759483</text>
<text x="1110.75" y="879.75" text-anchor="middle" font-family="Liberation Mono" font-size="10" fill="#79797d">822013</text>
<text x="1182.5" y="879.75" text-anchor="end" font-family="Liberation Mono" font-size="10" fill="#79797d">99930810</text>
<text x="1012" y="770.55" text-anchor="middle" font-family="Liberation Mono" font-size="12" fill="#b1b2b7">Duration</text>
<path d="M932 864.4 H1012" stroke="#2f7f63" stroke-width="0.8"/>
<path d="M1012 864.4 H1172" stroke="#6e2f45" stroke-width="0.8"/>
<rect x="1265.00" y="784.60" width="27.00" height="80.40" fill="#f6175b"/>
<rect x="1294.00" y="788.35" width="27.00" height="76.65" fill="#10dba1"/>
<rect x="1335.00" y="782.55" width="27.00" height="82.45" fill="#f6175b"/>
<rect x="1364.00" y="777.00" width="27.00" height="88.00" fill="#10dba1"/>
<rect x="1405.00" y="782.50" width="27.00" height="82.50" fill="#f6175b"/>
<rect x="1434.00" y="789.50" width="27.00" height="75.50" fill="#10dba1"/>
<rect x="1475.00" y="789.00" width="27.00" height="76.00" fill="#f6175b"/>
<rect x="1504.00" y="783.50" width="27.00" height="81.50" fill="#10dba1"/>
<path d="M1258 775 V865 M1252 865 H1538" stroke="#777777" stroke-width="1" fill="none"/>
<path d="M1252 865.00 H1258" stroke="#777777" stroke-width="1"/>
<text x="1250.1" y="868.90" text-anchor="end" font-family="Liberation Mono" font-size="11" fill="#79797d">0</text>
<path d="M1252 842.50 H1258" stroke="#777777" stroke-width="1"/>
<text x="1250.1" y="846.40" text-anchor="end" font-family="Liberation Mono" font-size="11" fill="#79797d">7</text>
<path d="M1252 820.00 H1258" stroke="#777777" stroke-width="1"/>
<text x="1250.1" y="823.90" text-anchor="end" font-family="Liberation Mono" font-size="11" fill="#79797d">14</text>
<path d="M1252 775.00 H1258" stroke="#777777" stroke-width="1"/>
<text x="1250.1" y="787.25" text-anchor="end" font-family="Liberation Mono" font-size="11" fill="#79797d">28</text>
<path d="M1293.00 865 V870.5" stroke="#777777" stroke-width="1"/>
<path d="M1363.00 865 V870.5" stroke="#777777" stroke-width="1"/>
<path d="M1433.00 865 V870.5" stroke="#777777" stroke-width="1"/>
<path d="M1503.00 865 V870.5" stroke="#777777" stroke-width="1"/>
<text x="1293.00" y="879.75" text-anchor="middle" font-family="Liberation Mono" font-size="10" fill="#79797d">bronze</text>
<text x="1363.00" y="879.75" text-anchor="middle" font-family="Liberation Mono" font-size="10" fill="#79797d">gold</text>
<text x="1433.00" y="879.75" text-anchor="middle" font-family="Liberation Mono" font-size="10" fill="#79797d">platinum</text>
<text x="1503.00" y="879.75" text-anchor="middle" font-family="Liberation Mono" font-size="10" fill="#79797d">silver</text>
<text x="1368" y="770.55" text-anchor="middle" font-family="Liberation Mono" font-size="12" fill="#b1b2b7">SpanAttributes.app.loyalty.level</text>
</svg>
<div class="b" style="left:546.60px;top:466.50px;width:339.00px;height:116.00px;background:rgba(29,31,38,0.74);backdrop-filter:blur(9px);-webkit-backdrop-filter:blur(9px);border:1px solid #5b6170;border-radius:3px"></div>
<div class="t" style="top:474.26px;font-size:12px;line-height:17.00px;color:#a9aaaf;font-family:'Liberation Mono', monospace;font-weight:400;left:559.40px;">SpanName</div>
<div class="t" style="top:500.61px;font-size:12px;line-height:17.00px;color:#f4f5f7;font-family:'Liberation Mono', monospace;font-weight:400;left:559.40px;">Error: Visa cache full: cannot add new</div>
<div class="t" style="top:517.31px;font-size:12px;line-height:17.00px;color:#f4f5f7;font-family:'Liberation Mono', monospace;font-weight:400;left:559.40px;">item.</div>
<div class="t" style="top:545.47px;font-size:11px;line-height:15.00px;color:#f4f5f7;font-family:'Liberation Mono', monospace;font-weight:400;left:559.40px;">Inliers: 15.60%</div>
<div class="t" style="top:561.87px;font-size:11px;line-height:15.00px;color:#f4f5f7;font-family:'Liberation Mono', monospace;font-weight:400;left:559.40px;">Outliers: 0.00%</div>
<svg style="left:0;top:0" width="1826" height="1150" viewBox="0 0 1826 1150"><path d="M0 1138 V1150 H12 A12 12 0 0 1 0 1138 Z" fill="#b9b9ba"/><path d="M1826 1138 V1150 H1814 A12 12 0 0 0 1826 1138 Z" fill="#101112"/></svg>
<div style="position:absolute;left:0;top:-20px;width:1826px;height:1170px;box-sizing:border-box;border:1px solid #45484c;border-radius:0 0 12px 12px;pointer-events:none"></div>
</body></html>
